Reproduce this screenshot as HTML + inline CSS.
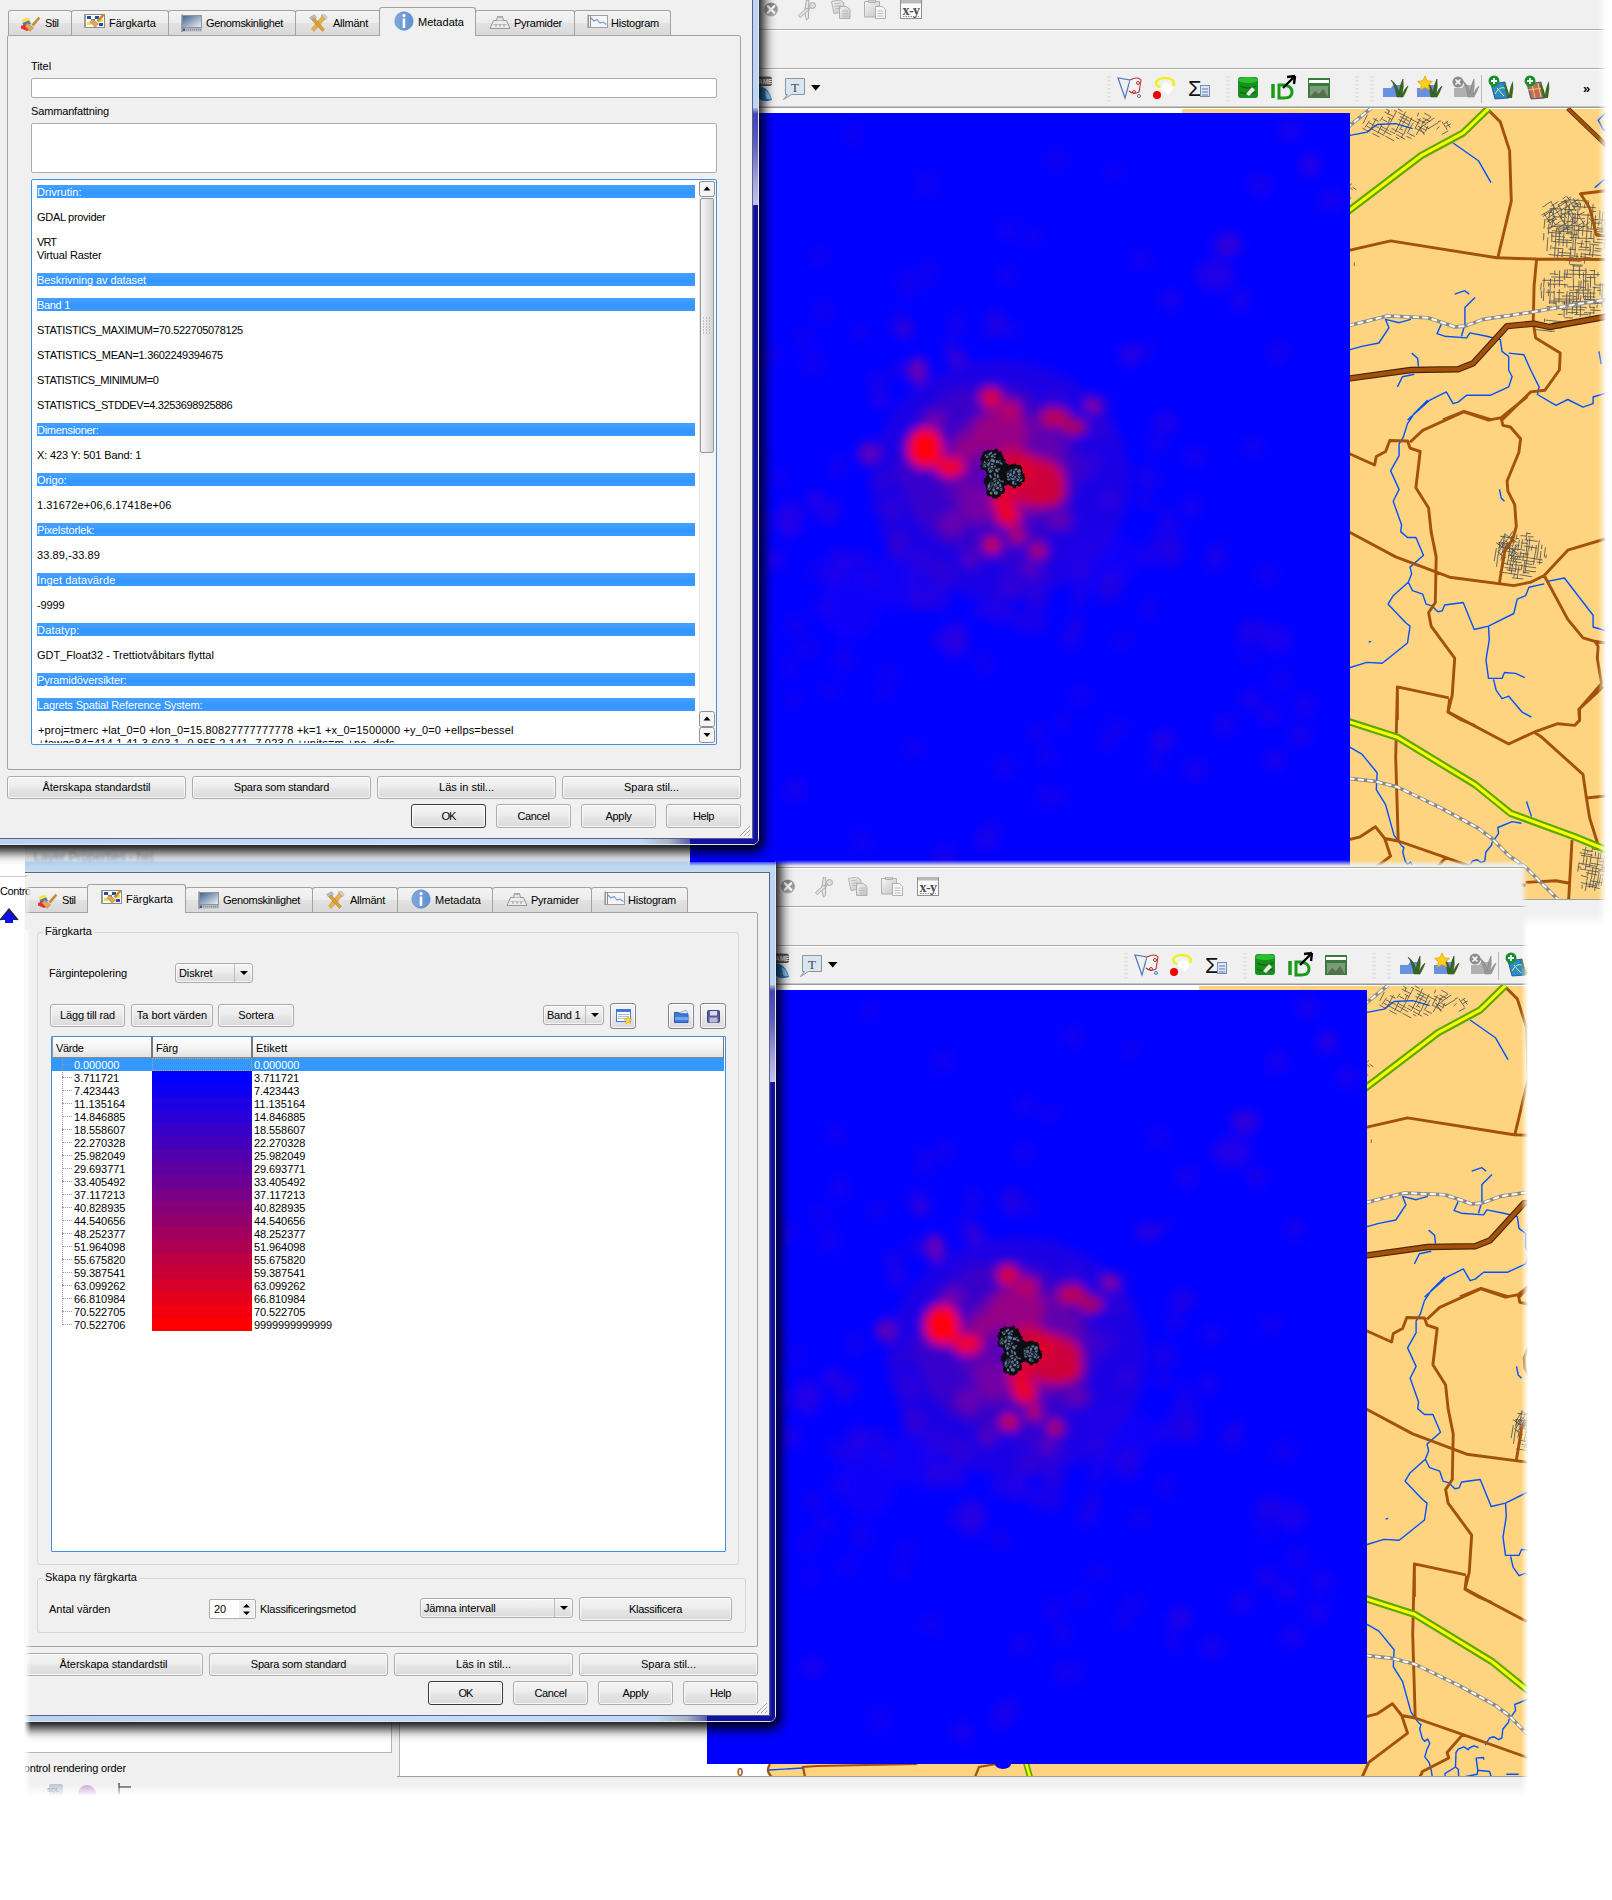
<!DOCTYPE html>
<html lang="sv"><head><meta charset="utf-8"><title>Layer Properties</title>
<style>
html,body{margin:0;padding:0;background:#fff;}
body{width:1612px;height:1900px;position:relative;overflow:hidden;font-family:"Liberation Sans", "DejaVu Sans", sans-serif;font-size:11px;color:#000;}
.a{position:absolute;}
.shot{position:absolute;overflow:hidden;}
.t{position:absolute;white-space:nowrap;line-height:13px;font-size:11px;}
.btn{position:absolute;box-sizing:border-box;border:1px solid #acacac;border-radius:3px;
 background:linear-gradient(#f4f4f4 0%,#ededed 45%,#e5e5e5 55%,#dbdbdb 100%);
 box-shadow:inset 0 0 0 1px rgba(255,255,255,.75);text-align:center;font-size:11px;white-space:nowrap;}
.btn.def{border-color:#3a3a3a;box-shadow:inset 0 0 0 1px #fff;}
.tab{position:absolute;box-sizing:border-box;border:1px solid #a2a2a2;border-bottom:none;border-radius:3px 3px 0 0;
 background:linear-gradient(#f4f4f4 0%,#ececec 48%,#e2e2e2 52%,#d9d9d9 100%);white-space:nowrap;font-size:11px;}
.tab.sel{background:#f0f0f0;z-index:3;}
.tab span{position:absolute;top:0;}
.pane{position:absolute;box-sizing:border-box;border:1px solid #a3a3a3;border-radius:2px;background:#f0f0f0;}
.dlg{position:absolute;background:#f0f0f0;box-sizing:border-box;}
.frame{position:absolute;box-sizing:border-box;}
.inp{position:absolute;box-sizing:border-box;border:1px solid #abadb3;border-radius:2px;background:#fff;}
.hl{position:absolute;left:37px;width:658px;height:13px;background:linear-gradient(#47a1ff,#3396ff 60%,#3a9aff);color:#fff;white-space:nowrap;line-height:15px;overflow:hidden;}
.ln{position:absolute;left:37px;height:14px;line-height:15px;white-space:nowrap;}
.grp{position:absolute;box-sizing:border-box;border:1px solid #d5d5d5;border-radius:3px;}
.grp b{position:absolute;font-weight:normal;background:#f0f0f0;padding:0 2px;line-height:13px;top:-8px;left:5px;white-space:nowrap;}
.combo{position:absolute;box-sizing:border-box;border:1px solid #acacac;border-radius:3px;background:linear-gradient(#f4f4f4 0%,#ededed 45%,#e5e5e5 55%,#dbdbdb 100%);box-shadow:inset 0 0 0 1px rgba(255,255,255,.7);white-space:nowrap;}
.combo i{position:absolute;right:0;top:0;bottom:0;width:17px;border-left:1px solid #bcbcbc;}
.combo i:after{content:"";position:absolute;left:5px;top:7px;border:4px solid transparent;border-top:4px solid #000;border-bottom:none;}
.row{position:absolute;left:0;height:13px;line-height:14px;white-space:nowrap;}
</style></head>
<body>
<div class="shot" style="left:0;top:0;width:1612px;height:930px">
<div class="a" style="left:-60px;top:-60px;width:1780px;height:1010px;background:#f0f0f0"></div>
<div class="a" style="left:-60px;top:-10px;width:1780px;height:1px;background:#a9a9a9"></div><div class="a" style="left:-60px;top:-9px;width:1780px;height:1px;background:#fff"></div>
<div class="a" style="left:-60px;top:29px;width:1780px;height:1px;background:#a9a9a9"></div><div class="a" style="left:-60px;top:30px;width:1780px;height:1px;background:#fff"></div>
<div class="a" style="left:-60px;top:68px;width:1780px;height:1px;background:#a9a9a9"></div><div class="a" style="left:-60px;top:69px;width:1780px;height:1px;background:#fff"></div>
<div class="a" style="left:-60px;top:106px;width:1780px;height:1px;background:#c4c4c4"></div><div class="a" style="left:-60px;top:107px;width:1780px;height:1px;background:#9a9a9a"></div>
<svg class="a" style="left:762px;top:0px" width="170" height="24" viewBox="762 0 170 24">
<defs><linearGradient id="xg" x1="0" y1="0" x2="0" y2="1"><stop offset="0" stop-color="#8a8a8a"/><stop offset="1" stop-color="#adadad"/></linearGradient>
<linearGradient id="pg" x1="0" y1="0" x2="1" y2="1"><stop offset="0" stop-color="#f4f4f4"/><stop offset="1" stop-color="#c4c4c4"/></linearGradient></defs>
<circle cx="771" cy="9.500" r="7.600" fill="#e2e2e2"/><circle cx="771" cy="9.500" r="6.800" fill="url(#xg)"/><path d="M767.800 6.300 L774.200 12.700 M774.200 6.300 L767.800 12.700" stroke="#fff" stroke-width="2.300" stroke-linecap="round"/>
<g fill="#e6e6e6" stroke="#a4a4a4" stroke-width=".9"><path d="M806.500 0 L804.500 12 L806.500 20 L808.500 18.500 L808.800 0Z"/><path d="M798.500 15.500 L807 8 L809.500 9.500 L800 17.500Z"/><circle cx="812.500" cy="5.500" r="3" fill="#ddd"/><path d="M807.500 9.500 L811 7.500"/></g>
<g fill="url(#pg)" stroke="#a9a9a9" stroke-width=".9"><path d="M831.500 1.500 l8 -1.500 l4 2.500 l1.500 9 l-11 2z"/><path d="M839.500 6.500 h7 l3.500 3 v9 h-10.500z"/></g>
<path d="M834 4l6 -1M834.500 6.500l6 -1M835 9l6 -1M842 11h6M842 13.500h6M842 16h6" stroke="#b0b0b0" stroke-width=".8"/>
<g stroke="#a9a9a9" stroke-width=".9"><path d="M864.500 1.500 h15 v15.500 h-15z" fill="url(#pg)"/><path d="M868.500 0 h7 v2.500 h-7z" fill="#d4d4d4"/><path d="M875.500 6.500 h7 l3 3 v9 h-10z" fill="#f6f6f6"/></g>
<path d="M877.500 11h6M877.500 13.500h6M877.500 16h6" stroke="#b0b0b0" stroke-width=".8"/>
<rect x="900.500" y="0.500" width="21" height="18" fill="#fbfbfb" stroke="#8f8f8f"/><rect x="901" y="0" width="20" height="3.500" fill="#b9b9b9"/>
<text x="911" y="14.500" text-anchor="middle" font-family="Liberation Serif,serif" font-weight="bold" font-size="14" fill="#4c4c4c" letter-spacing="-.5">x-y</text><path d="M903 16.500h16" stroke="#777" stroke-width=".8" stroke-dasharray="1.500 1"/></svg><svg class="a" style="left:756px;top:74px" width="70" height="30" viewBox="756 74 70 30">
<rect x="755" y="77" width="16.500" height="8.500" rx="1.500" fill="#6a6a6a" stroke="#444" stroke-width=".8"/><text x="758" y="84" font-family="Liberation Sans,sans-serif" font-weight="bold" font-size="6.500" fill="#eee">AME</text><path d="M758 86 q11 1 14 14 q-9 3 -14 -2z" fill="#2a78c0"/><path d="M765 90 q5 3 6 9 q-3 1 -5 -1z" fill="#8cc4ec"/>
<path d="M785.500 78.500 h19 v16 h-13 l-8 5 l4 -5 h-2z" fill="#d8e6f2" stroke="#8c959c"/>
<text x="795" y="92" text-anchor="middle" font-family="Liberation Serif,serif" font-size="13" fill="#444">T</text>
<path d="M811 85 h9.500 l-4.750 5.500z" fill="#000"/></svg><svg class="a" style="left:1100px;top:72px" width="500" height="32" viewBox="1100 72 500 32">
<g fill="#fff" stroke="#cfcfcf" stroke-width="1"><path d="M1108 76v26M1110 76v26" stroke-dasharray="1.500 2.500"/><path d="M1227 76v26M1229 76v26" stroke-dasharray="1.500 2.500"/>
<path d="M1356 76v26M1358 76v26M1371 76v26M1373 76v26" stroke-dasharray="1.500 2.500"/></g>
<path d="M1118 78 L1125 98 L1130 80 Z" fill="none" stroke="#4a78b8" stroke-width="1.2"/><path d="M1130 80 q8 -4 11 0 l-2 12 q-6 3 -10 -1" fill="#f4f4f4" stroke="#c03030" stroke-width="1.100"/>
<circle cx="1138" cy="83" r="1.500" fill="none" stroke="#c03030"/><circle cx="1134" cy="92" r="1.500" fill="none" stroke="#c03030"/><circle cx="1139" cy="96" r="1.500" fill="none" stroke="#4a78b8"/>
<ellipse cx="1165" cy="83" rx="9" ry="5" fill="none" stroke="#f0f020" stroke-width="2.400"/><path d="M1160 88 l6 -6 l8 5 l-6 8 z" fill="#fff"/><circle cx="1157" cy="95" r="4" fill="#f00000"/>
<text x="1188" y="96" font-family="Liberation Sans,sans-serif" font-size="22" fill="#111">Σ</text><rect x="1200.500" y="85.500" width="9" height="11" fill="#dde6f4" stroke="#7a8aa8"/><path d="M1202 89h6M1202 92h6M1202 95h6" stroke="#5a78c0"/>
<rect x="1238" y="77" width="20" height="21" rx="3" fill="#18901c"/><ellipse cx="1248" cy="80" rx="10" ry="3" fill="#2cc030"/><path d="M1240 86q8 4 16 0M1240 92q8 4 16 0" stroke="#0a5a0c" fill="none"/><path d="M1246 94 l6 -7 l3 3 l-6 6z" fill="#e8e8e8"/>
<path d="M1273 84v14" stroke="#1a9a1a" stroke-width="3.500"/><path d="M1279 98v-13h5q8 1 8 7q0 6 -8 6z" fill="none" stroke="#1a9a1a" stroke-width="3"/><path d="M1283 88 L1295 76 M1295 76 l-8 1 M1295 76 l-1 8" stroke="#000" stroke-width="2.400"/>
<rect x="1308" y="78" width="22" height="20" fill="#3c7a3c"/><rect x="1309" y="80" width="20" height="3" fill="#fff"/><rect x="1310" y="86" width="18" height="11" fill="#7a9a78"/><path d="M1310 97 l5 -6 l4 3 l4 -5 l5 8z" fill="#55704e"/>
<g id="grs"><path d="M1383 88 h8 l2 -3 h8 v12 h-18z" fill="#6a90e0"/><path d="M1397 97 q-2 -12 -6 -17 q7 5 8 14 q1 -10 4 -15 q1 8 -1 16 q3 -7 6 -9 q-2 6 -5 11z" fill="#3a6a20" stroke="#20400f" stroke-width=".5"/></g>
<path d="M1417 88 h8 l2 -3 h8 v12 h-18z" fill="#6a90e0"/><path d="M1431 97 q-2 -12 -6 -17 q7 5 8 14 q1 -10 4 -15 q1 8 -1 16 q3 -7 6 -9 q-2 6 -5 11z" fill="#3a6a20" stroke="#20400f" stroke-width=".5"/>
<path d="M1425 76 l2.200 4.800 l5.200 .6 l-3.900 3.500 l1.100 5.100 l-4.600 -2.600 l-4.600 2.600 l1.100 -5.100 l-3.900 -3.500 l5.200 -.6z" fill="#ffd020" stroke="#e8a000" stroke-width=".8"/>
<path d="M1454 88 h8 l2 -3 h8 v12 h-18z" fill="#b0b0b0"/><path d="M1468 97 q-2 -12 -6 -17 q7 5 8 14 q1 -10 4 -15 q1 8 -1 16 q3 -7 6 -9 q-2 6 -5 11z" fill="#9a9a9a" stroke="#7a7a7a" stroke-width=".5"/>
<circle cx="1458" cy="82" r="5.500" fill="#8c8c8c"/><path d="M1455.500 79.500l5 5M1460.500 79.500l-5 5" stroke="#fff" stroke-width="1.600"/>
<path d="M1481.500 75v28" stroke="#b8b8b8"/>
<path d="M1491 84 l14 -2 l4 16 l-14 1z" fill="#2a8ad0" stroke="#1a4a78" stroke-width=".8"/><path d="M1495 94 q4 -8 10 -6 M1497 88 q3 4 7 8" stroke="#d8f060" fill="none"/><path d="M1507 98 q-2 -12 -5 -16 q6 5 7 13 q1 -9 4 -14 q1 8 -1 17z" fill="#3a6a20"/>
<circle cx="1494" cy="81" r="5.500" fill="#18902a"/><path d="M1491 81h6M1494 78v6" stroke="#fff" stroke-width="1.800"/>
<path d="M1527 84 l14 -2 l4 16 l-14 1z" fill="#c06a58" stroke="#1a4a78" stroke-width=".8"/><path d="M1528 90 l16 -2 M1532 84 l3 14 M1538 83 l3 14" stroke="#e8d070" fill="none"/><path d="M1543 98 q-2 -12 -5 -16 q6 5 7 13 q1 -9 4 -14 q1 8 -1 17z" fill="#3a6a20"/>
<circle cx="1530" cy="81" r="5.500" fill="#18902a"/><path d="M1527 81h6M1530 78v6" stroke="#fff" stroke-width="1.800"/>
<text x="1583" y="93" font-family="Liberation Sans,sans-serif" font-size="13" font-weight="bold" fill="#000">»</text>
</svg>
<div class="a" style="left:-60px;top:108px;width:435px;height:768px;background:#fff;border:1px solid #b5b5b5;border-top:none;box-sizing:border-box"></div>
<div class="t" style="left:-1px;top:885px;"><span style="letter-spacing:-0.164px">Control rendering order</span></div>
<svg class="a" style="left:0px;top:904px" width="130" height="16" viewBox="0 896 130 16"><path d="M-2 898 l8 8 l-6 4z" fill="#2030c0"/><rect x="32" y="899" width="14" height="12" rx="2" fill="#b8c4d0"/><text x="30" y="907" font-size="6" font-family="Liberation Sans,sans-serif" fill="#556">SQL</text><circle cx="70" cy="909" r="9" fill="#c8a0d8"/><path d="M102 898v12M102 902h12" stroke="#333" stroke-width="1.300"/></svg>
<svg class="a" style="left:381px;top:108px" width="1330" height="792" viewBox="381 108 1330 792">
<defs><filter id="bla" x="-50%" y="-50%" width="200%" height="200%"><feGaussianBlur stdDeviation="5.500"/></filter></defs>
<rect x="381" y="108" width="1330" height="792" fill="#fff"/>
<path d="M1182 109 H1711 V900 H756 Q748 894 753 886 L753 113 L1182 113 Z" fill="#fed480"/><path d="M753 887 Q748 894 755 900 M788 900 L786 890 L800 889 L900 887 M958 900 L962 890 L985 886" fill="none" stroke="#a2520c" stroke-width="2.200"/><path d="M752 893 L786 891" stroke="#0050ff" stroke-width="1.300"/><path d="M1009 886 L1013 900" stroke="#5aa800" stroke-width="6"/><path d="M1009 886 L1013 900" stroke="#ffff00" stroke-width="2.600"/><text x="720" y="899" font-size="11" font-family="Liberation Sans,sans-serif" fill="#a2520c" font-weight="bold">0</text>
<path d="M1340.0 137.1 L1350.1 135.4 L1367.0 132.1 L1377.1 124.5 L1395.7 123.6 L1412.6 128.7 M1453.1 143.0 L1478.4 160.7 L1491.0 182.7 M1454.7 294.1 L1464.9 290.7 L1469.1 294.1 M1475.0 297.4 L1464.9 307.6 L1464.9 324.4 L1461.5 336.2 M1340.0 353.1 L1350.1 349.7 L1361.9 346.4 L1378.8 343.0 L1388.9 327.8 L1385.6 319.4 L1399.1 322.7 L1410.9 319.4 M1441.2 324.4 L1437.0 333.7 L1444.6 336.2 L1466.6 337.9 L1469.9 332.9 L1486.8 336.2 L1500.3 339.6 L1502.0 351.4 L1508.7 356.5 L1508.7 370.0 L1512.1 376.7 L1508.7 386.9 L1490.2 395.3 L1466.6 395.3 L1458.1 402.1 L1453.1 403.7 L1446.3 391.9 L1429.4 400.4 L1407.5 419.9 M1508.7 353.1 L1523.9 354.8 L1530.7 370.0 L1539.1 386.9 L1537.4 394.5 L1556.0 405.4 L1567.8 399.5 L1583.0 407.1 L1593.1 403.7 L1593.1 397.0 L1610.0 391.9 M1411.7 353.1 L1417.6 358.2 L1418.5 366.6 M1397.4 386.9 L1402.4 376.7 L1414.2 374.2 M1610.0 108.4 L1598.2 120.2 L1603.2 129.5 L1610.0 132.1 M1594.8 187.7 L1603.2 180.2 L1610.0 179.3 M1599.0 351.4 L1601.2 364.1 M1427.7 400.0 L1414.2 413.5 L1407.5 423.6 L1403.3 437.1 L1399.1 443.9 L1399.1 455.7 L1390.6 470.9 L1399.1 489.4 L1393.2 501.2 L1401.6 524.9 L1400.7 531.6 L1407.5 537.5 L1415.9 537.5 L1423.5 555.2 L1410.0 567.1 L1411.7 573.8 L1408.3 582.2 L1393.2 595.7 L1388.1 604.2 L1405.8 622.7 L1410.0 626.1 L1407.5 643.0 L1382.2 663.2 L1367.0 662.4 L1350.1 667.5 L1340.0 670.0 M1408.3 582.2 L1412.6 590.7 L1422.7 594.1 L1426.1 604.2 L1432.0 605.9 L1437.9 611.8 L1442.1 610.9 L1444.6 605.0 L1463.2 602.5 L1474.2 629.5 L1488.5 626.1 L1513.8 613.5 L1517.2 599.1 L1525.6 595.7 L1529.0 587.3 L1544.2 583.9 M1488.5 626.1 L1489.3 639.6 L1486.0 659.9 L1488.5 678.4 L1502.0 678.4 L1504.5 672.5 L1515.5 673.4 L1524.8 677.6 M1493.6 679.3 L1496.1 690.2 L1502.0 698.7 L1508.7 696.2 L1522.2 712.2 L1531.5 717.2 M1547.6 581.4 L1564.4 578.0 L1593.1 615.2 L1593.1 627.0 L1610.0 632.0 M1499.5 489.4 L1501.2 497.9 L1504.5 501.2 M1368.7 642.2 L1371.2 641.3 M1340.0 742.3 L1350.1 747.4 L1361.9 754.1 L1377.1 772.7 L1376.3 789.6 L1385.6 804.7 L1394.0 835.1 L1401.1 845.2 M1526.5 801.4 L1531.5 816.6 M1521.4 823.3 L1512.1 821.6 L1497.8 827.5 L1498.6 833.4 L1492.7 841.9 M1401.1 845.3 L1403.9 847.6 L1402.7 852.0 L1405.5 862.1 L1407.8 864.3 L1410.6 862.1 L1412.8 866.5 L1410.0 872.1 L1407.8 879.9 L1412.2 885.5 L1414.5 894.5 L1415.4 901.2 M1492.1 842.0 L1491.5 845.3 L1485.9 852.0 L1484.8 861.0 L1481.5 862.6 L1477.0 859.8 L1472.5 861.0 L1468.1 868.2 M1461.4 870.5 L1456.9 868.8 L1452.4 871.0 L1451.3 872.7 L1446.8 869.9 L1441.3 872.1 L1439.0 875.5 L1438.5 890.0 L1427.9 896.7 L1428.4 901.2 M1438.5 890.0 L1441.3 892.2 L1441.8 901.2 M1466.9 882.7 L1466.4 880.5 L1459.1 881.1 L1460.8 893.3 L1460.2 897.3 L1446.8 900.0 M1460.8 893.3 L1472.5 894.5 L1474.8 901.2 M1489.3 897.3 L1501.6 897.3" fill="none" stroke="#0050ff" stroke-width="1.4" stroke-linejoin="round"/>
<path d="M1424.2 113.1L1430.7 116.6 M1422.7 117.9L1430.2 121.7 M1397.8 108.7L1402.6 111.5 M1417.2 119.0L1425.8 123.3 M1394.2 110.3L1397.0 111.7 M1398.4 112.5L1409.5 118.2 M1409.8 118.6L1419.8 123.6 M1424.4 126.4L1428.9 128.8 M1386.2 109.1L1389.9 111.4 M1400.0 116.5L1409.6 121.4 M1417.7 125.9L1426.3 130.7 M1384.6 111.9L1393.7 116.7 M1398.4 119.3L1409.5 124.9 M1415.1 128.1L1425.0 133.2 M1387.7 117.1L1391.7 119.4 M1382.5 119.5L1387.1 121.8 M1400.8 129.2L1403.1 130.2 M1408.4 133.2L1412.0 135.4 M1411.4 134.8L1414.9 136.5 M1373.1 118.5L1378.6 121.3 M1391.3 128.1L1395.2 130.3 M1395.1 130.1L1403.2 134.5 M1406.3 136.1L1411.4 138.6 M1380.9 126.2L1388.9 130.6 M1389.8 131.0L1394.9 133.7 M1396.0 134.3L1405.2 139.3 M1368.7 122.7L1378.9 127.9 M1379.4 128.3L1391.4 135.0 M1395.8 137.1L1399.3 139.2 M1366.9 126.3L1377.4 131.9 M1377.4 131.9L1384.2 135.5 M1385.4 136.2L1394.4 141.0 M1362.4 128.1L1369.6 132.0 M1372.4 133.4L1379.6 137.2 M1367.4 114.9L1362.8 123.9 M1369.6 120.6L1365.1 127.4 M1376.4 118.2L1372.3 126.0 M1372.3 125.9L1370.3 130.5 M1383.0 116.6L1380.2 120.7 M1389.1 110.9L1387.9 114.5 M1381.8 124.6L1377.7 133.6 M1390.3 118.3L1387.4 124.2 M1396.2 111.8L1390.3 122.6 M1390.4 122.7L1383.7 134.5 M1405.6 111.6L1401.4 120.1 M1401.2 119.9L1395.1 132.5 M1407.0 117.2L1402.5 124.3 M1403.0 124.7L1399.4 130.0 M1412.0 117.2L1407.3 127.7 M1406.8 127.1L1403.8 134.3 M1403.3 133.7L1401.2 138.2 M1418.7 112.6L1417.3 116.4 M1413.2 122.8L1407.2 133.4 M1420.4 118.4L1415.0 128.5 M1424.0 120.8L1420.3 129.0 M1419.9 128.6L1416.2 135.0 M1428.0 125.9L1425.5 131.4 M1421.8 122.8L1431.1 117.3 M1419.3 128.2L1426.4 123.9 M1426.0 123.5L1434.4 117.9 M1427.8 129.0L1438.4 122.5 M1437.9 122.0L1440.8 120.7 M1436.5 129.3L1439.5 126.4 M1444.1 124.0L1448.1 121.1 M1446.0 126.5L1450.8 123.9 M1441.8 134.4L1448.2 130.9 M1419.5 127.6L1424.3 134.8 M1441.8 121.6L1447.4 129.8 M1446.2 121.8L1450.2 127.5 M1569.3 199.8L1579.7 200.7 M1579.6 200.6L1588.9 201.1 M1560.8 201.8L1569.2 202.1 M1572.1 202.6L1577.2 203.5 M1572.2 206.3L1585.1 207.3 M1585.0 207.2L1595.6 207.6 M1550.1 208.5L1560.0 209.0 M1563.8 209.4L1576.5 209.9 M1592.7 211.5L1596.1 211.4 M1548.9 212.6L1551.9 212.4 M1560.8 213.4L1564.4 214.0 M1566.0 213.8L1576.0 214.0 M1576.5 214.5L1581.0 214.7 M1581.2 214.8L1592.1 215.4 M1553.5 216.6L1559.9 217.0 M1560.0 217.1L1564.3 217.3 M1573.0 218.0L1580.6 218.6 M1581.8 218.6L1584.7 218.4 M1593.8 219.4L1607.6 220.3 M1546.6 219.9L1554.8 219.9 M1561.1 220.9L1565.7 220.9 M1566.1 221.2L1574.3 222.0 M1593.2 223.1L1601.3 223.2 M1556.1 224.8L1563.4 225.5 M1565.7 225.5L1577.3 225.8 M1577.9 226.3L1585.1 226.5 M1585.4 226.9L1589.1 227.0 M1596.9 227.7L1604.5 228.5 M1605.8 228.3L1610.5 229.0 M1550.6 226.3L1561.3 226.9 M1561.5 227.1L1573.3 227.9 M1586.7 228.8L1598.6 229.4 M1598.9 229.7L1605.0 230.3 M1547.1 228.1L1551.2 227.9 M1557.2 228.8L1570.6 229.4 M1573.2 230.0L1583.5 230.6 M1583.5 230.7L1588.3 231.5 M1587.8 231.0L1592.1 231.5 M1597.3 231.6L1605.2 232.1 M1551.9 230.7L1564.5 231.6 M1564.5 231.5L1572.5 232.6 M1595.1 233.7L1600.4 233.9 M1548.0 232.2L1561.1 233.5 M1566.4 233.5L1577.9 234.8 M1595.8 235.6L1603.7 236.2 M1551.0 236.0L1561.1 236.5 M1561.4 236.7L1565.0 237.3 M1569.4 237.3L1581.2 238.3 M1581.0 238.1L1593.1 238.6 M1596.8 239.2L1603.1 239.7 M1603.0 239.7L1609.9 240.0 M1556.4 239.5L1568.0 240.2 M1568.2 240.3L1572.0 240.5 M1584.5 241.5L1590.8 241.9 M1593.3 242.1L1607.1 243.4 M1552.6 241.5L1565.9 242.6 M1565.7 242.4L1572.0 242.6 M1576.7 243.2L1584.1 244.0 M1588.8 244.0L1599.1 245.1 M1579.1 247.0L1589.3 247.6 M1595.2 248.2L1602.5 249.1 M1551.9 247.9L1563.3 248.7 M1568.4 249.1L1575.9 249.7 M1578.3 249.7L1591.0 250.2 M1593.7 250.8L1601.1 251.2 M1558.8 252.3L1571.4 253.4 M1581.8 253.9L1592.0 255.0 M1591.6 254.6L1601.6 255.8 M1548.7 254.5L1563.1 256.0 M1562.6 255.4L1575.4 256.1 M1575.6 256.4L1578.5 256.4 M1580.4 256.7L1591.4 258.0 M1569.4 257.9L1573.3 257.7 M1575.1 258.3L1580.6 258.8 M1580.4 258.7L1593.4 259.6 M1565.1 260.2L1573.6 261.1 M1573.2 260.8L1579.0 261.4 M1578.7 261.2L1581.7 261.0 M1569.9 264.6L1582.5 265.2 M1544.9 219.0L1544.3 225.7 M1544.4 225.8L1543.8 228.5 M1543.9 233.0L1543.5 240.2 M1549.7 212.0L1548.6 222.3 M1548.9 224.0L1548.3 234.4 M1547.9 237.4L1546.9 251.1 M1553.8 205.4L1553.5 209.5 M1553.5 209.5L1553.1 219.1 M1552.8 220.0L1551.8 227.8 M1551.9 231.9L1551.8 242.2 M1551.0 245.4L1550.6 249.3 M1556.5 228.1L1555.4 241.5 M1555.5 241.7L1555.9 245.4 M1555.3 244.8L1554.5 257.3 M1561.3 208.5L1561.0 219.4 M1559.6 232.8L1558.8 245.9 M1558.5 247.9L1558.1 252.9 M1558.2 253.0L1557.2 258.5 M1566.2 199.6L1566.2 208.2 M1565.6 207.7L1564.9 216.3 M1565.0 216.3L1563.8 227.7 M1564.2 228.1L1563.3 231.9 M1563.9 232.5L1563.0 246.3 M1562.7 249.4L1561.9 257.2 M1569.4 204.0L1568.5 217.7 M1568.4 217.6L1567.8 223.2 M1568.0 223.3L1567.5 231.5 M1566.9 239.5L1566.8 247.5 M1573.1 213.5L1572.1 224.7 M1572.3 224.9L1572.0 231.9 M1571.8 231.7L1571.9 239.8 M1570.8 246.6L1570.6 254.4 M1570.3 254.1L1569.4 264.3 M1575.2 213.3L1574.9 224.7 M1574.4 225.7L1574.2 235.8 M1573.7 235.3L1572.8 238.8 M1573.4 239.3L1572.5 250.0 M1578.0 208.3L1577.4 220.7 M1577.1 220.4L1576.8 226.6 M1576.4 231.7L1575.1 245.2 M1575.4 245.5L1574.7 256.5 M1580.6 203.7L1579.7 210.3 M1579.1 223.8L1578.0 235.1 M1578.3 235.5L1578.5 238.8 M1577.1 253.1L1576.6 259.4 M1584.7 204.5L1584.4 208.2 M1583.4 223.1L1582.4 235.8 M1582.2 239.8L1581.1 247.4 M1581.3 252.8L1581.1 257.6 M1589.0 201.5L1588.3 204.4 M1588.2 213.4L1587.0 226.6 M1587.2 226.8L1586.5 237.9 M1586.4 238.9L1586.1 249.4 M1585.4 253.4L1584.4 263.6 M1593.1 204.0L1592.8 208.8 M1592.7 208.7L1592.6 218.1 M1592.1 217.6L1591.1 228.9 M1591.2 231.0L1590.8 239.0 M1590.2 245.5L1590.2 252.8 M1589.7 252.3L1589.3 255.6 M1595.5 215.4L1595.0 226.5 M1594.8 226.3L1593.8 236.9 M1594.0 237.1L1593.5 242.6 M1593.5 244.9L1593.1 251.7 M1593.0 251.6L1592.4 257.3 M1599.9 210.3L1599.9 213.6 M1599.7 213.4L1599.7 218.8 M1599.2 221.0L1598.6 225.5 M1603.1 211.6L1601.7 223.8 M1602.2 224.3L1601.8 233.0 M1604.5 222.0L1604.8 226.0 M1606.7 218.6L1605.6 228.3 M1605.8 231.5L1605.1 245.4 M1604.9 245.2L1604.5 248.6 M1608.7 222.1L1607.9 231.3 M1572.5 265.9L1582.4 266.1 M1568.7 270.0L1579.9 270.6 M1579.5 270.2L1586.1 270.7 M1589.6 270.4L1594.6 270.8 M1549.7 273.9L1553.0 273.8 M1553.1 274.0L1558.2 274.5 M1563.6 274.1L1576.4 274.3 M1576.4 274.4L1586.6 274.6 M1586.5 274.5L1599.8 274.7 M1551.4 276.9L1560.9 277.2 M1560.7 277.1L1564.4 277.1 M1564.4 277.1L1571.6 277.6 M1586.3 277.5L1595.7 277.5 M1542.5 280.4L1553.2 280.2 M1553.6 280.6L1559.1 280.6 M1559.2 280.7L1563.1 280.6 M1584.0 281.1L1589.5 281.2 M1548.4 284.2L1559.9 284.2 M1560.1 284.4L1568.2 285.0 M1595.4 285.0L1605.4 285.0 M1567.1 286.9L1579.5 286.6 M1580.0 287.2L1585.1 287.4 M1592.5 287.4L1599.7 287.9 M1569.1 290.0L1572.6 290.5 M1574.6 290.1L1580.4 290.1 M1580.5 290.2L1591.5 289.9 M1597.4 290.5L1601.1 290.3 M1545.7 292.2L1554.7 292.2 M1556.7 292.4L1564.2 292.8 M1568.8 292.6L1578.5 292.6 M1578.7 292.8L1589.6 293.2 M1589.4 292.9L1595.3 293.3 M1561.9 296.1L1572.5 295.9 M1573.0 296.3L1576.4 296.7 M1582.7 296.5L1595.4 297.1 M1554.5 299.0L1567.6 299.0 M1567.8 299.2L1579.5 299.0 M1584.0 299.5L1595.1 299.5 M1598.0 299.7L1605.6 299.9 M1549.4 301.0L1559.8 301.1 M1559.8 301.2L1572.2 300.9 M1572.7 301.4L1585.7 301.5 M1585.8 301.6L1590.5 301.3 M1590.8 301.7L1597.5 302.0 M1597.3 301.8L1603.5 301.8 M1548.9 302.7L1556.2 303.2 M1561.9 302.9L1570.1 303.0 M1570.1 303.1L1582.2 303.3 M1582.2 303.3L1594.9 303.8 M1594.6 303.5L1602.4 303.3 M1546.7 306.5L1552.2 307.0 M1560.7 306.7L1571.2 306.4 M1571.7 306.9L1578.0 307.1 M1577.9 307.0L1580.9 307.0 M1581.0 307.1L1586.8 307.7 M1590.0 307.3L1594.5 307.5 M1550.2 309.2L1556.6 309.5 M1562.4 309.4L1572.3 309.1 M1572.8 309.6L1579.9 309.9 M1579.6 309.7L1584.8 309.9 M1590.1 309.9L1600.8 310.6 M1567.4 312.6L1578.3 312.5 M1583.9 312.8L1587.1 312.6 M1587.4 312.9L1594.2 312.9 M1557.7 314.4L1562.6 314.3 M1574.7 314.6L1579.0 314.4 M1579.3 314.7L1588.3 314.6 M1564.4 317.6L1573.0 318.0 M1541.3 282.9L1540.7 289.8 M1541.2 290.4L1541.6 298.3 M1544.3 277.9L1543.6 287.3 M1544.1 287.8L1543.3 300.9 M1548.2 282.1L1548.5 286.5 M1548.1 289.0L1548.5 296.2 M1550.5 278.7L1550.2 288.3 M1550.3 288.4L1549.7 292.5 M1550.3 293.1L1549.6 303.9 M1554.6 270.6L1555.1 274.9 M1554.5 278.2L1554.6 282.6 M1554.4 283.7L1554.4 288.4 M1554.2 290.5L1554.1 304.2 M1556.2 300.9L1556.0 307.6 M1559.6 270.5L1559.5 278.9 M1559.4 278.8L1559.4 286.6 M1559.3 289.2L1558.9 303.1 M1562.0 305.3L1562.2 310.6 M1565.0 269.3L1564.3 280.0 M1564.8 283.6L1565.0 287.7 M1564.5 301.2L1564.1 308.0 M1564.3 308.3L1564.0 316.9 M1567.4 269.3L1566.8 277.7 M1567.1 291.2L1566.4 304.6 M1566.8 308.1L1566.7 314.9 M1569.8 292.9L1569.3 304.8 M1573.5 264.5L1573.6 269.6 M1573.4 269.4L1573.1 278.3 M1573.3 278.4L1573.6 290.8 M1573.0 292.8L1573.3 302.0 M1572.8 301.6L1572.1 314.3 M1577.0 289.2L1576.6 301.0 M1576.8 301.3L1576.5 314.5 M1579.3 265.9L1579.5 278.5 M1579.1 280.5L1578.6 293.8 M1578.8 294.1L1578.2 299.5 M1581.2 280.6L1580.6 289.0 M1580.9 295.5L1580.4 301.1 M1580.8 304.3L1580.2 317.0 M1583.6 272.4L1583.3 278.7 M1583.5 278.8L1583.3 290.4 M1583.3 290.4L1583.6 298.7 M1585.9 268.3L1586.3 273.0 M1585.8 272.5L1585.6 286.5 M1585.6 286.5L1585.4 290.4 M1585.4 294.5L1585.2 300.9 M1588.0 283.0L1588.3 291.7 M1587.9 291.2L1587.8 300.2 M1590.7 275.4L1590.4 287.7 M1590.5 291.4L1590.5 299.0 M1590.3 298.8L1589.8 307.9 M1590.1 312.3L1589.8 316.6 M1594.6 269.6L1594.0 277.0 M1594.5 277.4L1594.8 285.1 M1594.3 286.5L1593.6 298.1 M1594.0 306.8L1593.8 314.0 M1598.0 272.6L1597.9 276.3 M1597.4 304.6L1596.8 308.1 M1600.2 282.6L1600.0 295.5 M1602.4 283.2L1602.2 286.4 M1602.4 286.6L1602.0 298.6 M1602.1 300.6L1602.2 306.6 M1542.4 207.0L1545.8 205.5 M1545.4 205.1L1551.9 201.1 M1551.1 206.2L1558.4 201.5 M1562.6 199.0L1565.7 196.4 M1541.4 215.1L1553.5 208.5 M1557.7 205.0L1563.9 201.6 M1563.6 201.3L1566.6 200.0 M1568.1 198.5L1570.9 197.0 M1542.9 216.6L1552.9 209.8 M1553.2 210.2L1559.9 205.5 M1560.2 205.8L1570.8 198.7 M1545.9 219.4L1554.4 213.4 M1554.8 213.8L1561.2 209.7 M1561.3 209.8L1569.5 205.4 M1569.0 204.9L1578.8 199.0 M1546.9 222.2L1555.0 217.5 M1573.5 205.5L1579.9 202.4 M1549.7 223.1L1555.8 219.1 M1559.7 216.9L1563.3 214.2 M1563.5 214.5L1573.7 209.0 M1574.2 207.8L1580.9 203.0 M1549.3 228.9L1553.4 225.8 M1553.7 226.1L1560.5 221.2 M1558.3 227.7L1567.5 222.5 M1570.1 220.3L1575.6 216.2 M1579.2 214.7L1584.5 212.0 M1558.2 233.1L1568.9 227.0 M1568.6 226.6L1576.8 221.3 M1565.6 233.7L1571.4 230.8 M1577.6 226.2L1579.9 224.1 M1580.3 224.5L1585.2 220.8 M1575.8 231.4L1582.6 227.0 M1582.7 227.1L1589.8 222.2 M1543.9 213.3L1546.7 217.7 M1547.8 219.5L1551.2 225.2 M1551.5 218.6L1555.6 225.3 M1557.1 227.6L1561.4 234.1 M1549.7 208.6L1556.7 220.0 M1551.1 202.0L1554.8 208.0 M1555.0 208.2L1561.0 217.7 M1560.9 217.7L1565.6 225.1 M1565.5 224.9L1568.5 230.2 M1558.4 205.1L1561.9 211.0 M1563.7 213.7L1566.7 218.1 M1567.2 210.5L1573.4 220.4 M1573.4 220.4L1575.2 223.6 M1564.0 199.8L1569.0 207.6 M1568.6 207.2L1573.8 215.3 M1566.6 196.0L1573.2 206.2 M1572.7 205.8L1575.9 211.2 M1577.1 212.8L1584.5 224.5 M1573.3 198.4L1578.8 207.2 M1588.9 217.6L1591.4 221.2 M1526.7 533.4L1530.7 533.6 M1520.5 535.6L1526.3 536.1 M1528.0 536.7L1533.7 536.9 M1500.3 536.3L1512.8 538.3 M1516.3 538.5L1519.0 538.6 M1524.5 539.7L1537.6 541.3 M1511.0 541.5L1515.1 542.2 M1521.6 543.0L1527.6 543.5 M1498.2 542.4L1510.0 544.0 M1515.7 544.9L1519.4 545.7 M1523.6 546.0L1537.3 548.2 M1499.9 546.8L1510.6 548.1 M1510.9 548.4L1516.0 549.6 M1515.4 549.0L1525.0 550.2 M1507.3 551.3L1513.6 552.4 M1519.5 553.0L1528.8 554.3 M1508.2 555.0L1521.2 557.3 M1520.7 556.7L1528.9 557.5 M1529.3 557.9L1542.7 560.0 M1510.6 558.5L1521.0 559.6 M1521.4 560.0L1531.7 561.6 M1531.5 561.4L1534.6 561.6 M1536.6 562.1L1542.6 562.7 M1508.5 560.8L1514.0 561.2 M1514.5 561.7L1521.6 562.8 M1525.2 563.2L1532.4 564.7 M1503.2 563.2L1513.3 565.1 M1514.4 564.8L1523.1 565.7 M1523.5 566.1L1536.1 567.8 M1504.6 567.5L1512.7 568.4 M1513.0 568.6L1521.3 569.8 M1525.4 570.4L1533.5 571.8 M1533.2 571.5L1536.0 571.6 M1506.7 569.8L1515.0 571.1 M1522.8 572.1L1529.4 573.1 M1499.3 571.9L1510.0 573.4 M1510.0 573.4L1517.6 574.8 M1519.6 574.7L1532.1 576.8 M1512.0 577.7L1523.4 579.0 M1496.4 548.1L1494.2 561.1 M1499.8 542.4L1498.4 554.8 M1498.1 554.4L1496.5 566.8 M1505.0 533.1L1505.1 536.6 M1504.6 536.1L1503.1 543.3 M1503.3 545.5L1502.7 553.0 M1502.0 554.8L1500.9 560.6 M1506.6 542.9L1506.0 549.3 M1505.4 551.0L1504.4 553.8 M1505.0 554.3L1502.8 567.6 M1511.6 535.9L1509.2 549.0 M1509.7 549.5L1508.7 557.0 M1508.7 556.9L1507.0 565.1 M1514.8 532.9L1513.3 538.6 M1513.9 539.2L1513.1 544.0 M1513.2 544.1L1512.2 547.5 M1512.6 548.0L1511.2 561.4 M1510.6 562.1L1509.5 571.0 M1517.0 534.5L1516.0 539.6 M1515.6 544.7L1513.5 556.1 M1513.6 558.8L1513.1 562.8 M1512.9 564.0L1511.0 574.2 M1519.4 539.8L1517.7 550.9 M1516.4 561.1L1515.3 572.1 M1514.7 573.4L1513.9 576.8 M1522.6 539.2L1521.1 548.8 M1520.8 551.5L1520.8 555.0 M1520.4 554.6L1519.5 558.2 M1518.7 566.4L1518.6 571.2 M1518.1 570.7L1517.4 578.7 M1526.8 532.0L1526.3 540.1 M1523.8 553.7L1523.0 559.7 M1522.2 564.4L1521.2 569.7 M1527.7 540.2L1526.7 543.1 M1527.2 543.6L1525.8 556.7 M1524.8 560.7L1523.4 573.5 M1529.8 538.1L1528.8 549.4 M1528.3 548.8L1526.6 562.0 M1526.4 561.8L1524.9 573.6 M1532.4 545.3L1531.0 550.7 M1536.4 545.0L1535.6 552.4 M1535.4 552.2L1533.4 564.9 M1539.3 540.2L1537.7 553.1 M1537.5 552.9L1536.8 558.4 M1541.9 544.9L1541.4 549.2 M1541.0 551.0L1539.9 560.7 M1539.7 560.5L1539.6 564.5 M1545.4 547.3L1544.3 557.3 M1546.3 554.6L1545.8 558.5 M1498.2 545.1L1505.1 534.2 M1498.5 548.4L1502.2 542.5 M1499.1 551.2L1504.9 541.5 M1505.5 542.1L1513.1 531.1 M1499.8 555.4L1506.7 546.1 M1507.2 544.7L1509.2 542.4 M1504.2 554.1L1505.9 551.3 M1508.1 548.6L1511.3 545.4 M1509.9 555.8L1517.0 545.9 M1510.6 559.1L1515.5 552.7 M1514.4 559.4L1516.4 555.7 M1511.7 565.7L1519.0 555.4 M1497.3 551.6L1506.0 557.8 M1510.7 555.3L1515.0 558.3 M1495.9 542.6L1506.2 549.6 M1501.2 543.6L1510.5 550.0 M1515.0 553.3L1518.1 555.4 M1502.4 542.8L1512.3 549.7 M1512.0 549.5L1518.8 554.1 M1504.2 540.1L1511.4 545.3 M1506.3 535.0L1514.9 541.1 M1514.4 540.6L1517.4 542.6 M1593.4 845.8L1600.4 847.3 M1592.5 848.8L1602.8 850.9 M1582.1 849.5L1592.9 851.7 M1579.6 852.6L1592.6 855.3 M1580.9 855.3L1590.0 856.6 M1590.3 856.9L1603.2 859.1 M1599.2 861.0L1605.6 862.1 M1590.4 863.1L1603.5 865.3 M1579.1 863.2L1583.3 864.1 M1583.1 863.9L1596.1 866.4 M1600.9 867.0L1605.3 868.2 M1585.4 866.4L1590.8 866.9 M1591.4 867.4L1605.4 870.3 M1578.0 866.8L1581.1 867.3 M1598.4 870.4L1605.3 871.9 M1579.5 868.9L1586.3 869.8 M1586.7 870.2L1599.1 872.0 M1586.0 872.7L1597.1 875.0 M1581.0 875.5L1586.9 877.0 M1590.8 880.8L1602.4 883.0 M1580.8 882.6L1594.5 885.4 M1586.7 886.0L1594.4 887.0 M1594.8 887.5L1600.2 888.7 M1579.1 862.5L1577.7 871.6 M1586.0 846.9L1583.6 858.7 M1583.9 859.0L1582.7 865.0 M1588.3 850.3L1587.5 853.0 M1587.1 857.1L1585.2 869.6 M1582.2 884.6L1582.0 888.6 M1593.4 844.1L1592.5 848.4 M1592.6 848.5L1591.6 851.8 M1591.7 853.7L1590.9 856.7 M1591.1 856.9L1589.3 867.3 M1588.6 871.4L1587.2 875.9 M1587.7 876.4L1586.7 880.7 M1586.9 880.9L1585.2 890.9 M1595.6 851.7L1595.3 856.5 M1592.8 867.9L1591.4 879.0 M1590.9 878.6L1589.3 888.0 M1598.9 852.4L1597.0 866.6 M1596.5 866.2L1595.2 874.5 M1595.1 874.3L1592.5 887.7 M1601.7 848.2L1600.4 858.2 M1595.5 882.9L1594.6 890.8 M1599.3 871.7L1598.0 878.4 M1598.1 878.5L1596.0 888.0 M1604.4 855.7L1602.2 868.8 M1601.1 874.1L1598.5 885.8 M1604.5 865.9L1604.0 869.0 M1603.3 872.9L1602.7 876.2 M1602.4 878.2L1601.2 885.8 M1352.5 187.1L1356.4 189.9 M1346.3 185.2L1352.7 189.7 M1345.1 194.3L1351.3 198.5 M1344.0 198.4L1347.4 200.7 M1351.9 183.6L1349.7 185.5 M1354.3 262.3L1354.2 266.0 M1545.5 320.1L1553.0 320.8 M1553.1 320.8L1563.7 322.1 M1552.5 322.8L1559.7 323.2 M1560.0 323.5L1564.9 323.9 M1538.5 325.6L1544.7 325.6 M1545.3 326.2L1551.4 326.3 M1551.9 326.8L1561.7 328.1 M1535.3 329.6L1538.9 329.9 M1538.9 330.0L1546.6 330.7 M1546.5 330.6L1551.9 331.6 M1551.3 331.0L1554.8 331.4 M1544.5 318.5L1544.6 322.1 M1547.6 325.1L1547.3 330.1 M1557.2 323.4L1557.0 327.1" fill="none" stroke="#474b54" stroke-width=".8"/>
<path d="M1340.0 252.7 L1350.1 250.2 L1390.6 240.9 L1496.9 257.8 L1536.6 259.0 L1610.0 259.5 M1488.5 110.1 L1500.3 121.9 L1509.6 150.6 L1511.3 201.2 L1497.8 257.8 M1536.6 259.0 L1534.1 285.6 L1533.2 322.7 L1535.7 337.9 L1560.2 353.1 L1559.4 370.0 L1545.0 390.2 L1530.7 391.9 L1502.0 419.9 M1442.9 419.9 L1464.0 411.3 L1491.9 419.9 M1610.0 190.3 L1580.5 193.7 L1589.7 208.0 L1596.5 235.0 L1610.0 236.7 M1340.0 449.8 L1350.1 454.0 L1374.6 465.0 L1376.3 456.5 L1385.6 451.5 L1389.8 440.5 L1407.5 441.0 L1410.0 448.1 L1420.2 451.5 L1415.9 487.7 L1428.6 508.0 L1431.1 531.6 L1436.2 556.9 L1435.3 602.5 L1428.6 612.6 L1431.1 626.1 L1454.7 658.2 L1452.2 695.3 L1448.0 712.2 L1461.5 719.9 L1475.0 725.7 M1410.0 442.2 L1422.7 430.4 L1464.0 411.8 L1488.5 420.2 L1501.2 417.7 L1523.1 400.0 L1527.3 396.6 M1501.2 417.7 L1502.8 425.3 L1510.4 427.0 L1520.6 438.8 L1518.9 452.3 L1507.1 481.0 L1507.9 491.1 L1514.7 504.6 L1516.3 526.6 L1513.0 538.4 L1504.5 551.9 L1499.5 582.2 M1340.0 526.6 L1350.1 532.5 L1395.7 556.9 L1449.7 577.2 L1513.8 585.6 L1530.7 582.2 L1544.2 575.5 L1567.8 550.2 L1610.0 537.5 M1544.2 575.5 L1567.8 619.4 L1583.0 637.9 L1594.8 641.3 L1598.2 646.4 L1597.3 658.2 L1601.6 683.5 L1579.6 708.8 L1579.6 719.9 M1594.8 641.3 L1610.0 643.8 M1397.4 719.9 L1397.4 686.9 L1448.8 697.8 M1397.4 686.6 L1395.7 757.5 L1398.2 840.2 M1449.7 698.4 L1448.0 711.9 L1508.7 744.0 L1534.1 732.2 L1557.7 723.7 L1574.6 725.4 L1579.6 720.4 L1578.8 709.4 L1599.9 690.0 L1603.2 686.6 M1534.1 732.2 L1540.8 736.4 L1583.0 774.4 L1586.4 798.0 L1610.0 795.5 M1586.4 798.0 L1589.7 818.2 L1598.2 845.2 M1340.0 840.2 L1350.1 839.3 L1360.2 836.8 L1375.4 826.7 L1384.7 838.5 L1398.2 841.0 L1444.6 857.1 L1510.4 880.5 L1525.6 885.7 M1384.7 838.5 L1390.6 856.2 L1351.8 885.4 L1345.1 900.1 M1445.6 857.6 L1430.1 875.5 L1431.8 881.0 L1405.5 894.5 L1402.8 900.1 M1572.0 840.2 L1568.7 899.2 M1525.6 882.4 L1556.0 880.7 L1569.5 883.2" fill="none" stroke="#a2520c" stroke-width="2.9" stroke-linejoin="round"/>
<path d="M1567.8 108.4 L1610.0 148.9" fill="none" stroke="#5a2c05" stroke-width="4.6"/>
<path d="M1567.8 108.4 L1610.0 148.9" fill="none" stroke="#a2520c" stroke-width="3"/>
<path d="M1340.0 380.1 L1350.1 378.4 L1410.9 370.0 L1458.1 369.2 L1473.3 363.2 L1507.1 326.1 L1534.1 323.6 L1549.2 327.0 L1610.0 316.0" fill="none" stroke="#4a2404" stroke-width="6.4" stroke-linejoin="round"/>
<path d="M1340.0 380.1 L1350.1 378.4 L1410.9 370.0 L1458.1 369.2 L1473.3 363.2 L1507.1 326.1 L1534.1 323.6 L1549.2 327.0 L1610.0 316.0" fill="none" stroke="#a2520c" stroke-width="4.2" stroke-linejoin="round"/>
<path d="M1340.0 327.8 L1350.1 325.3 L1387.2 316.0 L1427.7 317.7 L1442.9 322.7 L1454.7 327.0 L1464.9 326.1 L1483.4 319.4 L1534.1 311.8 L1576.2 304.2 L1610.0 299.1 M1340.0 133.7 L1350.1 125.3 L1368.7 110.1 L1371.2 108.4 M1340.0 777.7 L1350.1 778.6 L1373.7 781.1 L1397.4 787.0 L1441.2 808.1 L1478.4 828.4 L1491.9 838.5 L1508.7 855.4 L1525.6 867.2 L1542.5 884.1 L1557.7 899.2" fill="none" stroke="#8a8a8a" stroke-width="3.6" stroke-linejoin="round"/>
<path d="M1340.0 327.8 L1350.1 325.3 L1387.2 316.0 L1427.7 317.7 L1442.9 322.7 L1454.7 327.0 L1464.9 326.1 L1483.4 319.4 L1534.1 311.8 L1576.2 304.2 L1610.0 299.1 M1340.0 133.7 L1350.1 125.3 L1368.7 110.1 L1371.2 108.4 M1340.0 777.7 L1350.1 778.6 L1373.7 781.1 L1397.4 787.0 L1441.2 808.1 L1478.4 828.4 L1491.9 838.5 L1508.7 855.4 L1525.6 867.2 L1542.5 884.1 L1557.7 899.2" fill="none" stroke="#fff" stroke-width="2" stroke-dasharray="4.300 5.100" stroke-linecap="round" stroke-linejoin="round"/>
<path d="M1340.0 217.3 L1350.1 209.7 L1421.0 155.7 L1463.2 132.9 L1488.5 108.4 M1340.0 718.7 L1350.1 722.1 L1397.4 737.2 L1475.0 784.5 L1510.4 813.2 L1574.6 836.8 L1610.0 851.2" fill="none" stroke="#5aa800" stroke-width="7.4" stroke-linejoin="round"/>
<path d="M1340.0 217.3 L1350.1 209.7 L1421.0 155.7 L1463.2 132.9 L1488.5 108.4 M1340.0 718.7 L1350.1 722.1 L1397.4 737.2 L1475.0 784.5 L1510.4 813.2 L1574.6 836.8 L1610.0 851.2" fill="none" stroke="#ffff00" stroke-width="3.1" stroke-linejoin="round"/>
<rect x="690" y="113" width="660" height="774" fill="#0000ff"/><ellipse cx="986" cy="887" rx="8" ry="5" fill="#0000ff"/>
<g clip-path="none"><g filter="url(#bla)"><ellipse cx="1000" cy="480" rx="130" ry="120" fill="#2c00d4" opacity="0.6"/><ellipse cx="990" cy="470" rx="90" ry="85" fill="#4800b8" opacity="0.6"/><ellipse cx="1005" cy="468" rx="64" ry="58" fill="#7800a0" opacity="0.65"/><ellipse cx="1117" cy="727" rx="11" ry="11" fill="#4000c8" opacity="0.22"/><ellipse cx="1056" cy="796" rx="12" ry="11" fill="#4000c8" opacity="0.22"/><ellipse cx="890" cy="506" rx="8" ry="10" fill="#4000c8" opacity="0.36"/><ellipse cx="951" cy="478" rx="12" ry="9" fill="#4000c8" opacity="0.44"/><ellipse cx="1005" cy="558" rx="13" ry="12" fill="#4000c8" opacity="0.4"/><ellipse cx="1147" cy="349" rx="8" ry="10" fill="#4000c8" opacity="0.25"/><ellipse cx="926" cy="511" rx="13" ry="10" fill="#4000c8" opacity="0.4"/><ellipse cx="1156" cy="762" rx="9" ry="14" fill="#4000c8" opacity="0.22"/><ellipse cx="818" cy="571" rx="10" ry="11" fill="#4000c8" opacity="0.25"/><ellipse cx="1016" cy="552" rx="12" ry="9" fill="#4000c8" opacity="0.41"/><ellipse cx="1019" cy="399" rx="13" ry="13" fill="#4000c8" opacity="0.4"/><ellipse cx="1008" cy="230" rx="11" ry="12" fill="#4000c8" opacity="0.22"/><ellipse cx="1123" cy="641" rx="12" ry="9" fill="#4000c8" opacity="0.25"/><ellipse cx="1278" cy="350" rx="10" ry="10" fill="#4000c8" opacity="0.22"/><ellipse cx="859" cy="559" rx="13" ry="10" fill="#4000c8" opacity="0.3"/><ellipse cx="1065" cy="522" rx="12" ry="14" fill="#4000c8" opacity="0.4"/><ellipse cx="826" cy="515" rx="11" ry="12" fill="#4000c8" opacity="0.28"/><ellipse cx="1036" cy="733" rx="11" ry="12" fill="#4000c8" opacity="0.22"/><ellipse cx="1039" cy="601" rx="10" ry="14" fill="#4000c8" opacity="0.34"/><ellipse cx="885" cy="693" rx="10" ry="9" fill="#4000c8" opacity="0.22"/><ellipse cx="1252" cy="631" rx="12" ry="10" fill="#4000c8" opacity="0.22"/><ellipse cx="908" cy="284" rx="12" ry="14" fill="#4000c8" opacity="0.23"/><ellipse cx="1195" cy="457" rx="12" ry="11" fill="#4000c8" opacity="0.26"/><ellipse cx="920" cy="598" rx="12" ry="9" fill="#4000c8" opacity="0.32"/><ellipse cx="1246" cy="636" rx="12" ry="11" fill="#4000c8" opacity="0.22"/><ellipse cx="1026" cy="464" rx="9" ry="10" fill="#4000c8" opacity="0.46"/><ellipse cx="920" cy="559" rx="8" ry="10" fill="#4000c8" opacity="0.36"/><ellipse cx="996" cy="322" rx="9" ry="14" fill="#4000c8" opacity="0.3"/><ellipse cx="761" cy="467" rx="8" ry="9" fill="#4000c8" opacity="0.22"/><ellipse cx="1141" cy="260" rx="12" ry="12" fill="#4000c8" opacity="0.22"/><ellipse cx="823" cy="608" rx="12" ry="10" fill="#4000c8" opacity="0.23"/><ellipse cx="882" cy="482" rx="12" ry="8" fill="#4000c8" opacity="0.35"/><ellipse cx="853" cy="134" rx="8" ry="12" fill="#4000c8" opacity="0.22"/><ellipse cx="819" cy="257" rx="11" ry="10" fill="#4000c8" opacity="0.22"/><ellipse cx="1067" cy="461" rx="8" ry="9" fill="#4000c8" opacity="0.41"/><ellipse cx="1161" cy="538" rx="9" ry="13" fill="#4000c8" opacity="0.29"/><ellipse cx="956" cy="439" rx="11" ry="10" fill="#4000c8" opacity="0.43"/><ellipse cx="894" cy="514" rx="9" ry="9" fill="#4000c8" opacity="0.36"/><ellipse cx="830" cy="690" rx="11" ry="8" fill="#4000c8" opacity="0.22"/><ellipse cx="926" cy="184" rx="12" ry="13" fill="#4000c8" opacity="0.22"/><ellipse cx="1167" cy="519" rx="8" ry="13" fill="#4000c8" opacity="0.29"/><ellipse cx="1107" cy="742" rx="9" ry="12" fill="#4000c8" opacity="0.22"/><ellipse cx="983" cy="554" rx="10" ry="10" fill="#4000c8" opacity="0.4"/><ellipse cx="1102" cy="429" rx="11" ry="11" fill="#4000c8" opacity="0.36"/><ellipse cx="1065" cy="486" rx="11" ry="11" fill="#4000c8" opacity="0.42"/><ellipse cx="914" cy="748" rx="11" ry="11" fill="#4000c8" opacity="0.22"/><ellipse cx="1254" cy="628" rx="13" ry="10" fill="#4000c8" opacity="0.22"/><ellipse cx="1047" cy="551" rx="8" ry="13" fill="#4000c8" opacity="0.39"/><ellipse cx="1010" cy="330" rx="11" ry="8" fill="#4000c8" opacity="0.31"/><ellipse cx="900" cy="369" rx="11" ry="10" fill="#4000c8" opacity="0.31"/><ellipse cx="913" cy="578" rx="8" ry="11" fill="#4000c8" opacity="0.34"/><ellipse cx="1004" cy="767" rx="12" ry="12" fill="#4000c8" opacity="0.22"/><ellipse cx="894" cy="543" rx="10" ry="11" fill="#4000c8" opacity="0.35"/><ellipse cx="739" cy="198" rx="8" ry="11" fill="#4000c8" opacity="0.22"/><ellipse cx="762" cy="523" rx="12" ry="13" fill="#4000c8" opacity="0.22"/><ellipse cx="823" cy="311" rx="11" ry="13" fill="#4000c8" opacity="0.22"/><ellipse cx="928" cy="273" rx="9" ry="14" fill="#4000c8" opacity="0.23"/><ellipse cx="844" cy="660" rx="12" ry="14" fill="#4000c8" opacity="0.22"/><ellipse cx="1017" cy="509" rx="10" ry="10" fill="#4000c8" opacity="0.46"/><ellipse cx="935" cy="568" rx="11" ry="8" fill="#4000c8" opacity="0.36"/><ellipse cx="992" cy="326" rx="9" ry="14" fill="#4000c8" opacity="0.31"/><ellipse cx="971" cy="403" rx="10" ry="12" fill="#4000c8" opacity="0.4"/><ellipse cx="951" cy="393" rx="13" ry="10" fill="#4000c8" opacity="0.38"/><ellipse cx="992" cy="829" rx="9" ry="12" fill="#4000c8" opacity="0.22"/><ellipse cx="1063" cy="722" rx="9" ry="10" fill="#4000c8" opacity="0.22"/><ellipse cx="1157" cy="443" rx="10" ry="12" fill="#4000c8" opacity="0.3"/><ellipse cx="982" cy="610" rx="10" ry="10" fill="#4000c8" opacity="0.34"/><ellipse cx="1267" cy="574" rx="13" ry="12" fill="#4000c8" opacity="0.22"/><ellipse cx="1176" cy="533" rx="8" ry="12" fill="#4000c8" opacity="0.27"/><ellipse cx="966" cy="394" rx="8" ry="11" fill="#4000c8" opacity="0.38"/><ellipse cx="1107" cy="589" rx="10" ry="13" fill="#4000c8" opacity="0.31"/><ellipse cx="945" cy="575" rx="12" ry="13" fill="#4000c8" opacity="0.36"/><ellipse cx="953" cy="500" rx="9" ry="10" fill="#4000c8" opacity="0.44"/><ellipse cx="899" cy="472" rx="12" ry="13" fill="#4000c8" opacity="0.37"/><ellipse cx="1277" cy="355" rx="8" ry="11" fill="#4000c8" opacity="0.22"/><ellipse cx="1281" cy="681" rx="12" ry="13" fill="#4000c8" opacity="0.22"/><ellipse cx="1020" cy="564" rx="12" ry="12" fill="#4000c8" opacity="0.39"/><ellipse cx="877" cy="382" rx="12" ry="10" fill="#4000c8" opacity="0.3"/><ellipse cx="983" cy="663" rx="9" ry="12" fill="#4000c8" opacity="0.27"/><ellipse cx="1044" cy="470" rx="8" ry="11" fill="#4000c8" opacity="0.44"/><ellipse cx="957" cy="414" rx="9" ry="8" fill="#4000c8" opacity="0.4"/><ellipse cx="1171" cy="555" rx="11" ry="12" fill="#4000c8" opacity="0.27"/><ellipse cx="1038" cy="575" rx="13" ry="11" fill="#4000c8" opacity="0.37"/><ellipse cx="807" cy="648" rx="12" ry="11" fill="#4000c8" opacity="0.22"/><ellipse cx="1248" cy="656" rx="9" ry="8" fill="#4000c8" opacity="0.22"/><ellipse cx="889" cy="673" rx="11" ry="9" fill="#4000c8" opacity="0.22"/><ellipse cx="956" cy="324" rx="9" ry="13" fill="#4000c8" opacity="0.3"/><ellipse cx="1114" cy="173" rx="11" ry="9" fill="#4000c8" opacity="0.22"/><ellipse cx="1056" cy="159" rx="11" ry="13" fill="#4000c8" opacity="0.22"/><ellipse cx="1147" cy="479" rx="13" ry="14" fill="#4000c8" opacity="0.32"/><ellipse cx="1006" cy="486" rx="10" ry="12" fill="#4000c8" opacity="0.49"/><ellipse cx="803" cy="337" rx="11" ry="9" fill="#4000c8" opacity="0.22"/><ellipse cx="1169" cy="424" rx="12" ry="9" fill="#4000c8" opacity="0.28"/><ellipse cx="1191" cy="507" rx="12" ry="12" fill="#4000c8" opacity="0.26"/><ellipse cx="1105" cy="405" rx="8" ry="10" fill="#4000c8" opacity="0.34"/><ellipse cx="1081" cy="695" rx="12" ry="10" fill="#4000c8" opacity="0.22"/><ellipse cx="1024" cy="538" rx="10" ry="11" fill="#4000c8" opacity="0.42"/><ellipse cx="1219" cy="550" rx="9" ry="9" fill="#4000c8" opacity="0.22"/><ellipse cx="1164" cy="422" rx="12" ry="11" fill="#4000c8" opacity="0.28"/><ellipse cx="1080" cy="595" rx="10" ry="12" fill="#4000c8" opacity="0.32"/><ellipse cx="1033" cy="237" rx="11" ry="10" fill="#4000c8" opacity="0.22"/><ellipse cx="868" cy="578" rx="10" ry="10" fill="#4000c8" opacity="0.29"/><ellipse cx="838" cy="467" rx="8" ry="13" fill="#4000c8" opacity="0.3"/><ellipse cx="769" cy="356" rx="12" ry="12" fill="#4000c8" opacity="0.22"/><ellipse cx="1146" cy="503" rx="10" ry="8" fill="#4000c8" opacity="0.32"/><ellipse cx="899" cy="323" rx="11" ry="14" fill="#4000c8" opacity="0.27"/><ellipse cx="1035" cy="622" rx="12" ry="13" fill="#4000c8" opacity="0.32"/><ellipse cx="950" cy="516" rx="10" ry="13" fill="#4000c8" opacity="0.42"/><ellipse cx="833" cy="510" rx="10" ry="12" fill="#4000c8" opacity="0.29"/><ellipse cx="812" cy="363" rx="12" ry="13" fill="#4000c8" opacity="0.22"/><ellipse cx="920" cy="599" rx="12" ry="13" fill="#4000c8" opacity="0.32"/><ellipse cx="1090" cy="462" rx="12" ry="13" fill="#4000c8" opacity="0.39"/><ellipse cx="1114" cy="576" rx="11" ry="9" fill="#4000c8" opacity="0.31"/><ellipse cx="1057" cy="397" rx="11" ry="10" fill="#4000c8" opacity="0.37"/><ellipse cx="1020" cy="620" rx="10" ry="12" fill="#4000c8" opacity="0.32"/><ellipse cx="1046" cy="756" rx="10" ry="12" fill="#4000c8" opacity="0.22"/><ellipse cx="934" cy="590" rx="9" ry="8" fill="#4000c8" opacity="0.34"/><ellipse cx="949" cy="349" rx="9" ry="13" fill="#4000c8" opacity="0.32"/><ellipse cx="983" cy="482" rx="12" ry="12" fill="#4000c8" opacity="0.48"/><ellipse cx="834" cy="577" rx="13" ry="10" fill="#4000c8" opacity="0.26"/><ellipse cx="860" cy="333" rx="10" ry="10" fill="#4000c8" opacity="0.25"/><ellipse cx="1007" cy="276" rx="10" ry="11" fill="#4000c8" opacity="0.24"/><ellipse cx="1044" cy="797" rx="8" ry="12" fill="#4000c8" opacity="0.22"/><ellipse cx="898" cy="543" rx="11" ry="11" fill="#4000c8" opacity="0.35"/><ellipse cx="1149" cy="609" rx="9" ry="13" fill="#4000c8" opacity="0.25"/><ellipse cx="938" cy="640" rx="9" ry="8" fill="#4000c8" opacity="0.29"/><ellipse cx="1033" cy="597" rx="11" ry="13" fill="#4000c8" opacity="0.35"/><ellipse cx="1013" cy="589" rx="11" ry="9" fill="#4000c8" opacity="0.36"/><ellipse cx="790" cy="667" rx="9" ry="12" fill="#4000c8" opacity="0.22"/><ellipse cx="939" cy="493" rx="9" ry="12" fill="#4000c8" opacity="0.42"/><ellipse cx="1083" cy="573" rx="11" ry="13" fill="#4000c8" opacity="0.34"/><ellipse cx="780" cy="479" rx="8" ry="10" fill="#4000c8" opacity="0.23"/><ellipse cx="862" cy="842" rx="10" ry="13" fill="#4000c8" opacity="0.22"/><ellipse cx="1172" cy="551" rx="12" ry="13" fill="#4000c8" opacity="0.27"/><ellipse cx="917" cy="460" rx="13" ry="8" fill="#4000c8" opacity="0.39"/><ellipse cx="1253" cy="447" rx="12" ry="11" fill="#4000c8" opacity="0.22"/><ellipse cx="1070" cy="639" rx="11" ry="12" fill="#4000c8" opacity="0.28"/><ellipse cx="793" cy="700" rx="8" ry="10" fill="#4000c8" opacity="0.22"/><ellipse cx="1112" cy="589" rx="12" ry="13" fill="#4000c8" opacity="0.3"/><ellipse cx="1076" cy="624" rx="9" ry="12" fill="#4000c8" opacity="0.3"/><ellipse cx="898" cy="552" rx="10" ry="13" fill="#4000c8" opacity="0.34"/><ellipse cx="795" cy="625" rx="11" ry="11" fill="#4000c8" opacity="0.22"/><ellipse cx="866" cy="456" rx="9" ry="11" fill="#4000c8" opacity="0.33"/><ellipse cx="1250" cy="700" rx="12" ry="12" fill="#3800d0" opacity="0.35"/><ellipse cx="1275" cy="760" rx="12" ry="12" fill="#3800d0" opacity="0.35"/><ellipse cx="1300" cy="735" rx="12" ry="12" fill="#3800d0" opacity="0.35"/><ellipse cx="1195" cy="770" rx="12" ry="12" fill="#3800d0" opacity="0.35"/><ellipse cx="1165" cy="740" rx="12" ry="12" fill="#3800d0" opacity="0.35"/><ellipse cx="1270" cy="715" rx="12" ry="12" fill="#3800d0" opacity="0.35"/><ellipse cx="1305" cy="705" rx="12" ry="12" fill="#3800d0" opacity="0.35"/><ellipse cx="1225" cy="725" rx="12" ry="12" fill="#3800d0" opacity="0.35"/><ellipse cx="795" cy="790" rx="12" ry="12" fill="#3800d0" opacity="0.35"/><ellipse cx="775" cy="560" rx="12" ry="12" fill="#3800d0" opacity="0.35"/><ellipse cx="985" cy="840" rx="12" ry="12" fill="#3800d0" opacity="0.35"/><ellipse cx="945" cy="855" rx="12" ry="12" fill="#3800d0" opacity="0.35"/><ellipse cx="1150" cy="555" rx="12" ry="12" fill="#3800d0" opacity="0.35"/><ellipse cx="1215" cy="560" rx="12" ry="12" fill="#3800d0" opacity="0.35"/><ellipse cx="1260" cy="185" rx="12" ry="12" fill="#3800d0" opacity="0.35"/><ellipse cx="1330" cy="200" rx="12" ry="12" fill="#3800d0" opacity="0.35"/><ellipse cx="1170" cy="300" rx="12" ry="12" fill="#3800d0" opacity="0.35"/><ellipse cx="1240" cy="300" rx="12" ry="12" fill="#3800d0" opacity="0.35"/><ellipse cx="1290" cy="130" rx="12" ry="12" fill="#3800d0" opacity="0.35"/><ellipse cx="900" cy="580" rx="30" ry="30" fill="#2800e8" opacity="0.4"/><ellipse cx="1100" cy="560" rx="40" ry="30" fill="#2400ea" opacity="0.35"/><ellipse cx="850" cy="600" rx="30" ry="40" fill="#2400ea" opacity="0.35"/><ellipse cx="790" cy="520" rx="14" ry="18" fill="#3800d8" opacity="0.6"/><ellipse cx="815" cy="500" rx="10" ry="10" fill="#3800d8" opacity="0.6"/><ellipse cx="955" cy="640" rx="14" ry="18" fill="#3c00d4" opacity="0.6"/><ellipse cx="1000" cy="610" rx="12" ry="14" fill="#3400da" opacity="0.6"/><ellipse cx="1130" cy="355" rx="12" ry="10" fill="#4000d0" opacity="0.6"/><ellipse cx="1228" cy="245" rx="14" ry="12" fill="#4400cc" opacity="0.7"/><ellipse cx="1215" cy="275" rx="20" ry="16" fill="#3400dc" opacity="0.6"/><ellipse cx="1310" cy="165" rx="10" ry="12" fill="#3c00d4" opacity="0.6"/><ellipse cx="1275" cy="640" rx="16" ry="14" fill="#3000e0" opacity="0.5"/><ellipse cx="1160" cy="740" rx="10" ry="8" fill="#3000e0" opacity="0.5"/><ellipse cx="905" cy="330" rx="9" ry="9" fill="#4800c8" opacity="0.6"/><ellipse cx="958" cy="359" rx="10" ry="10" fill="#5000c8" opacity="0.6"/><ellipse cx="1010" cy="585" rx="10" ry="10" fill="#4000d0" opacity="0.5"/><ellipse cx="940" cy="600" rx="10" ry="12" fill="#3800d8" opacity="0.5"/><ellipse cx="1080" cy="470" rx="12" ry="12" fill="#4400cc" opacity="0.5"/><ellipse cx="1110" cy="500" rx="12" ry="10" fill="#3800d8" opacity="0.5"/><ellipse cx="880" cy="400" rx="10" ry="10" fill="#3c00d4" opacity="0.5"/><ellipse cx="840" cy="560" rx="12" ry="12" fill="#3400dc" opacity="0.5"/><ellipse cx="918" cy="371" rx="10" ry="14" fill="#8000a8" opacity="0.8"/><ellipse cx="869" cy="453" rx="11" ry="11" fill="#7000b0" opacity="0.8"/><ellipse cx="951" cy="524" rx="13" ry="13" fill="#7800a8" opacity="0.7"/><ellipse cx="967" cy="447" rx="14" ry="12" fill="#a00080" opacity="0.8"/><ellipse cx="1000" cy="432" rx="28" ry="22" fill="#a80078" opacity="0.75"/><ellipse cx="975" cy="505" rx="16" ry="22" fill="#8000a0" opacity="0.6"/><ellipse cx="1093" cy="405" rx="9" ry="9" fill="#a00090" opacity="0.8"/><ellipse cx="1011" cy="409" rx="11" ry="10" fill="#c80058" opacity="0.85"/><ellipse cx="935" cy="420" rx="12" ry="10" fill="#9000a0" opacity="0.6"/><ellipse cx="1060" cy="520" rx="12" ry="10" fill="#8000a0" opacity="0.6"/><ellipse cx="1030" cy="570" rx="10" ry="9" fill="#7000b0" opacity="0.6"/><ellipse cx="970" cy="560" rx="9" ry="9" fill="#7800a8" opacity="0.6"/><ellipse cx="1034" cy="482" rx="31" ry="25" fill="#d80032" opacity="0.9"/><ellipse cx="1014" cy="468" rx="22" ry="20" fill="#e00028" opacity="0.8"/><ellipse cx="1048" cy="494" rx="18" ry="13" fill="#d00038" opacity="0.85"/><ellipse cx="1055" cy="417" rx="15" ry="10" fill="#c40050" opacity="0.95"/><ellipse cx="1074" cy="427" rx="13" ry="9" fill="#b80058" opacity="0.9"/><ellipse cx="991" cy="398" rx="11" ry="11" fill="#d8003c" opacity="1"/><ellipse cx="950" cy="467" rx="15" ry="10" fill="#f40020" opacity="1"/><ellipse cx="925" cy="448" rx="18" ry="20" fill="#ff0010" opacity="1"/><ellipse cx="928" cy="440" rx="12" ry="12" fill="#ff0010" opacity="1"/><ellipse cx="1008" cy="515" rx="12" ry="12" fill="#ec0024" opacity="1"/><ellipse cx="1002" cy="500" rx="11" ry="13" fill="#f00020" opacity="0.9"/><ellipse cx="992" cy="545" rx="9" ry="9" fill="#cc0048" opacity="1"/><ellipse cx="1017" cy="535" rx="8" ry="8" fill="#c40050" opacity="0.95"/><ellipse cx="1038" cy="551" rx="9" ry="9" fill="#b40060" opacity="0.95"/></g><g fill="#0c0e12"><ellipse cx="993" cy="462" rx="11.5" ry="12"/><circle cx="987.9" cy="472.7" r="1.4"/><circle cx="986.3" cy="452.3" r="1.3"/><circle cx="981.8" cy="459.3" r="1.6"/><circle cx="1003.7" cy="466.3" r="1.8"/><circle cx="1004.2" cy="464.8" r="1.7"/><circle cx="1003.4" cy="467.1" r="1.3"/><circle cx="982.8" cy="467.5" r="2.2"/><circle cx="1001.2" cy="470.4" r="1.5"/><circle cx="985.0" cy="453.4" r="2.3"/><circle cx="982.8" cy="456.4" r="1.7"/><circle cx="1004.4" cy="460.2" r="1.3"/><circle cx="1000.2" cy="452.7" r="1.5"/><circle cx="1000.1" cy="471.4" r="1.3"/><circle cx="988.9" cy="473.2" r="2.2"/><circle cx="997.8" cy="472.9" r="1.9"/><circle cx="985.6" cy="452.8" r="1.6"/><circle cx="982.0" cy="458.5" r="1.3"/><circle cx="1003.7" cy="466.4" r="1.4"/><circle cx="988.1" cy="451.1" r="1.7"/><circle cx="988.5" cy="473.0" r="1.9"/><circle cx="982.0" cy="465.5" r="1.6"/><circle cx="996.2" cy="450.5" r="2.0"/><ellipse cx="1014" cy="476" rx="9.5" ry="10.5"/><circle cx="1014.4" cy="486.5" r="1.9"/><circle cx="1004.6" cy="474.3" r="2.3"/><circle cx="1012.8" cy="465.6" r="1.5"/><circle cx="1023.4" cy="474.7" r="1.3"/><circle cx="1005.7" cy="481.2" r="2.1"/><circle cx="1019.5" cy="484.6" r="1.8"/><circle cx="1023.2" cy="478.6" r="2.0"/><circle cx="1014.9" cy="465.5" r="1.9"/><circle cx="1020.7" cy="468.6" r="1.6"/><circle cx="1010.8" cy="466.1" r="1.9"/><circle cx="1005.7" cy="470.9" r="1.7"/><circle cx="1019.1" cy="467.1" r="2.3"/><circle cx="1004.6" cy="477.7" r="2.0"/><circle cx="1022.8" cy="479.9" r="2.0"/><circle cx="1008.3" cy="467.6" r="2.4"/><circle cx="1018.1" cy="466.6" r="1.5"/><circle cx="1006.8" cy="482.9" r="2.0"/><circle cx="1023.4" cy="477.5" r="1.8"/><circle cx="1018.7" cy="485.1" r="1.3"/><circle cx="1022.9" cy="479.8" r="2.1"/><circle cx="1020.5" cy="483.6" r="1.5"/><circle cx="1006.6" cy="482.6" r="2.2"/><ellipse cx="995" cy="484" rx="9.5" ry="13"/><circle cx="1003.3" cy="490.3" r="1.7"/><circle cx="986.0" cy="480.0" r="2.3"/><circle cx="999.0" cy="472.2" r="2.2"/><circle cx="993.3" cy="496.8" r="1.7"/><circle cx="989.0" cy="494.1" r="2.3"/><circle cx="1004.2" cy="480.6" r="1.4"/><circle cx="999.2" cy="495.6" r="1.5"/><circle cx="996.0" cy="496.9" r="1.8"/><circle cx="987.0" cy="477.1" r="1.5"/><circle cx="1004.5" cy="484.3" r="1.7"/><circle cx="988.5" cy="493.5" r="1.9"/><circle cx="1004.1" cy="480.2" r="2.0"/><circle cx="985.5" cy="482.7" r="1.9"/><circle cx="990.8" cy="472.4" r="1.3"/><circle cx="1002.7" cy="476.3" r="2.1"/><circle cx="1001.7" cy="474.8" r="2.2"/><circle cx="987.6" cy="492.1" r="1.7"/><circle cx="1002.6" cy="491.9" r="2.0"/><circle cx="1003.8" cy="489.0" r="1.3"/><circle cx="997.4" cy="496.6" r="1.4"/><circle cx="989.9" cy="495.0" r="1.3"/><circle cx="1004.5" cy="484.0" r="1.4"/><ellipse cx="1001" cy="474" rx="9" ry="10"/><circle cx="1008.2" cy="480.0" r="1.6"/><circle cx="1009.9" cy="475.6" r="2.2"/><circle cx="994.2" cy="467.4" r="1.4"/><circle cx="1000.9" cy="484.0" r="1.6"/><circle cx="995.1" cy="481.5" r="1.3"/><circle cx="1006.2" cy="465.9" r="2.4"/><circle cx="992.2" cy="476.1" r="1.8"/><circle cx="1008.7" cy="479.1" r="1.3"/><circle cx="996.1" cy="482.4" r="1.5"/><circle cx="1005.3" cy="465.2" r="1.4"/><circle cx="1009.9" cy="475.4" r="2.3"/><circle cx="992.1" cy="472.2" r="1.4"/><circle cx="992.3" cy="471.3" r="1.2"/><circle cx="992.1" cy="472.2" r="2.4"/><circle cx="1006.9" cy="466.4" r="2.0"/><circle cx="1000.4" cy="484.0" r="1.6"/><circle cx="1005.5" cy="482.7" r="2.1"/><circle cx="992.2" cy="472.0" r="2.1"/><circle cx="996.7" cy="482.8" r="1.5"/><circle cx="1004.4" cy="464.7" r="2.4"/><circle cx="1006.4" cy="466.0" r="2.2"/><circle cx="1004.7" cy="464.9" r="2.1"/></g><g fill="#5f7a98" stroke="#080a0d" stroke-width=".7"><ellipse cx="993.7" cy="467.2" rx="2.1" ry="1.2" transform="rotate(7 993.7 467.2)"/><ellipse cx="994.2" cy="457.3" rx="1.9" ry="1.7" transform="rotate(88 994.2 457.3)"/><ellipse cx="984.3" cy="465.1" rx="2.9" ry="2.1" transform="rotate(93 984.3 465.1)"/><ellipse cx="993.9" cy="462.5" rx="2.3" ry="1.5" transform="rotate(123 993.9 462.5)"/><ellipse cx="986.7" cy="455.5" rx="2.7" ry="1.6" transform="rotate(167 986.7 455.5)"/><ellipse cx="989.5" cy="467.4" rx="2.7" ry="1.3" transform="rotate(99 989.5 467.4)"/><ellipse cx="994.5" cy="454.5" rx="2.3" ry="1.4" transform="rotate(162 994.5 454.5)"/><ellipse cx="989.1" cy="469.1" rx="2.9" ry="1.6" transform="rotate(102 989.1 469.1)"/><ellipse cx="993.0" cy="461.1" rx="1.9" ry="2.1" transform="rotate(7 993.0 461.1)"/><ellipse cx="998.1" cy="469.5" rx="2.7" ry="1.3" transform="rotate(152 998.1 469.5)"/><ellipse cx="999.4" cy="461.2" rx="2.1" ry="1.7" transform="rotate(33 999.4 461.2)"/><ellipse cx="1000.7" cy="463.1" rx="2.6" ry="1.3" transform="rotate(35 1000.7 463.1)"/><ellipse cx="985.2" cy="465.6" rx="2.7" ry="1.4" transform="rotate(64 985.2 465.6)"/><ellipse cx="994.1" cy="467.0" rx="2.6" ry="1.5" transform="rotate(139 994.1 467.0)"/><ellipse cx="991.9" cy="462.7" rx="2.8" ry="1.5" transform="rotate(117 991.9 462.7)"/><ellipse cx="988.8" cy="454.9" rx="2.3" ry="1.9" transform="rotate(128 988.8 454.9)"/><ellipse cx="994.0" cy="463.1" rx="2.3" ry="2.0" transform="rotate(46 994.0 463.1)"/><ellipse cx="987.1" cy="457.0" rx="1.9" ry="1.3" transform="rotate(158 987.1 457.0)"/><ellipse cx="992.2" cy="456.4" rx="2.1" ry="1.7" transform="rotate(142 992.2 456.4)"/><ellipse cx="985.5" cy="462.9" rx="2.8" ry="1.3" transform="rotate(48 985.5 462.9)"/><ellipse cx="991.7" cy="469.8" rx="2.3" ry="1.7" transform="rotate(16 991.7 469.8)"/><ellipse cx="987.4" cy="464.2" rx="2.3" ry="1.7" transform="rotate(177 987.4 464.2)"/><ellipse cx="992.2" cy="467.1" rx="2.7" ry="1.7" transform="rotate(63 992.2 467.1)"/><ellipse cx="990.3" cy="453.5" rx="2.8" ry="1.4" transform="rotate(143 990.3 453.5)"/><ellipse cx="994.5" cy="460.7" rx="2.2" ry="1.6" transform="rotate(100 994.5 460.7)"/><ellipse cx="992.3" cy="462.3" rx="2.0" ry="1.3" transform="rotate(171 992.3 462.3)"/><ellipse cx="992.6" cy="463.2" rx="2.6" ry="2.0" transform="rotate(164 992.6 463.2)"/><ellipse cx="992.3" cy="460.8" rx="2.8" ry="2.1" transform="rotate(56 992.3 460.8)"/><ellipse cx="993.0" cy="461.0" rx="2.8" ry="1.3" transform="rotate(170 993.0 461.0)"/><ellipse cx="993.8" cy="460.6" rx="2.2" ry="1.7" transform="rotate(86 993.8 460.6)"/><ellipse cx="989.9" cy="463.7" rx="1.8" ry="1.5" transform="rotate(86 989.9 463.7)"/><ellipse cx="988.9" cy="460.5" rx="1.7" ry="1.5" transform="rotate(159 988.9 460.5)"/><ellipse cx="990.4" cy="471.4" rx="1.8" ry="2.0" transform="rotate(58 990.4 471.4)"/><ellipse cx="994.0" cy="461.8" rx="2.0" ry="1.2" transform="rotate(46 994.0 461.8)"/><ellipse cx="992.8" cy="463.3" rx="2.2" ry="2.0" transform="rotate(66 992.8 463.3)"/><ellipse cx="988.6" cy="465.0" rx="2.3" ry="1.6" transform="rotate(83 988.6 465.0)"/><ellipse cx="993.5" cy="462.3" rx="2.5" ry="1.6" transform="rotate(18 993.5 462.3)"/><ellipse cx="993.0" cy="462.2" rx="1.8" ry="1.4" transform="rotate(155 993.0 462.2)"/><ellipse cx="993.4" cy="461.5" rx="2.7" ry="1.6" transform="rotate(86 993.4 461.5)"/><ellipse cx="997.1" cy="461.8" rx="2.8" ry="1.8" transform="rotate(11 997.1 461.8)"/><ellipse cx="990.7" cy="461.6" rx="1.8" ry="1.3" transform="rotate(12 990.7 461.6)"/><ellipse cx="996.8" cy="470.6" rx="2.5" ry="1.7" transform="rotate(52 996.8 470.6)"/><ellipse cx="991.8" cy="466.9" rx="1.9" ry="1.5" transform="rotate(4 991.8 466.9)"/><ellipse cx="993.4" cy="462.0" rx="1.7" ry="1.7" transform="rotate(48 993.4 462.0)"/><ellipse cx="990.6" cy="461.8" rx="2.2" ry="1.8" transform="rotate(166 990.6 461.8)"/><ellipse cx="988.6" cy="464.1" rx="2.7" ry="1.6" transform="rotate(129 988.6 464.1)"/><ellipse cx="992.3" cy="464.1" rx="2.0" ry="1.4" transform="rotate(180 992.3 464.1)"/><ellipse cx="992.8" cy="460.6" rx="2.9" ry="2.1" transform="rotate(33 992.8 460.6)"/><ellipse cx="1019.0" cy="476.5" rx="2.8" ry="1.6" transform="rotate(14 1019.0 476.5)"/><ellipse cx="1019.9" cy="479.8" rx="2.7" ry="1.8" transform="rotate(72 1019.9 479.8)"/><ellipse cx="1009.4" cy="472.4" rx="1.8" ry="1.4" transform="rotate(68 1009.4 472.4)"/><ellipse cx="1012.0" cy="476.8" rx="2.9" ry="2.1" transform="rotate(140 1012.0 476.8)"/><ellipse cx="1013.9" cy="476.3" rx="2.8" ry="1.4" transform="rotate(46 1013.9 476.3)"/><ellipse cx="1017.1" cy="476.0" rx="2.3" ry="1.7" transform="rotate(51 1017.1 476.0)"/><ellipse cx="1014.1" cy="482.9" rx="1.8" ry="1.9" transform="rotate(36 1014.1 482.9)"/><ellipse cx="1013.7" cy="476.2" rx="1.7" ry="1.5" transform="rotate(59 1013.7 476.2)"/><ellipse cx="1020.7" cy="480.3" rx="2.7" ry="1.3" transform="rotate(152 1020.7 480.3)"/><ellipse cx="1012.0" cy="477.9" rx="2.9" ry="1.3" transform="rotate(158 1012.0 477.9)"/><ellipse cx="1013.8" cy="475.7" rx="2.7" ry="2.0" transform="rotate(160 1013.8 475.7)"/><ellipse cx="1008.9" cy="478.7" rx="2.3" ry="2.0" transform="rotate(129 1008.9 478.7)"/><ellipse cx="1008.0" cy="473.0" rx="1.7" ry="1.8" transform="rotate(174 1008.0 473.0)"/><ellipse cx="1019.0" cy="474.4" rx="1.8" ry="1.2" transform="rotate(163 1019.0 474.4)"/><ellipse cx="1013.5" cy="476.7" rx="2.7" ry="1.7" transform="rotate(160 1013.5 476.7)"/><ellipse cx="1018.3" cy="476.6" rx="2.0" ry="1.4" transform="rotate(116 1018.3 476.6)"/><ellipse cx="1015.8" cy="469.6" rx="2.3" ry="1.7" transform="rotate(168 1015.8 469.6)"/><ellipse cx="1008.1" cy="474.9" rx="2.3" ry="1.9" transform="rotate(67 1008.1 474.9)"/><ellipse cx="1014.6" cy="482.7" rx="2.0" ry="1.8" transform="rotate(117 1014.6 482.7)"/><ellipse cx="1010.9" cy="476.1" rx="2.3" ry="1.8" transform="rotate(11 1010.9 476.1)"/><ellipse cx="1010.1" cy="472.2" rx="1.8" ry="1.3" transform="rotate(65 1010.1 472.2)"/><ellipse cx="1010.8" cy="471.0" rx="2.4" ry="1.3" transform="rotate(123 1010.8 471.0)"/><ellipse cx="1016.0" cy="476.9" rx="2.5" ry="1.8" transform="rotate(172 1016.0 476.9)"/><ellipse cx="1008.3" cy="476.4" rx="2.0" ry="1.6" transform="rotate(30 1008.3 476.4)"/><ellipse cx="1018.4" cy="475.8" rx="2.1" ry="1.3" transform="rotate(121 1018.4 475.8)"/><ellipse cx="1017.7" cy="476.4" rx="2.7" ry="2.1" transform="rotate(115 1017.7 476.4)"/><ellipse cx="1017.1" cy="475.9" rx="2.8" ry="2.0" transform="rotate(19 1017.1 475.9)"/><ellipse cx="1013.0" cy="475.4" rx="2.3" ry="2.1" transform="rotate(33 1013.0 475.4)"/><ellipse cx="1009.9" cy="472.6" rx="2.0" ry="1.3" transform="rotate(93 1009.9 472.6)"/><ellipse cx="1014.8" cy="484.0" rx="2.3" ry="1.2" transform="rotate(0 1014.8 484.0)"/><ellipse cx="1019.2" cy="474.1" rx="2.2" ry="1.9" transform="rotate(106 1019.2 474.1)"/><ellipse cx="1012.6" cy="478.3" rx="2.7" ry="1.2" transform="rotate(86 1012.6 478.3)"/><ellipse cx="1014.5" cy="475.1" rx="2.8" ry="1.8" transform="rotate(74 1014.5 475.1)"/><ellipse cx="1014.0" cy="476.6" rx="2.2" ry="2.0" transform="rotate(19 1014.0 476.6)"/><ellipse cx="1011.8" cy="478.9" rx="2.0" ry="1.2" transform="rotate(26 1011.8 478.9)"/><ellipse cx="1019.1" cy="477.9" rx="2.5" ry="1.3" transform="rotate(68 1019.1 477.9)"/><ellipse cx="1011.7" cy="477.1" rx="2.6" ry="1.9" transform="rotate(109 1011.7 477.1)"/><ellipse cx="1018.9" cy="471.2" rx="2.5" ry="2.0" transform="rotate(141 1018.9 471.2)"/><ellipse cx="1008.5" cy="474.0" rx="1.8" ry="1.9" transform="rotate(115 1008.5 474.0)"/><ellipse cx="1013.2" cy="475.2" rx="2.7" ry="1.6" transform="rotate(140 1013.2 475.2)"/><ellipse cx="1016.7" cy="479.0" rx="2.1" ry="1.5" transform="rotate(167 1016.7 479.0)"/><ellipse cx="1013.7" cy="481.8" rx="2.1" ry="1.7" transform="rotate(100 1013.7 481.8)"/><ellipse cx="1017.8" cy="479.9" rx="1.8" ry="1.7" transform="rotate(127 1017.8 479.9)"/><ellipse cx="1010.5" cy="474.7" rx="2.1" ry="1.9" transform="rotate(109 1010.5 474.7)"/><ellipse cx="1015.0" cy="477.3" rx="1.8" ry="1.5" transform="rotate(23 1015.0 477.3)"/><ellipse cx="1012.7" cy="479.0" rx="2.7" ry="1.4" transform="rotate(5 1012.7 479.0)"/><ellipse cx="1014.0" cy="472.3" rx="2.2" ry="1.7" transform="rotate(96 1014.0 472.3)"/><ellipse cx="1013.2" cy="482.7" rx="2.3" ry="1.7" transform="rotate(92 1013.2 482.7)"/><ellipse cx="997.9" cy="488.0" rx="2.5" ry="2.0" transform="rotate(55 997.9 488.0)"/><ellipse cx="1001.1" cy="489.4" rx="2.2" ry="1.8" transform="rotate(110 1001.1 489.4)"/><ellipse cx="1001.6" cy="481.3" rx="2.7" ry="1.2" transform="rotate(8 1001.6 481.3)"/><ellipse cx="989.5" cy="487.8" rx="2.7" ry="2.1" transform="rotate(125 989.5 487.8)"/><ellipse cx="998.2" cy="484.0" rx="2.8" ry="1.9" transform="rotate(119 998.2 484.0)"/><ellipse cx="997.0" cy="483.5" rx="1.8" ry="1.3" transform="rotate(133 997.0 483.5)"/><ellipse cx="995.9" cy="483.8" rx="2.7" ry="1.8" transform="rotate(117 995.9 483.8)"/><ellipse cx="1000.4" cy="488.4" rx="1.7" ry="1.3" transform="rotate(145 1000.4 488.4)"/><ellipse cx="999.6" cy="480.6" rx="2.1" ry="1.3" transform="rotate(64 999.6 480.6)"/><ellipse cx="991.5" cy="483.1" rx="2.6" ry="1.3" transform="rotate(76 991.5 483.1)"/><ellipse cx="990.3" cy="483.0" rx="2.2" ry="1.4" transform="rotate(153 990.3 483.0)"/><ellipse cx="999.3" cy="484.0" rx="2.9" ry="1.5" transform="rotate(80 999.3 484.0)"/><ellipse cx="990.6" cy="476.3" rx="2.3" ry="1.4" transform="rotate(63 990.6 476.3)"/><ellipse cx="998.3" cy="484.8" rx="2.5" ry="1.2" transform="rotate(49 998.3 484.8)"/><ellipse cx="989.6" cy="484.1" rx="2.2" ry="1.4" transform="rotate(170 989.6 484.1)"/><ellipse cx="992.3" cy="485.9" rx="2.3" ry="1.8" transform="rotate(107 992.3 485.9)"/><ellipse cx="992.9" cy="487.3" rx="1.7" ry="1.5" transform="rotate(129 992.9 487.3)"/><ellipse cx="998.6" cy="486.3" rx="1.9" ry="1.9" transform="rotate(49 998.6 486.3)"/><ellipse cx="995.2" cy="486.4" rx="2.6" ry="1.5" transform="rotate(159 995.2 486.4)"/><ellipse cx="993.5" cy="484.1" rx="2.0" ry="1.6" transform="rotate(170 993.5 484.1)"/><ellipse cx="999.5" cy="486.3" rx="2.8" ry="1.2" transform="rotate(6 999.5 486.3)"/><ellipse cx="996.1" cy="483.7" rx="1.8" ry="1.3" transform="rotate(100 996.1 483.7)"/><ellipse cx="989.5" cy="486.4" rx="2.1" ry="1.3" transform="rotate(20 989.5 486.4)"/><ellipse cx="997.4" cy="482.5" rx="1.9" ry="2.0" transform="rotate(119 997.4 482.5)"/><ellipse cx="1000.3" cy="485.5" rx="2.2" ry="1.5" transform="rotate(84 1000.3 485.5)"/><ellipse cx="994.2" cy="484.4" rx="1.8" ry="1.3" transform="rotate(107 994.2 484.4)"/><ellipse cx="996.0" cy="483.6" rx="2.9" ry="1.4" transform="rotate(91 996.0 483.6)"/><ellipse cx="995.3" cy="480.6" rx="2.7" ry="1.3" transform="rotate(180 995.3 480.6)"/><ellipse cx="992.0" cy="484.7" rx="2.8" ry="1.4" transform="rotate(93 992.0 484.7)"/><ellipse cx="994.7" cy="478.8" rx="2.5" ry="1.4" transform="rotate(160 994.7 478.8)"/><ellipse cx="995.0" cy="483.6" rx="1.7" ry="1.3" transform="rotate(15 995.0 483.6)"/><ellipse cx="994.7" cy="492.2" rx="2.8" ry="1.5" transform="rotate(69 994.7 492.2)"/><ellipse cx="991.1" cy="493.1" rx="1.8" ry="1.9" transform="rotate(176 991.1 493.1)"/><ellipse cx="994.1" cy="486.8" rx="1.7" ry="1.9" transform="rotate(162 994.1 486.8)"/><ellipse cx="995.5" cy="483.8" rx="2.7" ry="1.3" transform="rotate(119 995.5 483.8)"/><ellipse cx="998.0" cy="482.8" rx="2.0" ry="1.6" transform="rotate(126 998.0 482.8)"/><ellipse cx="997.7" cy="488.1" rx="1.7" ry="2.0" transform="rotate(77 997.7 488.1)"/><ellipse cx="997.8" cy="476.3" rx="2.4" ry="1.5" transform="rotate(81 997.8 476.3)"/><ellipse cx="988.9" cy="486.1" rx="2.4" ry="1.7" transform="rotate(100 988.9 486.1)"/><ellipse cx="995.0" cy="481.3" rx="1.8" ry="1.2" transform="rotate(141 995.0 481.3)"/><ellipse cx="993.8" cy="483.5" rx="2.2" ry="1.3" transform="rotate(18 993.8 483.5)"/><ellipse cx="994.9" cy="484.9" rx="1.8" ry="1.6" transform="rotate(114 994.9 484.9)"/><ellipse cx="995.5" cy="485.3" rx="2.3" ry="2.0" transform="rotate(60 995.5 485.3)"/><ellipse cx="994.9" cy="474.6" rx="2.5" ry="1.3" transform="rotate(75 994.9 474.6)"/><ellipse cx="993.8" cy="490.0" rx="2.1" ry="1.9" transform="rotate(50 993.8 490.0)"/><ellipse cx="993.6" cy="484.8" rx="2.0" ry="1.5" transform="rotate(148 993.6 484.8)"/><ellipse cx="995.2" cy="484.7" rx="2.0" ry="1.4" transform="rotate(134 995.2 484.7)"/><ellipse cx="995.8" cy="492.9" rx="2.5" ry="2.1" transform="rotate(26 995.8 492.9)"/></g></g>
</svg>
<div class="a" style="left:382px;top:108px;width:1px;height:792px;background:#b4b4b4"></div><div class="a" style="left:375px;top:108px;width:7px;height:800px;background:#f0f0f0"></div>
<div class="a" style="left:380px;top:899px;width:1340px;height:1px;background:#a0a0a0"></div><div class="a" style="left:380px;top:900px;width:1340px;height:1px;background:#f0f0f0"></div>

<!-- glass title bar of second dialog seen below the first one -->
<div class="a" style="left:0;top:838px;width:690px;height:35px;background:linear-gradient(#f4f4f4 0,#f1f1f1 55%,#e2ebf6 64%,#b2cfee 72%,#c4daf2 97%,#5a6a80 98%)"></div>
<div class="a" style="left:34px;top:850px;font-size:12.500px;line-height:15px;color:#a3b4cb;white-space:nowrap;filter:blur(.8px)">Layer Properties - hej</div>
<div class="a" style="left:0px;top:838px;width:25px;height:92px;background:#fff"></div>
<div class="a" style="left:0px;top:876px;width:26px;height:1px;background:#c8c8c8"></div>
<div class="frame" style="left:-60px;top:-60px;width:819px;height:905px;border-radius:7px;background:#dfe6f6;box-shadow:3px 5px 12px 2px rgba(0,0,0,.95);"></div>
<div class="frame" style="left:-60px;top:-60px;width:818px;height:904px;border-radius:6px;background:linear-gradient(90deg,#b9d1ea,#c4dcf6 60%,#bcd6f2);"></div>
<div class="frame" style="left:753px;top:108px;width:5px;height:98px;background:linear-gradient(#a8c0e0 0,#4444b4 6%,#5c5cbc 35%,#a4a4dc 75%,#c4c4ec 100%)"></div>
<div class="frame" style="left:753px;top:205px;width:5px;height:639px;background:linear-gradient(90deg,#2a2aa8,#0e0e9a 40%,#1414a0);border-radius:0 0 5px 0"></div>
<div class="frame" style="left:690px;top:839px;width:68px;height:5px;background:#1212a0;border-radius:0 0 5px 0"></div>
<div class="frame" style="left:640px;top:839px;width:50px;height:5px;background:linear-gradient(90deg,rgba(160,170,185,0),#a8b0c0 60%,#5a5ab0)"></div>
<div class="dlg" style="left:-60px;top:-5px;width:813px;height:844px;border-right:1px solid #59608e;border-bottom:1px solid #59608e;"></div>
<div class="pane" style="left:7px;top:35px;width:734px;height:735px;"></div>
<div class="tab" style="left:8px;top:10px;width:64px;height:25px"><svg class="a" style="left:11px;top:5px" width="21" height="16" viewBox="0 0 21 16">
<path d="M1.500 4 L8 1.500 L11 6 L4 9 Z" fill="#f4e040"/><path d="M2.500 7 L9 4.500 L11 8 L4 11 Z" fill="#4a78d0"/>
<path d="M1 10 L8 7 L11 13 L7 15 L1 12.500 Z" fill="#e83030"/>
<path d="M11.500 8.500 L18.500 0.800 L20.300 2.500 L13.500 10.500 Z" fill="#c98a3a"/>
<path d="M7.500 7 L13.500 12 L10 15.300 L5 10 Z" fill="#dba95c" stroke="#b98238" stroke-width=".6"/></svg><span style="left:36px;line-height:24px"><span style="letter-spacing:-0.445px">Stil</span></span></div>
<div class="tab" style="left:71px;top:10px;width:98px;height:25px"><svg class="a" style="left:12px;top:2px" width="22" height="16" viewBox="0 0 22 16">
<rect x="0.500" y="1.500" width="20" height="13" fill="#fdfdfd" stroke="#8a8a8a"/><rect x="0" y="1" width="2" height="14" fill="#9a9a9a"/>
<rect x="3" y="3" width="4" height="3" fill="#2a4f9a"/><rect x="11" y="3" width="4" height="3" fill="#2a4f9a"/>
<rect x="7" y="6" width="4" height="3" fill="#3a6fc0"/><rect x="15" y="6" width="4" height="3" fill="#f4e040"/>
<rect x="3" y="9" width="4" height="3" fill="#f4e040"/><rect x="15" y="10" width="4" height="3" fill="#2a4f9a"/>
<path d="M12.500 7.500 L19 0.500 L20.800 2.200 L14.500 9.500 Z" fill="#c98a3a"/>
<path d="M8.500 6 L14.500 11 L11 14.300 L6 9 Z" fill="#dba95c" stroke="#b98238" stroke-width=".6"/></svg><span style="left:37px;line-height:24px"><span style="letter-spacing:-0.010px">Färgkarta</span></span></div>
<div class="tab" style="left:168px;top:10px;width:128px;height:25px"><svg class="a" style="left:12px;top:3px" width="22" height="19" viewBox="0 0 22 19">
<defs><linearGradient id="gg123" x1="0" y1="0" x2="1" y2="1"><stop offset="0" stop-color="#3f5f8c"/><stop offset=".55" stop-color="#9fb2c8"/><stop offset="1" stop-color="#eef2f6"/></linearGradient></defs>
<rect x="1.500" y="1.500" width="19" height="12" fill="url(#gg123)" stroke="#8d949c"/>
<rect x="1" y="14" width="20" height="3.500" fill="#b4b8be"/><path d="M3 15.700h17" stroke="#7d838c" stroke-dasharray="1 1"/><rect x="0.300" y="0.500" width="1.600" height="17.500" fill="#8a8f96"/>
<rect x="2" y="14.500" width="2" height="2.500" fill="#3a5fa8"/></svg><span style="left:37px;line-height:24px"><span style="letter-spacing:-0.331px">Genomskinlighet</span></span></div>
<div class="tab" style="left:295px;top:10px;width:86px;height:25px"><svg class="a" style="left:13px;top:3px" width="19" height="19" viewBox="0 0 19 19">
<path d="M13.500 1.500 L16.500 4.500 L5 17.500 L2.500 15 Z" fill="#e6b24a" stroke="#b98a30" stroke-width=".5"/>
<path d="M4.500 3 L15.500 15.500 L13.500 17.500 L2.500 5.500 Z" fill="#d9a03a" stroke="#b07a20" stroke-width=".5"/>
<path d="M12 1 L16 0.500 L18 3.500 L16.500 6 L15 3.500Z" fill="#d4d4d4" stroke="#999" stroke-width=".5"/>
<path d="M0.800 3.500 L5.500 0.800 L7.500 3.500 L6 5 L4.500 4 L2.500 6Z" fill="#c0c0c0" stroke="#888" stroke-width=".5"/></svg><span style="left:37px;line-height:24px"><span style="letter-spacing:-0.241px">Allmänt</span></span></div>
<div class="tab sel" style="left:379px;top:7px;width:97px;height:29px"><svg class="a" style="left:14px;top:3px" width="20" height="20" viewBox="0 0 20 20">
<defs><linearGradient id="mg143" x1="0" y1="0" x2="1" y2="0"><stop offset="0" stop-color="#7fa9de"/><stop offset="1" stop-color="#5f8fd0"/></linearGradient></defs>
<circle cx="10" cy="10" r="9.200" fill="url(#mg143)" stroke="#5584c6" stroke-width=".6"/><rect x="8.700" y="7.500" width="2.500" height="9.500" fill="#fff"/>
<circle cx="10" cy="4.700" r="1.600" fill="#fff"/></svg><span style="left:38px;line-height:28px"><span style="letter-spacing:0.012px">Metadata</span></span></div>
<div class="tab" style="left:475px;top:10px;width:100px;height:25px"><svg class="a" style="left:13px;top:4px" width="22" height="15" viewBox="0 0 22 15">
<path d="M1 13.500 L4.500 5.500 L17.500 5.500 L21 13.500 Z" fill="#ececec" stroke="#8c8c8c" stroke-width=".9"/><path d="M7.500 5.500 L8.500 1.500 L13.500 1.500 L14.500 5.500" fill="#e4e4e4" stroke="#8c8c8c" stroke-width=".9"/>
<path d="M9.500 1 h3 v2 h-3z" fill="#aaa"/><path d="M4 9.500 h14" stroke="#c8c8c8"/><path d="M7 9v3M11 9v3M15 9v3" stroke="#9a9a9a"/></svg><span style="left:38px;line-height:24px"><span style="letter-spacing:-0.236px">Pyramider</span></span></div>
<div class="tab" style="left:574px;top:10px;width:97px;height:25px"><svg class="a" style="left:12px;top:3px" width="22" height="15" viewBox="0 0 22 15">
<rect x="1.500" y="1.500" width="19" height="12" fill="#f6f6f6" stroke="#a0a0a0"/><path d="M1 0.500 L1 14 M3.500 1 L3.500 13" stroke="#8a8a8a"/>
<path d="M4 4 L7 7 L10 5.500 L13 9 L16 8 L19.500 10.500" fill="none" stroke="#6a98d0" stroke-width="1.100"/></svg><span style="left:36px;line-height:24px"><span style="letter-spacing:-0.236px">Histogram</span></span></div>
<div class="t" style="left:31px;top:60px;"><span style="letter-spacing:-0.075px">Titel</span></div>
<div class="inp" style="left:31px;top:78px;width:686px;height:20px"></div>
<div class="t" style="left:31px;top:105px;"><span style="letter-spacing:-0.154px">Sammanfattning</span></div>
<div class="inp" style="left:31px;top:123px;width:686px;height:50px"></div>
<div class="inp" style="left:31px;top:179px;width:686px;height:566px;border-color:#3d8fe8;"></div>
<div class="hl" style="top:185px"><span style="letter-spacing:0.050px">Drivrutin:</span></div><div class="ln" style="top:210px"><span style="letter-spacing:-0.298px">GDAL provider</span></div><div class="ln" style="top:235px"><span style="letter-spacing:-0.932px">VRT</span></div><div class="ln" style="top:248px"><span style="letter-spacing:-0.140px">Virtual Raster</span></div><div class="hl" style="top:273px"><span style="letter-spacing:-0.080px">Beskrivning av dataset</span></div><div class="hl" style="top:298px"><span style="letter-spacing:-0.318px">Band 1</span></div><div class="ln" style="top:323px"><span style="letter-spacing:-0.308px">STATISTICS_MAXIMUM=70.522705078125</span></div><div class="ln" style="top:348px"><span style="letter-spacing:-0.294px">STATISTICS_MEAN=1.3602249394675</span></div><div class="ln" style="top:373px"><span style="letter-spacing:-0.430px">STATISTICS_MINIMUM=0</span></div><div class="ln" style="top:398px"><span style="letter-spacing:-0.377px">STATISTICS_STDDEV=4.3253698925886</span></div><div class="hl" style="top:423px"><span style="letter-spacing:-0.276px">Dimensioner:</span></div><div class="ln" style="top:448px"><span style="letter-spacing:-0.118px">X: 423 Y: 501 Band: 1</span></div><div class="hl" style="top:473px"><span style="letter-spacing:-0.078px">Origo:</span></div><div class="ln" style="top:498px"><span style="letter-spacing:0.096px">1.31672e+06,6.17418e+06</span></div><div class="hl" style="top:523px"><span style="letter-spacing:-0.139px">Pixelstorlek:</span></div><div class="ln" style="top:548px"><span style="letter-spacing:0.096px">33.89,-33.89</span></div><div class="hl" style="top:573px"><span style="letter-spacing:0.131px">Inget datavärde</span></div><div class="ln" style="top:598px"><span style="letter-spacing:-0.131px">-9999</span></div><div class="hl" style="top:623px"><span style="letter-spacing:0.188px">Datatyp:</span></div><div class="ln" style="top:648px"><span style="letter-spacing:0.006px">GDT_Float32 - Trettiotvåbitars flyttal</span></div><div class="hl" style="top:673px"><span style="letter-spacing:-0.089px">Pyramidöversikter:</span></div><div class="hl" style="top:698px"><span style="letter-spacing:-0.139px">Lagrets Spatial Reference System:</span></div><div class="ln" style="top:723px;left:38px"><span style="letter-spacing:0.158px">+proj=tmerc +lat_0=0 +lon_0=15.80827777777778 +k=1 +x_0=1500000 +y_0=0 +ellps=bessel</span></div><div class="ln" style="top:736px;left:38px;height:7px;overflow:hidden"><span style="letter-spacing:0.232px">+towgs84=414.1,41.3,603.1,-0.855,2.141,-7.023,0 +units=m +no_defs</span></div>
<div class="a" style="left:699px;top:180px;width:17px;height:564px;background:#f6f6f6;border-left:1px solid #e8e8e8;box-sizing:border-box"></div>
<svg class="a" style="left:699px;top:181px" width="17" height="16"><rect x="0.5" y="0.5" width="15" height="15" rx="2" fill="#f4f4f4" stroke="#8e8f8f"/><path d="M4.5 9.5 L8 5.5 L11.5 9.5Z" fill="#000"/></svg>
<div class="a" style="left:700px;top:198px;width:14px;height:255px;box-sizing:border-box;border:1px solid #979797;border-radius:2px;background:linear-gradient(90deg,#f4f4f4,#e4e4e6 50%,#d4d4d8)"></div>
<svg class="a" style="left:702px;top:317px" width="10" height="18"><path d="M1 1h1M4 1h1M7 1h1M1 4h1M4 4h1M7 4h1M1 7h1M4 7h1M7 7h1M1 10h1M4 10h1M7 10h1M1 13h1M4 13h1M7 13h1M1 16h1M4 16h1M7 16h1" stroke="#9a9a9a"/></svg>
<svg class="a" style="left:699px;top:711px" width="17" height="16"><rect x="0.5" y="0.5" width="15" height="15" rx="2" fill="#f4f4f4" stroke="#8e8f8f"/><path d="M4.5 9.5 L8 5.5 L11.5 9.5Z" fill="#000"/></svg>
<svg class="a" style="left:699px;top:727px" width="17" height="16"><rect x="0.5" y="0.5" width="15" height="15" rx="2" fill="#f4f4f4" stroke="#8e8f8f"/><path d="M4.5 6 L8 10 L11.5 6Z" fill="#000"/></svg>
<div class="btn " style="left:7px;top:776px;width:179px;height:23px;line-height:21px;"><span style="letter-spacing:-0.041px">Återskapa standardstil</span></div>
<div class="btn " style="left:192px;top:776px;width:179px;height:23px;line-height:21px;"><span style="letter-spacing:-0.201px">Spara som standard</span></div>
<div class="btn " style="left:377px;top:776px;width:179px;height:23px;line-height:21px;"><span style="letter-spacing:-0.004px">Läs in stil...</span></div>
<div class="btn " style="left:562px;top:776px;width:179px;height:23px;line-height:21px;"><span style="letter-spacing:-0.005px">Spara stil...</span></div>
<div class="btn def" style="left:411px;top:804px;width:75px;height:24px;line-height:22px;"><span style="letter-spacing:-0.953px">OK</span></div>
<div class="btn " style="left:496px;top:804px;width:75px;height:24px;line-height:22px;"><span style="letter-spacing:-0.375px">Cancel</span></div>
<div class="btn " style="left:581px;top:804px;width:75px;height:24px;line-height:22px;"><span style="letter-spacing:-0.306px">Apply</span></div>
<div class="btn " style="left:666px;top:804px;width:75px;height:24px;line-height:22px;"><span style="letter-spacing:-0.406px">Help</span></div>
<svg class="a" style="left:738px;top:824px" width="13" height="13"><path d="M12 2 L2 12 M12 6 L6 12 M12 10 L10 12" stroke="#a0a0a0" stroke-width="1"/><path d="M12 3 L3 12 M12 7 L7 12 M12 11 L11 12" stroke="#fff" stroke-width="1"/></svg>

<!-- feathered edges -->
<div class="a" style="left:1598px;top:0;width:14px;height:930px;background:linear-gradient(90deg,rgba(255,255,255,0),#fff 60%)"></div>
<div class="a" style="left:1500px;top:913px;width:112px;height:17px;background:linear-gradient(rgba(255,255,255,0),#fff 75%)"></div>
</div>
<div class="a" style="left:0;top:884px;width:27px;height:16px;overflow:hidden"><div class="t" style="left:0px;top:1px;"><span style="letter-spacing:-0.353px">Control</span></div></div>
<svg class="a" style="left:0;top:908px" width="20" height="16"><path d="M0 12 L9 1 L18 12 L13 12 L13 15 L5 15 L5 12Z" fill="#1010e0"/><path d="M0 12 L9 1 L18 12" fill="none" stroke="#223" stroke-width="1.200"/></svg>
<div class="shot" style="left:24px;top:860px;width:1504px;height:936px;-webkit-mask-image:linear-gradient(to bottom,transparent 0,#000 6px,#000 calc(100% - 12px),transparent 100%);mask-image:linear-gradient(to bottom,transparent 0,#000 6px,#000 calc(100% - 12px),transparent 100%);">
<div class="a" style="left:0;top:0;width:1504px;height:936px;-webkit-mask-image:linear-gradient(to right,transparent 0,#000 7px,#000 calc(100% - 7px),transparent 100%);mask-image:linear-gradient(to right,transparent 0,#000 7px,#000 calc(100% - 7px),transparent 100%);">
<div class="a" style="left:-7px;top:17px;width:0;height:0">
<div class="a" style="left:-60px;top:-60px;width:1780px;height:1010px;background:#f0f0f0"></div>
<div class="a" style="left:-60px;top:-10px;width:1780px;height:1px;background:#a9a9a9"></div><div class="a" style="left:-60px;top:-9px;width:1780px;height:1px;background:#fff"></div>
<div class="a" style="left:-60px;top:29px;width:1780px;height:1px;background:#a9a9a9"></div><div class="a" style="left:-60px;top:30px;width:1780px;height:1px;background:#fff"></div>
<div class="a" style="left:-60px;top:68px;width:1780px;height:1px;background:#a9a9a9"></div><div class="a" style="left:-60px;top:69px;width:1780px;height:1px;background:#fff"></div>
<div class="a" style="left:-60px;top:106px;width:1780px;height:1px;background:#c4c4c4"></div><div class="a" style="left:-60px;top:107px;width:1780px;height:1px;background:#9a9a9a"></div>
<svg class="a" style="left:762px;top:0px" width="170" height="24" viewBox="762 0 170 24">
<defs><linearGradient id="xg" x1="0" y1="0" x2="0" y2="1"><stop offset="0" stop-color="#8a8a8a"/><stop offset="1" stop-color="#adadad"/></linearGradient>
<linearGradient id="pg" x1="0" y1="0" x2="1" y2="1"><stop offset="0" stop-color="#f4f4f4"/><stop offset="1" stop-color="#c4c4c4"/></linearGradient></defs>
<circle cx="771" cy="9.500" r="7.600" fill="#e2e2e2"/><circle cx="771" cy="9.500" r="6.800" fill="url(#xg)"/><path d="M767.800 6.300 L774.200 12.700 M774.200 6.300 L767.800 12.700" stroke="#fff" stroke-width="2.300" stroke-linecap="round"/>
<g fill="#e6e6e6" stroke="#a4a4a4" stroke-width=".9"><path d="M806.500 0 L804.500 12 L806.500 20 L808.500 18.500 L808.800 0Z"/><path d="M798.500 15.500 L807 8 L809.500 9.500 L800 17.500Z"/><circle cx="812.500" cy="5.500" r="3" fill="#ddd"/><path d="M807.500 9.500 L811 7.500"/></g>
<g fill="url(#pg)" stroke="#a9a9a9" stroke-width=".9"><path d="M831.500 1.500 l8 -1.500 l4 2.500 l1.500 9 l-11 2z"/><path d="M839.500 6.500 h7 l3.500 3 v9 h-10.500z"/></g>
<path d="M834 4l6 -1M834.500 6.500l6 -1M835 9l6 -1M842 11h6M842 13.500h6M842 16h6" stroke="#b0b0b0" stroke-width=".8"/>
<g stroke="#a9a9a9" stroke-width=".9"><path d="M864.500 1.500 h15 v15.500 h-15z" fill="url(#pg)"/><path d="M868.500 0 h7 v2.500 h-7z" fill="#d4d4d4"/><path d="M875.500 6.500 h7 l3 3 v9 h-10z" fill="#f6f6f6"/></g>
<path d="M877.500 11h6M877.500 13.500h6M877.500 16h6" stroke="#b0b0b0" stroke-width=".8"/>
<rect x="900.500" y="0.500" width="21" height="18" fill="#fbfbfb" stroke="#8f8f8f"/><rect x="901" y="0" width="20" height="3.500" fill="#b9b9b9"/>
<text x="911" y="14.500" text-anchor="middle" font-family="Liberation Serif,serif" font-weight="bold" font-size="14" fill="#4c4c4c" letter-spacing="-.5">x-y</text><path d="M903 16.500h16" stroke="#777" stroke-width=".8" stroke-dasharray="1.500 1"/></svg><svg class="a" style="left:756px;top:74px" width="70" height="30" viewBox="756 74 70 30">
<rect x="755" y="77" width="16.500" height="8.500" rx="1.500" fill="#6a6a6a" stroke="#444" stroke-width=".8"/><text x="758" y="84" font-family="Liberation Sans,sans-serif" font-weight="bold" font-size="6.500" fill="#eee">AME</text><path d="M758 86 q11 1 14 14 q-9 3 -14 -2z" fill="#2a78c0"/><path d="M765 90 q5 3 6 9 q-3 1 -5 -1z" fill="#8cc4ec"/>
<path d="M785.500 78.500 h19 v16 h-13 l-8 5 l4 -5 h-2z" fill="#d8e6f2" stroke="#8c959c"/>
<text x="795" y="92" text-anchor="middle" font-family="Liberation Serif,serif" font-size="13" fill="#444">T</text>
<path d="M811 85 h9.500 l-4.750 5.500z" fill="#000"/></svg><svg class="a" style="left:1100px;top:72px" width="500" height="32" viewBox="1100 72 500 32">
<g fill="#fff" stroke="#cfcfcf" stroke-width="1"><path d="M1108 76v26M1110 76v26" stroke-dasharray="1.500 2.500"/><path d="M1227 76v26M1229 76v26" stroke-dasharray="1.500 2.500"/>
<path d="M1356 76v26M1358 76v26M1371 76v26M1373 76v26" stroke-dasharray="1.500 2.500"/></g>
<path d="M1118 78 L1125 98 L1130 80 Z" fill="none" stroke="#4a78b8" stroke-width="1.2"/><path d="M1130 80 q8 -4 11 0 l-2 12 q-6 3 -10 -1" fill="#f4f4f4" stroke="#c03030" stroke-width="1.100"/>
<circle cx="1138" cy="83" r="1.500" fill="none" stroke="#c03030"/><circle cx="1134" cy="92" r="1.500" fill="none" stroke="#c03030"/><circle cx="1139" cy="96" r="1.500" fill="none" stroke="#4a78b8"/>
<ellipse cx="1165" cy="83" rx="9" ry="5" fill="none" stroke="#f0f020" stroke-width="2.400"/><path d="M1160 88 l6 -6 l8 5 l-6 8 z" fill="#fff"/><circle cx="1157" cy="95" r="4" fill="#f00000"/>
<text x="1188" y="96" font-family="Liberation Sans,sans-serif" font-size="22" fill="#111">Σ</text><rect x="1200.500" y="85.500" width="9" height="11" fill="#dde6f4" stroke="#7a8aa8"/><path d="M1202 89h6M1202 92h6M1202 95h6" stroke="#5a78c0"/>
<rect x="1238" y="77" width="20" height="21" rx="3" fill="#18901c"/><ellipse cx="1248" cy="80" rx="10" ry="3" fill="#2cc030"/><path d="M1240 86q8 4 16 0M1240 92q8 4 16 0" stroke="#0a5a0c" fill="none"/><path d="M1246 94 l6 -7 l3 3 l-6 6z" fill="#e8e8e8"/>
<path d="M1273 84v14" stroke="#1a9a1a" stroke-width="3.500"/><path d="M1279 98v-13h5q8 1 8 7q0 6 -8 6z" fill="none" stroke="#1a9a1a" stroke-width="3"/><path d="M1283 88 L1295 76 M1295 76 l-8 1 M1295 76 l-1 8" stroke="#000" stroke-width="2.400"/>
<rect x="1308" y="78" width="22" height="20" fill="#3c7a3c"/><rect x="1309" y="80" width="20" height="3" fill="#fff"/><rect x="1310" y="86" width="18" height="11" fill="#7a9a78"/><path d="M1310 97 l5 -6 l4 3 l4 -5 l5 8z" fill="#55704e"/>
<g id="grs"><path d="M1383 88 h8 l2 -3 h8 v12 h-18z" fill="#6a90e0"/><path d="M1397 97 q-2 -12 -6 -17 q7 5 8 14 q1 -10 4 -15 q1 8 -1 16 q3 -7 6 -9 q-2 6 -5 11z" fill="#3a6a20" stroke="#20400f" stroke-width=".5"/></g>
<path d="M1417 88 h8 l2 -3 h8 v12 h-18z" fill="#6a90e0"/><path d="M1431 97 q-2 -12 -6 -17 q7 5 8 14 q1 -10 4 -15 q1 8 -1 16 q3 -7 6 -9 q-2 6 -5 11z" fill="#3a6a20" stroke="#20400f" stroke-width=".5"/>
<path d="M1425 76 l2.200 4.800 l5.200 .6 l-3.900 3.500 l1.100 5.100 l-4.600 -2.600 l-4.600 2.600 l1.100 -5.100 l-3.900 -3.500 l5.200 -.6z" fill="#ffd020" stroke="#e8a000" stroke-width=".8"/>
<path d="M1454 88 h8 l2 -3 h8 v12 h-18z" fill="#b0b0b0"/><path d="M1468 97 q-2 -12 -6 -17 q7 5 8 14 q1 -10 4 -15 q1 8 -1 16 q3 -7 6 -9 q-2 6 -5 11z" fill="#9a9a9a" stroke="#7a7a7a" stroke-width=".5"/>
<circle cx="1458" cy="82" r="5.500" fill="#8c8c8c"/><path d="M1455.500 79.500l5 5M1460.500 79.500l-5 5" stroke="#fff" stroke-width="1.600"/>
<path d="M1481.500 75v28" stroke="#b8b8b8"/>
<path d="M1491 84 l14 -2 l4 16 l-14 1z" fill="#2a8ad0" stroke="#1a4a78" stroke-width=".8"/><path d="M1495 94 q4 -8 10 -6 M1497 88 q3 4 7 8" stroke="#d8f060" fill="none"/><path d="M1507 98 q-2 -12 -5 -16 q6 5 7 13 q1 -9 4 -14 q1 8 -1 17z" fill="#3a6a20"/>
<circle cx="1494" cy="81" r="5.500" fill="#18902a"/><path d="M1491 81h6M1494 78v6" stroke="#fff" stroke-width="1.800"/>
<path d="M1527 84 l14 -2 l4 16 l-14 1z" fill="#c06a58" stroke="#1a4a78" stroke-width=".8"/><path d="M1528 90 l16 -2 M1532 84 l3 14 M1538 83 l3 14" stroke="#e8d070" fill="none"/><path d="M1543 98 q-2 -12 -5 -16 q6 5 7 13 q1 -9 4 -14 q1 8 -1 17z" fill="#3a6a20"/>
<circle cx="1530" cy="81" r="5.500" fill="#18902a"/><path d="M1527 81h6M1530 78v6" stroke="#fff" stroke-width="1.800"/>
<text x="1583" y="93" font-family="Liberation Sans,sans-serif" font-size="13" font-weight="bold" fill="#000">»</text>
</svg>
<div class="a" style="left:-60px;top:108px;width:435px;height:768px;background:#fff;border:1px solid #b5b5b5;border-top:none;box-sizing:border-box"></div>
<div class="t" style="left:-1px;top:885px;"><span style="letter-spacing:-0.164px">Control rendering order</span></div>
<svg class="a" style="left:0px;top:904px" width="130" height="16" viewBox="0 896 130 16"><path d="M-2 898 l8 8 l-6 4z" fill="#2030c0"/><rect x="32" y="899" width="14" height="12" rx="2" fill="#b8c4d0"/><text x="30" y="907" font-size="6" font-family="Liberation Sans,sans-serif" fill="#556">SQL</text><circle cx="70" cy="909" r="9" fill="#c8a0d8"/><path d="M102 898v12M102 902h12" stroke="#333" stroke-width="1.300"/></svg>
<svg class="a" style="left:381px;top:108px" width="1330" height="792" viewBox="381 108 1330 792">
<defs><filter id="blb" x="-50%" y="-50%" width="200%" height="200%"><feGaussianBlur stdDeviation="5.500"/></filter></defs>
<rect x="381" y="108" width="1330" height="792" fill="#fff"/>
<path d="M1182 109 H1711 V900 H756 Q748 894 753 886 L753 113 L1182 113 Z" fill="#fed480"/><path d="M753 887 Q748 894 755 900 M788 900 L786 890 L800 889 L900 887 M958 900 L962 890 L985 886" fill="none" stroke="#a2520c" stroke-width="2.200"/><path d="M752 893 L786 891" stroke="#0050ff" stroke-width="1.300"/><path d="M1009 886 L1013 900" stroke="#5aa800" stroke-width="6"/><path d="M1009 886 L1013 900" stroke="#ffff00" stroke-width="2.600"/><text x="720" y="899" font-size="11" font-family="Liberation Sans,sans-serif" fill="#a2520c" font-weight="bold">0</text>
<path d="M1340.0 137.1 L1350.1 135.4 L1367.0 132.1 L1377.1 124.5 L1395.7 123.6 L1412.6 128.7 M1453.1 143.0 L1478.4 160.7 L1491.0 182.7 M1454.7 294.1 L1464.9 290.7 L1469.1 294.1 M1475.0 297.4 L1464.9 307.6 L1464.9 324.4 L1461.5 336.2 M1340.0 353.1 L1350.1 349.7 L1361.9 346.4 L1378.8 343.0 L1388.9 327.8 L1385.6 319.4 L1399.1 322.7 L1410.9 319.4 M1441.2 324.4 L1437.0 333.7 L1444.6 336.2 L1466.6 337.9 L1469.9 332.9 L1486.8 336.2 L1500.3 339.6 L1502.0 351.4 L1508.7 356.5 L1508.7 370.0 L1512.1 376.7 L1508.7 386.9 L1490.2 395.3 L1466.6 395.3 L1458.1 402.1 L1453.1 403.7 L1446.3 391.9 L1429.4 400.4 L1407.5 419.9 M1508.7 353.1 L1523.9 354.8 L1530.7 370.0 L1539.1 386.9 L1537.4 394.5 L1556.0 405.4 L1567.8 399.5 L1583.0 407.1 L1593.1 403.7 L1593.1 397.0 L1610.0 391.9 M1411.7 353.1 L1417.6 358.2 L1418.5 366.6 M1397.4 386.9 L1402.4 376.7 L1414.2 374.2 M1610.0 108.4 L1598.2 120.2 L1603.2 129.5 L1610.0 132.1 M1594.8 187.7 L1603.2 180.2 L1610.0 179.3 M1599.0 351.4 L1601.2 364.1 M1427.7 400.0 L1414.2 413.5 L1407.5 423.6 L1403.3 437.1 L1399.1 443.9 L1399.1 455.7 L1390.6 470.9 L1399.1 489.4 L1393.2 501.2 L1401.6 524.9 L1400.7 531.6 L1407.5 537.5 L1415.9 537.5 L1423.5 555.2 L1410.0 567.1 L1411.7 573.8 L1408.3 582.2 L1393.2 595.7 L1388.1 604.2 L1405.8 622.7 L1410.0 626.1 L1407.5 643.0 L1382.2 663.2 L1367.0 662.4 L1350.1 667.5 L1340.0 670.0 M1408.3 582.2 L1412.6 590.7 L1422.7 594.1 L1426.1 604.2 L1432.0 605.9 L1437.9 611.8 L1442.1 610.9 L1444.6 605.0 L1463.2 602.5 L1474.2 629.5 L1488.5 626.1 L1513.8 613.5 L1517.2 599.1 L1525.6 595.7 L1529.0 587.3 L1544.2 583.9 M1488.5 626.1 L1489.3 639.6 L1486.0 659.9 L1488.5 678.4 L1502.0 678.4 L1504.5 672.5 L1515.5 673.4 L1524.8 677.6 M1493.6 679.3 L1496.1 690.2 L1502.0 698.7 L1508.7 696.2 L1522.2 712.2 L1531.5 717.2 M1547.6 581.4 L1564.4 578.0 L1593.1 615.2 L1593.1 627.0 L1610.0 632.0 M1499.5 489.4 L1501.2 497.9 L1504.5 501.2 M1368.7 642.2 L1371.2 641.3 M1340.0 742.3 L1350.1 747.4 L1361.9 754.1 L1377.1 772.7 L1376.3 789.6 L1385.6 804.7 L1394.0 835.1 L1401.1 845.2 M1526.5 801.4 L1531.5 816.6 M1521.4 823.3 L1512.1 821.6 L1497.8 827.5 L1498.6 833.4 L1492.7 841.9 M1401.1 845.3 L1403.9 847.6 L1402.7 852.0 L1405.5 862.1 L1407.8 864.3 L1410.6 862.1 L1412.8 866.5 L1410.0 872.1 L1407.8 879.9 L1412.2 885.5 L1414.5 894.5 L1415.4 901.2 M1492.1 842.0 L1491.5 845.3 L1485.9 852.0 L1484.8 861.0 L1481.5 862.6 L1477.0 859.8 L1472.5 861.0 L1468.1 868.2 M1461.4 870.5 L1456.9 868.8 L1452.4 871.0 L1451.3 872.7 L1446.8 869.9 L1441.3 872.1 L1439.0 875.5 L1438.5 890.0 L1427.9 896.7 L1428.4 901.2 M1438.5 890.0 L1441.3 892.2 L1441.8 901.2 M1466.9 882.7 L1466.4 880.5 L1459.1 881.1 L1460.8 893.3 L1460.2 897.3 L1446.8 900.0 M1460.8 893.3 L1472.5 894.5 L1474.8 901.2 M1489.3 897.3 L1501.6 897.3" fill="none" stroke="#0050ff" stroke-width="1.4" stroke-linejoin="round"/>
<path d="M1424.2 113.1L1430.7 116.6 M1422.7 117.9L1430.2 121.7 M1397.8 108.7L1402.6 111.5 M1417.2 119.0L1425.8 123.3 M1394.2 110.3L1397.0 111.7 M1398.4 112.5L1409.5 118.2 M1409.8 118.6L1419.8 123.6 M1424.4 126.4L1428.9 128.8 M1386.2 109.1L1389.9 111.4 M1400.0 116.5L1409.6 121.4 M1417.7 125.9L1426.3 130.7 M1384.6 111.9L1393.7 116.7 M1398.4 119.3L1409.5 124.9 M1415.1 128.1L1425.0 133.2 M1387.7 117.1L1391.7 119.4 M1382.5 119.5L1387.1 121.8 M1400.8 129.2L1403.1 130.2 M1408.4 133.2L1412.0 135.4 M1411.4 134.8L1414.9 136.5 M1373.1 118.5L1378.6 121.3 M1391.3 128.1L1395.2 130.3 M1395.1 130.1L1403.2 134.5 M1406.3 136.1L1411.4 138.6 M1380.9 126.2L1388.9 130.6 M1389.8 131.0L1394.9 133.7 M1396.0 134.3L1405.2 139.3 M1368.7 122.7L1378.9 127.9 M1379.4 128.3L1391.4 135.0 M1395.8 137.1L1399.3 139.2 M1366.9 126.3L1377.4 131.9 M1377.4 131.9L1384.2 135.5 M1385.4 136.2L1394.4 141.0 M1362.4 128.1L1369.6 132.0 M1372.4 133.4L1379.6 137.2 M1367.4 114.9L1362.8 123.9 M1369.6 120.6L1365.1 127.4 M1376.4 118.2L1372.3 126.0 M1372.3 125.9L1370.3 130.5 M1383.0 116.6L1380.2 120.7 M1389.1 110.9L1387.9 114.5 M1381.8 124.6L1377.7 133.6 M1390.3 118.3L1387.4 124.2 M1396.2 111.8L1390.3 122.6 M1390.4 122.7L1383.7 134.5 M1405.6 111.6L1401.4 120.1 M1401.2 119.9L1395.1 132.5 M1407.0 117.2L1402.5 124.3 M1403.0 124.7L1399.4 130.0 M1412.0 117.2L1407.3 127.7 M1406.8 127.1L1403.8 134.3 M1403.3 133.7L1401.2 138.2 M1418.7 112.6L1417.3 116.4 M1413.2 122.8L1407.2 133.4 M1420.4 118.4L1415.0 128.5 M1424.0 120.8L1420.3 129.0 M1419.9 128.6L1416.2 135.0 M1428.0 125.9L1425.5 131.4 M1421.8 122.8L1431.1 117.3 M1419.3 128.2L1426.4 123.9 M1426.0 123.5L1434.4 117.9 M1427.8 129.0L1438.4 122.5 M1437.9 122.0L1440.8 120.7 M1436.5 129.3L1439.5 126.4 M1444.1 124.0L1448.1 121.1 M1446.0 126.5L1450.8 123.9 M1441.8 134.4L1448.2 130.9 M1419.5 127.6L1424.3 134.8 M1441.8 121.6L1447.4 129.8 M1446.2 121.8L1450.2 127.5 M1569.3 199.8L1579.7 200.7 M1579.6 200.6L1588.9 201.1 M1560.8 201.8L1569.2 202.1 M1572.1 202.6L1577.2 203.5 M1572.2 206.3L1585.1 207.3 M1585.0 207.2L1595.6 207.6 M1550.1 208.5L1560.0 209.0 M1563.8 209.4L1576.5 209.9 M1592.7 211.5L1596.1 211.4 M1548.9 212.6L1551.9 212.4 M1560.8 213.4L1564.4 214.0 M1566.0 213.8L1576.0 214.0 M1576.5 214.5L1581.0 214.7 M1581.2 214.8L1592.1 215.4 M1553.5 216.6L1559.9 217.0 M1560.0 217.1L1564.3 217.3 M1573.0 218.0L1580.6 218.6 M1581.8 218.6L1584.7 218.4 M1593.8 219.4L1607.6 220.3 M1546.6 219.9L1554.8 219.9 M1561.1 220.9L1565.7 220.9 M1566.1 221.2L1574.3 222.0 M1593.2 223.1L1601.3 223.2 M1556.1 224.8L1563.4 225.5 M1565.7 225.5L1577.3 225.8 M1577.9 226.3L1585.1 226.5 M1585.4 226.9L1589.1 227.0 M1596.9 227.7L1604.5 228.5 M1605.8 228.3L1610.5 229.0 M1550.6 226.3L1561.3 226.9 M1561.5 227.1L1573.3 227.9 M1586.7 228.8L1598.6 229.4 M1598.9 229.7L1605.0 230.3 M1547.1 228.1L1551.2 227.9 M1557.2 228.8L1570.6 229.4 M1573.2 230.0L1583.5 230.6 M1583.5 230.7L1588.3 231.5 M1587.8 231.0L1592.1 231.5 M1597.3 231.6L1605.2 232.1 M1551.9 230.7L1564.5 231.6 M1564.5 231.5L1572.5 232.6 M1595.1 233.7L1600.4 233.9 M1548.0 232.2L1561.1 233.5 M1566.4 233.5L1577.9 234.8 M1595.8 235.6L1603.7 236.2 M1551.0 236.0L1561.1 236.5 M1561.4 236.7L1565.0 237.3 M1569.4 237.3L1581.2 238.3 M1581.0 238.1L1593.1 238.6 M1596.8 239.2L1603.1 239.7 M1603.0 239.7L1609.9 240.0 M1556.4 239.5L1568.0 240.2 M1568.2 240.3L1572.0 240.5 M1584.5 241.5L1590.8 241.9 M1593.3 242.1L1607.1 243.4 M1552.6 241.5L1565.9 242.6 M1565.7 242.4L1572.0 242.6 M1576.7 243.2L1584.1 244.0 M1588.8 244.0L1599.1 245.1 M1579.1 247.0L1589.3 247.6 M1595.2 248.2L1602.5 249.1 M1551.9 247.9L1563.3 248.7 M1568.4 249.1L1575.9 249.7 M1578.3 249.7L1591.0 250.2 M1593.7 250.8L1601.1 251.2 M1558.8 252.3L1571.4 253.4 M1581.8 253.9L1592.0 255.0 M1591.6 254.6L1601.6 255.8 M1548.7 254.5L1563.1 256.0 M1562.6 255.4L1575.4 256.1 M1575.6 256.4L1578.5 256.4 M1580.4 256.7L1591.4 258.0 M1569.4 257.9L1573.3 257.7 M1575.1 258.3L1580.6 258.8 M1580.4 258.7L1593.4 259.6 M1565.1 260.2L1573.6 261.1 M1573.2 260.8L1579.0 261.4 M1578.7 261.2L1581.7 261.0 M1569.9 264.6L1582.5 265.2 M1544.9 219.0L1544.3 225.7 M1544.4 225.8L1543.8 228.5 M1543.9 233.0L1543.5 240.2 M1549.7 212.0L1548.6 222.3 M1548.9 224.0L1548.3 234.4 M1547.9 237.4L1546.9 251.1 M1553.8 205.4L1553.5 209.5 M1553.5 209.5L1553.1 219.1 M1552.8 220.0L1551.8 227.8 M1551.9 231.9L1551.8 242.2 M1551.0 245.4L1550.6 249.3 M1556.5 228.1L1555.4 241.5 M1555.5 241.7L1555.9 245.4 M1555.3 244.8L1554.5 257.3 M1561.3 208.5L1561.0 219.4 M1559.6 232.8L1558.8 245.9 M1558.5 247.9L1558.1 252.9 M1558.2 253.0L1557.2 258.5 M1566.2 199.6L1566.2 208.2 M1565.6 207.7L1564.9 216.3 M1565.0 216.3L1563.8 227.7 M1564.2 228.1L1563.3 231.9 M1563.9 232.5L1563.0 246.3 M1562.7 249.4L1561.9 257.2 M1569.4 204.0L1568.5 217.7 M1568.4 217.6L1567.8 223.2 M1568.0 223.3L1567.5 231.5 M1566.9 239.5L1566.8 247.5 M1573.1 213.5L1572.1 224.7 M1572.3 224.9L1572.0 231.9 M1571.8 231.7L1571.9 239.8 M1570.8 246.6L1570.6 254.4 M1570.3 254.1L1569.4 264.3 M1575.2 213.3L1574.9 224.7 M1574.4 225.7L1574.2 235.8 M1573.7 235.3L1572.8 238.8 M1573.4 239.3L1572.5 250.0 M1578.0 208.3L1577.4 220.7 M1577.1 220.4L1576.8 226.6 M1576.4 231.7L1575.1 245.2 M1575.4 245.5L1574.7 256.5 M1580.6 203.7L1579.7 210.3 M1579.1 223.8L1578.0 235.1 M1578.3 235.5L1578.5 238.8 M1577.1 253.1L1576.6 259.4 M1584.7 204.5L1584.4 208.2 M1583.4 223.1L1582.4 235.8 M1582.2 239.8L1581.1 247.4 M1581.3 252.8L1581.1 257.6 M1589.0 201.5L1588.3 204.4 M1588.2 213.4L1587.0 226.6 M1587.2 226.8L1586.5 237.9 M1586.4 238.9L1586.1 249.4 M1585.4 253.4L1584.4 263.6 M1593.1 204.0L1592.8 208.8 M1592.7 208.7L1592.6 218.1 M1592.1 217.6L1591.1 228.9 M1591.2 231.0L1590.8 239.0 M1590.2 245.5L1590.2 252.8 M1589.7 252.3L1589.3 255.6 M1595.5 215.4L1595.0 226.5 M1594.8 226.3L1593.8 236.9 M1594.0 237.1L1593.5 242.6 M1593.5 244.9L1593.1 251.7 M1593.0 251.6L1592.4 257.3 M1599.9 210.3L1599.9 213.6 M1599.7 213.4L1599.7 218.8 M1599.2 221.0L1598.6 225.5 M1603.1 211.6L1601.7 223.8 M1602.2 224.3L1601.8 233.0 M1604.5 222.0L1604.8 226.0 M1606.7 218.6L1605.6 228.3 M1605.8 231.5L1605.1 245.4 M1604.9 245.2L1604.5 248.6 M1608.7 222.1L1607.9 231.3 M1572.5 265.9L1582.4 266.1 M1568.7 270.0L1579.9 270.6 M1579.5 270.2L1586.1 270.7 M1589.6 270.4L1594.6 270.8 M1549.7 273.9L1553.0 273.8 M1553.1 274.0L1558.2 274.5 M1563.6 274.1L1576.4 274.3 M1576.4 274.4L1586.6 274.6 M1586.5 274.5L1599.8 274.7 M1551.4 276.9L1560.9 277.2 M1560.7 277.1L1564.4 277.1 M1564.4 277.1L1571.6 277.6 M1586.3 277.5L1595.7 277.5 M1542.5 280.4L1553.2 280.2 M1553.6 280.6L1559.1 280.6 M1559.2 280.7L1563.1 280.6 M1584.0 281.1L1589.5 281.2 M1548.4 284.2L1559.9 284.2 M1560.1 284.4L1568.2 285.0 M1595.4 285.0L1605.4 285.0 M1567.1 286.9L1579.5 286.6 M1580.0 287.2L1585.1 287.4 M1592.5 287.4L1599.7 287.9 M1569.1 290.0L1572.6 290.5 M1574.6 290.1L1580.4 290.1 M1580.5 290.2L1591.5 289.9 M1597.4 290.5L1601.1 290.3 M1545.7 292.2L1554.7 292.2 M1556.7 292.4L1564.2 292.8 M1568.8 292.6L1578.5 292.6 M1578.7 292.8L1589.6 293.2 M1589.4 292.9L1595.3 293.3 M1561.9 296.1L1572.5 295.9 M1573.0 296.3L1576.4 296.7 M1582.7 296.5L1595.4 297.1 M1554.5 299.0L1567.6 299.0 M1567.8 299.2L1579.5 299.0 M1584.0 299.5L1595.1 299.5 M1598.0 299.7L1605.6 299.9 M1549.4 301.0L1559.8 301.1 M1559.8 301.2L1572.2 300.9 M1572.7 301.4L1585.7 301.5 M1585.8 301.6L1590.5 301.3 M1590.8 301.7L1597.5 302.0 M1597.3 301.8L1603.5 301.8 M1548.9 302.7L1556.2 303.2 M1561.9 302.9L1570.1 303.0 M1570.1 303.1L1582.2 303.3 M1582.2 303.3L1594.9 303.8 M1594.6 303.5L1602.4 303.3 M1546.7 306.5L1552.2 307.0 M1560.7 306.7L1571.2 306.4 M1571.7 306.9L1578.0 307.1 M1577.9 307.0L1580.9 307.0 M1581.0 307.1L1586.8 307.7 M1590.0 307.3L1594.5 307.5 M1550.2 309.2L1556.6 309.5 M1562.4 309.4L1572.3 309.1 M1572.8 309.6L1579.9 309.9 M1579.6 309.7L1584.8 309.9 M1590.1 309.9L1600.8 310.6 M1567.4 312.6L1578.3 312.5 M1583.9 312.8L1587.1 312.6 M1587.4 312.9L1594.2 312.9 M1557.7 314.4L1562.6 314.3 M1574.7 314.6L1579.0 314.4 M1579.3 314.7L1588.3 314.6 M1564.4 317.6L1573.0 318.0 M1541.3 282.9L1540.7 289.8 M1541.2 290.4L1541.6 298.3 M1544.3 277.9L1543.6 287.3 M1544.1 287.8L1543.3 300.9 M1548.2 282.1L1548.5 286.5 M1548.1 289.0L1548.5 296.2 M1550.5 278.7L1550.2 288.3 M1550.3 288.4L1549.7 292.5 M1550.3 293.1L1549.6 303.9 M1554.6 270.6L1555.1 274.9 M1554.5 278.2L1554.6 282.6 M1554.4 283.7L1554.4 288.4 M1554.2 290.5L1554.1 304.2 M1556.2 300.9L1556.0 307.6 M1559.6 270.5L1559.5 278.9 M1559.4 278.8L1559.4 286.6 M1559.3 289.2L1558.9 303.1 M1562.0 305.3L1562.2 310.6 M1565.0 269.3L1564.3 280.0 M1564.8 283.6L1565.0 287.7 M1564.5 301.2L1564.1 308.0 M1564.3 308.3L1564.0 316.9 M1567.4 269.3L1566.8 277.7 M1567.1 291.2L1566.4 304.6 M1566.8 308.1L1566.7 314.9 M1569.8 292.9L1569.3 304.8 M1573.5 264.5L1573.6 269.6 M1573.4 269.4L1573.1 278.3 M1573.3 278.4L1573.6 290.8 M1573.0 292.8L1573.3 302.0 M1572.8 301.6L1572.1 314.3 M1577.0 289.2L1576.6 301.0 M1576.8 301.3L1576.5 314.5 M1579.3 265.9L1579.5 278.5 M1579.1 280.5L1578.6 293.8 M1578.8 294.1L1578.2 299.5 M1581.2 280.6L1580.6 289.0 M1580.9 295.5L1580.4 301.1 M1580.8 304.3L1580.2 317.0 M1583.6 272.4L1583.3 278.7 M1583.5 278.8L1583.3 290.4 M1583.3 290.4L1583.6 298.7 M1585.9 268.3L1586.3 273.0 M1585.8 272.5L1585.6 286.5 M1585.6 286.5L1585.4 290.4 M1585.4 294.5L1585.2 300.9 M1588.0 283.0L1588.3 291.7 M1587.9 291.2L1587.8 300.2 M1590.7 275.4L1590.4 287.7 M1590.5 291.4L1590.5 299.0 M1590.3 298.8L1589.8 307.9 M1590.1 312.3L1589.8 316.6 M1594.6 269.6L1594.0 277.0 M1594.5 277.4L1594.8 285.1 M1594.3 286.5L1593.6 298.1 M1594.0 306.8L1593.8 314.0 M1598.0 272.6L1597.9 276.3 M1597.4 304.6L1596.8 308.1 M1600.2 282.6L1600.0 295.5 M1602.4 283.2L1602.2 286.4 M1602.4 286.6L1602.0 298.6 M1602.1 300.6L1602.2 306.6 M1542.4 207.0L1545.8 205.5 M1545.4 205.1L1551.9 201.1 M1551.1 206.2L1558.4 201.5 M1562.6 199.0L1565.7 196.4 M1541.4 215.1L1553.5 208.5 M1557.7 205.0L1563.9 201.6 M1563.6 201.3L1566.6 200.0 M1568.1 198.5L1570.9 197.0 M1542.9 216.6L1552.9 209.8 M1553.2 210.2L1559.9 205.5 M1560.2 205.8L1570.8 198.7 M1545.9 219.4L1554.4 213.4 M1554.8 213.8L1561.2 209.7 M1561.3 209.8L1569.5 205.4 M1569.0 204.9L1578.8 199.0 M1546.9 222.2L1555.0 217.5 M1573.5 205.5L1579.9 202.4 M1549.7 223.1L1555.8 219.1 M1559.7 216.9L1563.3 214.2 M1563.5 214.5L1573.7 209.0 M1574.2 207.8L1580.9 203.0 M1549.3 228.9L1553.4 225.8 M1553.7 226.1L1560.5 221.2 M1558.3 227.7L1567.5 222.5 M1570.1 220.3L1575.6 216.2 M1579.2 214.7L1584.5 212.0 M1558.2 233.1L1568.9 227.0 M1568.6 226.6L1576.8 221.3 M1565.6 233.7L1571.4 230.8 M1577.6 226.2L1579.9 224.1 M1580.3 224.5L1585.2 220.8 M1575.8 231.4L1582.6 227.0 M1582.7 227.1L1589.8 222.2 M1543.9 213.3L1546.7 217.7 M1547.8 219.5L1551.2 225.2 M1551.5 218.6L1555.6 225.3 M1557.1 227.6L1561.4 234.1 M1549.7 208.6L1556.7 220.0 M1551.1 202.0L1554.8 208.0 M1555.0 208.2L1561.0 217.7 M1560.9 217.7L1565.6 225.1 M1565.5 224.9L1568.5 230.2 M1558.4 205.1L1561.9 211.0 M1563.7 213.7L1566.7 218.1 M1567.2 210.5L1573.4 220.4 M1573.4 220.4L1575.2 223.6 M1564.0 199.8L1569.0 207.6 M1568.6 207.2L1573.8 215.3 M1566.6 196.0L1573.2 206.2 M1572.7 205.8L1575.9 211.2 M1577.1 212.8L1584.5 224.5 M1573.3 198.4L1578.8 207.2 M1588.9 217.6L1591.4 221.2 M1526.7 533.4L1530.7 533.6 M1520.5 535.6L1526.3 536.1 M1528.0 536.7L1533.7 536.9 M1500.3 536.3L1512.8 538.3 M1516.3 538.5L1519.0 538.6 M1524.5 539.7L1537.6 541.3 M1511.0 541.5L1515.1 542.2 M1521.6 543.0L1527.6 543.5 M1498.2 542.4L1510.0 544.0 M1515.7 544.9L1519.4 545.7 M1523.6 546.0L1537.3 548.2 M1499.9 546.8L1510.6 548.1 M1510.9 548.4L1516.0 549.6 M1515.4 549.0L1525.0 550.2 M1507.3 551.3L1513.6 552.4 M1519.5 553.0L1528.8 554.3 M1508.2 555.0L1521.2 557.3 M1520.7 556.7L1528.9 557.5 M1529.3 557.9L1542.7 560.0 M1510.6 558.5L1521.0 559.6 M1521.4 560.0L1531.7 561.6 M1531.5 561.4L1534.6 561.6 M1536.6 562.1L1542.6 562.7 M1508.5 560.8L1514.0 561.2 M1514.5 561.7L1521.6 562.8 M1525.2 563.2L1532.4 564.7 M1503.2 563.2L1513.3 565.1 M1514.4 564.8L1523.1 565.7 M1523.5 566.1L1536.1 567.8 M1504.6 567.5L1512.7 568.4 M1513.0 568.6L1521.3 569.8 M1525.4 570.4L1533.5 571.8 M1533.2 571.5L1536.0 571.6 M1506.7 569.8L1515.0 571.1 M1522.8 572.1L1529.4 573.1 M1499.3 571.9L1510.0 573.4 M1510.0 573.4L1517.6 574.8 M1519.6 574.7L1532.1 576.8 M1512.0 577.7L1523.4 579.0 M1496.4 548.1L1494.2 561.1 M1499.8 542.4L1498.4 554.8 M1498.1 554.4L1496.5 566.8 M1505.0 533.1L1505.1 536.6 M1504.6 536.1L1503.1 543.3 M1503.3 545.5L1502.7 553.0 M1502.0 554.8L1500.9 560.6 M1506.6 542.9L1506.0 549.3 M1505.4 551.0L1504.4 553.8 M1505.0 554.3L1502.8 567.6 M1511.6 535.9L1509.2 549.0 M1509.7 549.5L1508.7 557.0 M1508.7 556.9L1507.0 565.1 M1514.8 532.9L1513.3 538.6 M1513.9 539.2L1513.1 544.0 M1513.2 544.1L1512.2 547.5 M1512.6 548.0L1511.2 561.4 M1510.6 562.1L1509.5 571.0 M1517.0 534.5L1516.0 539.6 M1515.6 544.7L1513.5 556.1 M1513.6 558.8L1513.1 562.8 M1512.9 564.0L1511.0 574.2 M1519.4 539.8L1517.7 550.9 M1516.4 561.1L1515.3 572.1 M1514.7 573.4L1513.9 576.8 M1522.6 539.2L1521.1 548.8 M1520.8 551.5L1520.8 555.0 M1520.4 554.6L1519.5 558.2 M1518.7 566.4L1518.6 571.2 M1518.1 570.7L1517.4 578.7 M1526.8 532.0L1526.3 540.1 M1523.8 553.7L1523.0 559.7 M1522.2 564.4L1521.2 569.7 M1527.7 540.2L1526.7 543.1 M1527.2 543.6L1525.8 556.7 M1524.8 560.7L1523.4 573.5 M1529.8 538.1L1528.8 549.4 M1528.3 548.8L1526.6 562.0 M1526.4 561.8L1524.9 573.6 M1532.4 545.3L1531.0 550.7 M1536.4 545.0L1535.6 552.4 M1535.4 552.2L1533.4 564.9 M1539.3 540.2L1537.7 553.1 M1537.5 552.9L1536.8 558.4 M1541.9 544.9L1541.4 549.2 M1541.0 551.0L1539.9 560.7 M1539.7 560.5L1539.6 564.5 M1545.4 547.3L1544.3 557.3 M1546.3 554.6L1545.8 558.5 M1498.2 545.1L1505.1 534.2 M1498.5 548.4L1502.2 542.5 M1499.1 551.2L1504.9 541.5 M1505.5 542.1L1513.1 531.1 M1499.8 555.4L1506.7 546.1 M1507.2 544.7L1509.2 542.4 M1504.2 554.1L1505.9 551.3 M1508.1 548.6L1511.3 545.4 M1509.9 555.8L1517.0 545.9 M1510.6 559.1L1515.5 552.7 M1514.4 559.4L1516.4 555.7 M1511.7 565.7L1519.0 555.4 M1497.3 551.6L1506.0 557.8 M1510.7 555.3L1515.0 558.3 M1495.9 542.6L1506.2 549.6 M1501.2 543.6L1510.5 550.0 M1515.0 553.3L1518.1 555.4 M1502.4 542.8L1512.3 549.7 M1512.0 549.5L1518.8 554.1 M1504.2 540.1L1511.4 545.3 M1506.3 535.0L1514.9 541.1 M1514.4 540.6L1517.4 542.6 M1593.4 845.8L1600.4 847.3 M1592.5 848.8L1602.8 850.9 M1582.1 849.5L1592.9 851.7 M1579.6 852.6L1592.6 855.3 M1580.9 855.3L1590.0 856.6 M1590.3 856.9L1603.2 859.1 M1599.2 861.0L1605.6 862.1 M1590.4 863.1L1603.5 865.3 M1579.1 863.2L1583.3 864.1 M1583.1 863.9L1596.1 866.4 M1600.9 867.0L1605.3 868.2 M1585.4 866.4L1590.8 866.9 M1591.4 867.4L1605.4 870.3 M1578.0 866.8L1581.1 867.3 M1598.4 870.4L1605.3 871.9 M1579.5 868.9L1586.3 869.8 M1586.7 870.2L1599.1 872.0 M1586.0 872.7L1597.1 875.0 M1581.0 875.5L1586.9 877.0 M1590.8 880.8L1602.4 883.0 M1580.8 882.6L1594.5 885.4 M1586.7 886.0L1594.4 887.0 M1594.8 887.5L1600.2 888.7 M1579.1 862.5L1577.7 871.6 M1586.0 846.9L1583.6 858.7 M1583.9 859.0L1582.7 865.0 M1588.3 850.3L1587.5 853.0 M1587.1 857.1L1585.2 869.6 M1582.2 884.6L1582.0 888.6 M1593.4 844.1L1592.5 848.4 M1592.6 848.5L1591.6 851.8 M1591.7 853.7L1590.9 856.7 M1591.1 856.9L1589.3 867.3 M1588.6 871.4L1587.2 875.9 M1587.7 876.4L1586.7 880.7 M1586.9 880.9L1585.2 890.9 M1595.6 851.7L1595.3 856.5 M1592.8 867.9L1591.4 879.0 M1590.9 878.6L1589.3 888.0 M1598.9 852.4L1597.0 866.6 M1596.5 866.2L1595.2 874.5 M1595.1 874.3L1592.5 887.7 M1601.7 848.2L1600.4 858.2 M1595.5 882.9L1594.6 890.8 M1599.3 871.7L1598.0 878.4 M1598.1 878.5L1596.0 888.0 M1604.4 855.7L1602.2 868.8 M1601.1 874.1L1598.5 885.8 M1604.5 865.9L1604.0 869.0 M1603.3 872.9L1602.7 876.2 M1602.4 878.2L1601.2 885.8 M1352.5 187.1L1356.4 189.9 M1346.3 185.2L1352.7 189.7 M1345.1 194.3L1351.3 198.5 M1344.0 198.4L1347.4 200.7 M1351.9 183.6L1349.7 185.5 M1354.3 262.3L1354.2 266.0 M1545.5 320.1L1553.0 320.8 M1553.1 320.8L1563.7 322.1 M1552.5 322.8L1559.7 323.2 M1560.0 323.5L1564.9 323.9 M1538.5 325.6L1544.7 325.6 M1545.3 326.2L1551.4 326.3 M1551.9 326.8L1561.7 328.1 M1535.3 329.6L1538.9 329.9 M1538.9 330.0L1546.6 330.7 M1546.5 330.6L1551.9 331.6 M1551.3 331.0L1554.8 331.4 M1544.5 318.5L1544.6 322.1 M1547.6 325.1L1547.3 330.1 M1557.2 323.4L1557.0 327.1" fill="none" stroke="#474b54" stroke-width=".8"/>
<path d="M1340.0 252.7 L1350.1 250.2 L1390.6 240.9 L1496.9 257.8 L1536.6 259.0 L1610.0 259.5 M1488.5 110.1 L1500.3 121.9 L1509.6 150.6 L1511.3 201.2 L1497.8 257.8 M1536.6 259.0 L1534.1 285.6 L1533.2 322.7 L1535.7 337.9 L1560.2 353.1 L1559.4 370.0 L1545.0 390.2 L1530.7 391.9 L1502.0 419.9 M1442.9 419.9 L1464.0 411.3 L1491.9 419.9 M1610.0 190.3 L1580.5 193.7 L1589.7 208.0 L1596.5 235.0 L1610.0 236.7 M1340.0 449.8 L1350.1 454.0 L1374.6 465.0 L1376.3 456.5 L1385.6 451.5 L1389.8 440.5 L1407.5 441.0 L1410.0 448.1 L1420.2 451.5 L1415.9 487.7 L1428.6 508.0 L1431.1 531.6 L1436.2 556.9 L1435.3 602.5 L1428.6 612.6 L1431.1 626.1 L1454.7 658.2 L1452.2 695.3 L1448.0 712.2 L1461.5 719.9 L1475.0 725.7 M1410.0 442.2 L1422.7 430.4 L1464.0 411.8 L1488.5 420.2 L1501.2 417.7 L1523.1 400.0 L1527.3 396.6 M1501.2 417.7 L1502.8 425.3 L1510.4 427.0 L1520.6 438.8 L1518.9 452.3 L1507.1 481.0 L1507.9 491.1 L1514.7 504.6 L1516.3 526.6 L1513.0 538.4 L1504.5 551.9 L1499.5 582.2 M1340.0 526.6 L1350.1 532.5 L1395.7 556.9 L1449.7 577.2 L1513.8 585.6 L1530.7 582.2 L1544.2 575.5 L1567.8 550.2 L1610.0 537.5 M1544.2 575.5 L1567.8 619.4 L1583.0 637.9 L1594.8 641.3 L1598.2 646.4 L1597.3 658.2 L1601.6 683.5 L1579.6 708.8 L1579.6 719.9 M1594.8 641.3 L1610.0 643.8 M1397.4 719.9 L1397.4 686.9 L1448.8 697.8 M1397.4 686.6 L1395.7 757.5 L1398.2 840.2 M1449.7 698.4 L1448.0 711.9 L1508.7 744.0 L1534.1 732.2 L1557.7 723.7 L1574.6 725.4 L1579.6 720.4 L1578.8 709.4 L1599.9 690.0 L1603.2 686.6 M1534.1 732.2 L1540.8 736.4 L1583.0 774.4 L1586.4 798.0 L1610.0 795.5 M1586.4 798.0 L1589.7 818.2 L1598.2 845.2 M1340.0 840.2 L1350.1 839.3 L1360.2 836.8 L1375.4 826.7 L1384.7 838.5 L1398.2 841.0 L1444.6 857.1 L1510.4 880.5 L1525.6 885.7 M1384.7 838.5 L1390.6 856.2 L1351.8 885.4 L1345.1 900.1 M1445.6 857.6 L1430.1 875.5 L1431.8 881.0 L1405.5 894.5 L1402.8 900.1 M1572.0 840.2 L1568.7 899.2 M1525.6 882.4 L1556.0 880.7 L1569.5 883.2" fill="none" stroke="#a2520c" stroke-width="2.9" stroke-linejoin="round"/>
<path d="M1567.8 108.4 L1610.0 148.9" fill="none" stroke="#5a2c05" stroke-width="4.6"/>
<path d="M1567.8 108.4 L1610.0 148.9" fill="none" stroke="#a2520c" stroke-width="3"/>
<path d="M1340.0 380.1 L1350.1 378.4 L1410.9 370.0 L1458.1 369.2 L1473.3 363.2 L1507.1 326.1 L1534.1 323.6 L1549.2 327.0 L1610.0 316.0" fill="none" stroke="#4a2404" stroke-width="6.4" stroke-linejoin="round"/>
<path d="M1340.0 380.1 L1350.1 378.4 L1410.9 370.0 L1458.1 369.2 L1473.3 363.2 L1507.1 326.1 L1534.1 323.6 L1549.2 327.0 L1610.0 316.0" fill="none" stroke="#a2520c" stroke-width="4.2" stroke-linejoin="round"/>
<path d="M1340.0 327.8 L1350.1 325.3 L1387.2 316.0 L1427.7 317.7 L1442.9 322.7 L1454.7 327.0 L1464.9 326.1 L1483.4 319.4 L1534.1 311.8 L1576.2 304.2 L1610.0 299.1 M1340.0 133.7 L1350.1 125.3 L1368.7 110.1 L1371.2 108.4 M1340.0 777.7 L1350.1 778.6 L1373.7 781.1 L1397.4 787.0 L1441.2 808.1 L1478.4 828.4 L1491.9 838.5 L1508.7 855.4 L1525.6 867.2 L1542.5 884.1 L1557.7 899.2" fill="none" stroke="#8a8a8a" stroke-width="3.6" stroke-linejoin="round"/>
<path d="M1340.0 327.8 L1350.1 325.3 L1387.2 316.0 L1427.7 317.7 L1442.9 322.7 L1454.7 327.0 L1464.9 326.1 L1483.4 319.4 L1534.1 311.8 L1576.2 304.2 L1610.0 299.1 M1340.0 133.7 L1350.1 125.3 L1368.7 110.1 L1371.2 108.4 M1340.0 777.7 L1350.1 778.6 L1373.7 781.1 L1397.4 787.0 L1441.2 808.1 L1478.4 828.4 L1491.9 838.5 L1508.7 855.4 L1525.6 867.2 L1542.5 884.1 L1557.7 899.2" fill="none" stroke="#fff" stroke-width="2" stroke-dasharray="4.300 5.100" stroke-linecap="round" stroke-linejoin="round"/>
<path d="M1340.0 217.3 L1350.1 209.7 L1421.0 155.7 L1463.2 132.9 L1488.5 108.4 M1340.0 718.7 L1350.1 722.1 L1397.4 737.2 L1475.0 784.5 L1510.4 813.2 L1574.6 836.8 L1610.0 851.2" fill="none" stroke="#5aa800" stroke-width="7.4" stroke-linejoin="round"/>
<path d="M1340.0 217.3 L1350.1 209.7 L1421.0 155.7 L1463.2 132.9 L1488.5 108.4 M1340.0 718.7 L1350.1 722.1 L1397.4 737.2 L1475.0 784.5 L1510.4 813.2 L1574.6 836.8 L1610.0 851.2" fill="none" stroke="#ffff00" stroke-width="3.1" stroke-linejoin="round"/>
<rect x="690" y="113" width="660" height="774" fill="#0000ff"/><ellipse cx="986" cy="887" rx="8" ry="5" fill="#0000ff"/>
<g clip-path="none"><g filter="url(#blb)"><ellipse cx="1000" cy="480" rx="130" ry="120" fill="#2c00d4" opacity="0.6"/><ellipse cx="990" cy="470" rx="90" ry="85" fill="#4800b8" opacity="0.6"/><ellipse cx="1005" cy="468" rx="64" ry="58" fill="#7800a0" opacity="0.65"/><ellipse cx="1117" cy="727" rx="11" ry="11" fill="#4000c8" opacity="0.22"/><ellipse cx="1056" cy="796" rx="12" ry="11" fill="#4000c8" opacity="0.22"/><ellipse cx="890" cy="506" rx="8" ry="10" fill="#4000c8" opacity="0.36"/><ellipse cx="951" cy="478" rx="12" ry="9" fill="#4000c8" opacity="0.44"/><ellipse cx="1005" cy="558" rx="13" ry="12" fill="#4000c8" opacity="0.4"/><ellipse cx="1147" cy="349" rx="8" ry="10" fill="#4000c8" opacity="0.25"/><ellipse cx="926" cy="511" rx="13" ry="10" fill="#4000c8" opacity="0.4"/><ellipse cx="1156" cy="762" rx="9" ry="14" fill="#4000c8" opacity="0.22"/><ellipse cx="818" cy="571" rx="10" ry="11" fill="#4000c8" opacity="0.25"/><ellipse cx="1016" cy="552" rx="12" ry="9" fill="#4000c8" opacity="0.41"/><ellipse cx="1019" cy="399" rx="13" ry="13" fill="#4000c8" opacity="0.4"/><ellipse cx="1008" cy="230" rx="11" ry="12" fill="#4000c8" opacity="0.22"/><ellipse cx="1123" cy="641" rx="12" ry="9" fill="#4000c8" opacity="0.25"/><ellipse cx="1278" cy="350" rx="10" ry="10" fill="#4000c8" opacity="0.22"/><ellipse cx="859" cy="559" rx="13" ry="10" fill="#4000c8" opacity="0.3"/><ellipse cx="1065" cy="522" rx="12" ry="14" fill="#4000c8" opacity="0.4"/><ellipse cx="826" cy="515" rx="11" ry="12" fill="#4000c8" opacity="0.28"/><ellipse cx="1036" cy="733" rx="11" ry="12" fill="#4000c8" opacity="0.22"/><ellipse cx="1039" cy="601" rx="10" ry="14" fill="#4000c8" opacity="0.34"/><ellipse cx="885" cy="693" rx="10" ry="9" fill="#4000c8" opacity="0.22"/><ellipse cx="1252" cy="631" rx="12" ry="10" fill="#4000c8" opacity="0.22"/><ellipse cx="908" cy="284" rx="12" ry="14" fill="#4000c8" opacity="0.23"/><ellipse cx="1195" cy="457" rx="12" ry="11" fill="#4000c8" opacity="0.26"/><ellipse cx="920" cy="598" rx="12" ry="9" fill="#4000c8" opacity="0.32"/><ellipse cx="1246" cy="636" rx="12" ry="11" fill="#4000c8" opacity="0.22"/><ellipse cx="1026" cy="464" rx="9" ry="10" fill="#4000c8" opacity="0.46"/><ellipse cx="920" cy="559" rx="8" ry="10" fill="#4000c8" opacity="0.36"/><ellipse cx="996" cy="322" rx="9" ry="14" fill="#4000c8" opacity="0.3"/><ellipse cx="761" cy="467" rx="8" ry="9" fill="#4000c8" opacity="0.22"/><ellipse cx="1141" cy="260" rx="12" ry="12" fill="#4000c8" opacity="0.22"/><ellipse cx="823" cy="608" rx="12" ry="10" fill="#4000c8" opacity="0.23"/><ellipse cx="882" cy="482" rx="12" ry="8" fill="#4000c8" opacity="0.35"/><ellipse cx="853" cy="134" rx="8" ry="12" fill="#4000c8" opacity="0.22"/><ellipse cx="819" cy="257" rx="11" ry="10" fill="#4000c8" opacity="0.22"/><ellipse cx="1067" cy="461" rx="8" ry="9" fill="#4000c8" opacity="0.41"/><ellipse cx="1161" cy="538" rx="9" ry="13" fill="#4000c8" opacity="0.29"/><ellipse cx="956" cy="439" rx="11" ry="10" fill="#4000c8" opacity="0.43"/><ellipse cx="894" cy="514" rx="9" ry="9" fill="#4000c8" opacity="0.36"/><ellipse cx="830" cy="690" rx="11" ry="8" fill="#4000c8" opacity="0.22"/><ellipse cx="926" cy="184" rx="12" ry="13" fill="#4000c8" opacity="0.22"/><ellipse cx="1167" cy="519" rx="8" ry="13" fill="#4000c8" opacity="0.29"/><ellipse cx="1107" cy="742" rx="9" ry="12" fill="#4000c8" opacity="0.22"/><ellipse cx="983" cy="554" rx="10" ry="10" fill="#4000c8" opacity="0.4"/><ellipse cx="1102" cy="429" rx="11" ry="11" fill="#4000c8" opacity="0.36"/><ellipse cx="1065" cy="486" rx="11" ry="11" fill="#4000c8" opacity="0.42"/><ellipse cx="914" cy="748" rx="11" ry="11" fill="#4000c8" opacity="0.22"/><ellipse cx="1254" cy="628" rx="13" ry="10" fill="#4000c8" opacity="0.22"/><ellipse cx="1047" cy="551" rx="8" ry="13" fill="#4000c8" opacity="0.39"/><ellipse cx="1010" cy="330" rx="11" ry="8" fill="#4000c8" opacity="0.31"/><ellipse cx="900" cy="369" rx="11" ry="10" fill="#4000c8" opacity="0.31"/><ellipse cx="913" cy="578" rx="8" ry="11" fill="#4000c8" opacity="0.34"/><ellipse cx="1004" cy="767" rx="12" ry="12" fill="#4000c8" opacity="0.22"/><ellipse cx="894" cy="543" rx="10" ry="11" fill="#4000c8" opacity="0.35"/><ellipse cx="739" cy="198" rx="8" ry="11" fill="#4000c8" opacity="0.22"/><ellipse cx="762" cy="523" rx="12" ry="13" fill="#4000c8" opacity="0.22"/><ellipse cx="823" cy="311" rx="11" ry="13" fill="#4000c8" opacity="0.22"/><ellipse cx="928" cy="273" rx="9" ry="14" fill="#4000c8" opacity="0.23"/><ellipse cx="844" cy="660" rx="12" ry="14" fill="#4000c8" opacity="0.22"/><ellipse cx="1017" cy="509" rx="10" ry="10" fill="#4000c8" opacity="0.46"/><ellipse cx="935" cy="568" rx="11" ry="8" fill="#4000c8" opacity="0.36"/><ellipse cx="992" cy="326" rx="9" ry="14" fill="#4000c8" opacity="0.31"/><ellipse cx="971" cy="403" rx="10" ry="12" fill="#4000c8" opacity="0.4"/><ellipse cx="951" cy="393" rx="13" ry="10" fill="#4000c8" opacity="0.38"/><ellipse cx="992" cy="829" rx="9" ry="12" fill="#4000c8" opacity="0.22"/><ellipse cx="1063" cy="722" rx="9" ry="10" fill="#4000c8" opacity="0.22"/><ellipse cx="1157" cy="443" rx="10" ry="12" fill="#4000c8" opacity="0.3"/><ellipse cx="982" cy="610" rx="10" ry="10" fill="#4000c8" opacity="0.34"/><ellipse cx="1267" cy="574" rx="13" ry="12" fill="#4000c8" opacity="0.22"/><ellipse cx="1176" cy="533" rx="8" ry="12" fill="#4000c8" opacity="0.27"/><ellipse cx="966" cy="394" rx="8" ry="11" fill="#4000c8" opacity="0.38"/><ellipse cx="1107" cy="589" rx="10" ry="13" fill="#4000c8" opacity="0.31"/><ellipse cx="945" cy="575" rx="12" ry="13" fill="#4000c8" opacity="0.36"/><ellipse cx="953" cy="500" rx="9" ry="10" fill="#4000c8" opacity="0.44"/><ellipse cx="899" cy="472" rx="12" ry="13" fill="#4000c8" opacity="0.37"/><ellipse cx="1277" cy="355" rx="8" ry="11" fill="#4000c8" opacity="0.22"/><ellipse cx="1281" cy="681" rx="12" ry="13" fill="#4000c8" opacity="0.22"/><ellipse cx="1020" cy="564" rx="12" ry="12" fill="#4000c8" opacity="0.39"/><ellipse cx="877" cy="382" rx="12" ry="10" fill="#4000c8" opacity="0.3"/><ellipse cx="983" cy="663" rx="9" ry="12" fill="#4000c8" opacity="0.27"/><ellipse cx="1044" cy="470" rx="8" ry="11" fill="#4000c8" opacity="0.44"/><ellipse cx="957" cy="414" rx="9" ry="8" fill="#4000c8" opacity="0.4"/><ellipse cx="1171" cy="555" rx="11" ry="12" fill="#4000c8" opacity="0.27"/><ellipse cx="1038" cy="575" rx="13" ry="11" fill="#4000c8" opacity="0.37"/><ellipse cx="807" cy="648" rx="12" ry="11" fill="#4000c8" opacity="0.22"/><ellipse cx="1248" cy="656" rx="9" ry="8" fill="#4000c8" opacity="0.22"/><ellipse cx="889" cy="673" rx="11" ry="9" fill="#4000c8" opacity="0.22"/><ellipse cx="956" cy="324" rx="9" ry="13" fill="#4000c8" opacity="0.3"/><ellipse cx="1114" cy="173" rx="11" ry="9" fill="#4000c8" opacity="0.22"/><ellipse cx="1056" cy="159" rx="11" ry="13" fill="#4000c8" opacity="0.22"/><ellipse cx="1147" cy="479" rx="13" ry="14" fill="#4000c8" opacity="0.32"/><ellipse cx="1006" cy="486" rx="10" ry="12" fill="#4000c8" opacity="0.49"/><ellipse cx="803" cy="337" rx="11" ry="9" fill="#4000c8" opacity="0.22"/><ellipse cx="1169" cy="424" rx="12" ry="9" fill="#4000c8" opacity="0.28"/><ellipse cx="1191" cy="507" rx="12" ry="12" fill="#4000c8" opacity="0.26"/><ellipse cx="1105" cy="405" rx="8" ry="10" fill="#4000c8" opacity="0.34"/><ellipse cx="1081" cy="695" rx="12" ry="10" fill="#4000c8" opacity="0.22"/><ellipse cx="1024" cy="538" rx="10" ry="11" fill="#4000c8" opacity="0.42"/><ellipse cx="1219" cy="550" rx="9" ry="9" fill="#4000c8" opacity="0.22"/><ellipse cx="1164" cy="422" rx="12" ry="11" fill="#4000c8" opacity="0.28"/><ellipse cx="1080" cy="595" rx="10" ry="12" fill="#4000c8" opacity="0.32"/><ellipse cx="1033" cy="237" rx="11" ry="10" fill="#4000c8" opacity="0.22"/><ellipse cx="868" cy="578" rx="10" ry="10" fill="#4000c8" opacity="0.29"/><ellipse cx="838" cy="467" rx="8" ry="13" fill="#4000c8" opacity="0.3"/><ellipse cx="769" cy="356" rx="12" ry="12" fill="#4000c8" opacity="0.22"/><ellipse cx="1146" cy="503" rx="10" ry="8" fill="#4000c8" opacity="0.32"/><ellipse cx="899" cy="323" rx="11" ry="14" fill="#4000c8" opacity="0.27"/><ellipse cx="1035" cy="622" rx="12" ry="13" fill="#4000c8" opacity="0.32"/><ellipse cx="950" cy="516" rx="10" ry="13" fill="#4000c8" opacity="0.42"/><ellipse cx="833" cy="510" rx="10" ry="12" fill="#4000c8" opacity="0.29"/><ellipse cx="812" cy="363" rx="12" ry="13" fill="#4000c8" opacity="0.22"/><ellipse cx="920" cy="599" rx="12" ry="13" fill="#4000c8" opacity="0.32"/><ellipse cx="1090" cy="462" rx="12" ry="13" fill="#4000c8" opacity="0.39"/><ellipse cx="1114" cy="576" rx="11" ry="9" fill="#4000c8" opacity="0.31"/><ellipse cx="1057" cy="397" rx="11" ry="10" fill="#4000c8" opacity="0.37"/><ellipse cx="1020" cy="620" rx="10" ry="12" fill="#4000c8" opacity="0.32"/><ellipse cx="1046" cy="756" rx="10" ry="12" fill="#4000c8" opacity="0.22"/><ellipse cx="934" cy="590" rx="9" ry="8" fill="#4000c8" opacity="0.34"/><ellipse cx="949" cy="349" rx="9" ry="13" fill="#4000c8" opacity="0.32"/><ellipse cx="983" cy="482" rx="12" ry="12" fill="#4000c8" opacity="0.48"/><ellipse cx="834" cy="577" rx="13" ry="10" fill="#4000c8" opacity="0.26"/><ellipse cx="860" cy="333" rx="10" ry="10" fill="#4000c8" opacity="0.25"/><ellipse cx="1007" cy="276" rx="10" ry="11" fill="#4000c8" opacity="0.24"/><ellipse cx="1044" cy="797" rx="8" ry="12" fill="#4000c8" opacity="0.22"/><ellipse cx="898" cy="543" rx="11" ry="11" fill="#4000c8" opacity="0.35"/><ellipse cx="1149" cy="609" rx="9" ry="13" fill="#4000c8" opacity="0.25"/><ellipse cx="938" cy="640" rx="9" ry="8" fill="#4000c8" opacity="0.29"/><ellipse cx="1033" cy="597" rx="11" ry="13" fill="#4000c8" opacity="0.35"/><ellipse cx="1013" cy="589" rx="11" ry="9" fill="#4000c8" opacity="0.36"/><ellipse cx="790" cy="667" rx="9" ry="12" fill="#4000c8" opacity="0.22"/><ellipse cx="939" cy="493" rx="9" ry="12" fill="#4000c8" opacity="0.42"/><ellipse cx="1083" cy="573" rx="11" ry="13" fill="#4000c8" opacity="0.34"/><ellipse cx="780" cy="479" rx="8" ry="10" fill="#4000c8" opacity="0.23"/><ellipse cx="862" cy="842" rx="10" ry="13" fill="#4000c8" opacity="0.22"/><ellipse cx="1172" cy="551" rx="12" ry="13" fill="#4000c8" opacity="0.27"/><ellipse cx="917" cy="460" rx="13" ry="8" fill="#4000c8" opacity="0.39"/><ellipse cx="1253" cy="447" rx="12" ry="11" fill="#4000c8" opacity="0.22"/><ellipse cx="1070" cy="639" rx="11" ry="12" fill="#4000c8" opacity="0.28"/><ellipse cx="793" cy="700" rx="8" ry="10" fill="#4000c8" opacity="0.22"/><ellipse cx="1112" cy="589" rx="12" ry="13" fill="#4000c8" opacity="0.3"/><ellipse cx="1076" cy="624" rx="9" ry="12" fill="#4000c8" opacity="0.3"/><ellipse cx="898" cy="552" rx="10" ry="13" fill="#4000c8" opacity="0.34"/><ellipse cx="795" cy="625" rx="11" ry="11" fill="#4000c8" opacity="0.22"/><ellipse cx="866" cy="456" rx="9" ry="11" fill="#4000c8" opacity="0.33"/><ellipse cx="1250" cy="700" rx="12" ry="12" fill="#3800d0" opacity="0.35"/><ellipse cx="1275" cy="760" rx="12" ry="12" fill="#3800d0" opacity="0.35"/><ellipse cx="1300" cy="735" rx="12" ry="12" fill="#3800d0" opacity="0.35"/><ellipse cx="1195" cy="770" rx="12" ry="12" fill="#3800d0" opacity="0.35"/><ellipse cx="1165" cy="740" rx="12" ry="12" fill="#3800d0" opacity="0.35"/><ellipse cx="1270" cy="715" rx="12" ry="12" fill="#3800d0" opacity="0.35"/><ellipse cx="1305" cy="705" rx="12" ry="12" fill="#3800d0" opacity="0.35"/><ellipse cx="1225" cy="725" rx="12" ry="12" fill="#3800d0" opacity="0.35"/><ellipse cx="795" cy="790" rx="12" ry="12" fill="#3800d0" opacity="0.35"/><ellipse cx="775" cy="560" rx="12" ry="12" fill="#3800d0" opacity="0.35"/><ellipse cx="985" cy="840" rx="12" ry="12" fill="#3800d0" opacity="0.35"/><ellipse cx="945" cy="855" rx="12" ry="12" fill="#3800d0" opacity="0.35"/><ellipse cx="1150" cy="555" rx="12" ry="12" fill="#3800d0" opacity="0.35"/><ellipse cx="1215" cy="560" rx="12" ry="12" fill="#3800d0" opacity="0.35"/><ellipse cx="1260" cy="185" rx="12" ry="12" fill="#3800d0" opacity="0.35"/><ellipse cx="1330" cy="200" rx="12" ry="12" fill="#3800d0" opacity="0.35"/><ellipse cx="1170" cy="300" rx="12" ry="12" fill="#3800d0" opacity="0.35"/><ellipse cx="1240" cy="300" rx="12" ry="12" fill="#3800d0" opacity="0.35"/><ellipse cx="1290" cy="130" rx="12" ry="12" fill="#3800d0" opacity="0.35"/><ellipse cx="900" cy="580" rx="30" ry="30" fill="#2800e8" opacity="0.4"/><ellipse cx="1100" cy="560" rx="40" ry="30" fill="#2400ea" opacity="0.35"/><ellipse cx="850" cy="600" rx="30" ry="40" fill="#2400ea" opacity="0.35"/><ellipse cx="790" cy="520" rx="14" ry="18" fill="#3800d8" opacity="0.6"/><ellipse cx="815" cy="500" rx="10" ry="10" fill="#3800d8" opacity="0.6"/><ellipse cx="955" cy="640" rx="14" ry="18" fill="#3c00d4" opacity="0.6"/><ellipse cx="1000" cy="610" rx="12" ry="14" fill="#3400da" opacity="0.6"/><ellipse cx="1130" cy="355" rx="12" ry="10" fill="#4000d0" opacity="0.6"/><ellipse cx="1228" cy="245" rx="14" ry="12" fill="#4400cc" opacity="0.7"/><ellipse cx="1215" cy="275" rx="20" ry="16" fill="#3400dc" opacity="0.6"/><ellipse cx="1310" cy="165" rx="10" ry="12" fill="#3c00d4" opacity="0.6"/><ellipse cx="1275" cy="640" rx="16" ry="14" fill="#3000e0" opacity="0.5"/><ellipse cx="1160" cy="740" rx="10" ry="8" fill="#3000e0" opacity="0.5"/><ellipse cx="905" cy="330" rx="9" ry="9" fill="#4800c8" opacity="0.6"/><ellipse cx="958" cy="359" rx="10" ry="10" fill="#5000c8" opacity="0.6"/><ellipse cx="1010" cy="585" rx="10" ry="10" fill="#4000d0" opacity="0.5"/><ellipse cx="940" cy="600" rx="10" ry="12" fill="#3800d8" opacity="0.5"/><ellipse cx="1080" cy="470" rx="12" ry="12" fill="#4400cc" opacity="0.5"/><ellipse cx="1110" cy="500" rx="12" ry="10" fill="#3800d8" opacity="0.5"/><ellipse cx="880" cy="400" rx="10" ry="10" fill="#3c00d4" opacity="0.5"/><ellipse cx="840" cy="560" rx="12" ry="12" fill="#3400dc" opacity="0.5"/><ellipse cx="918" cy="371" rx="10" ry="14" fill="#8000a8" opacity="0.8"/><ellipse cx="869" cy="453" rx="11" ry="11" fill="#7000b0" opacity="0.8"/><ellipse cx="951" cy="524" rx="13" ry="13" fill="#7800a8" opacity="0.7"/><ellipse cx="967" cy="447" rx="14" ry="12" fill="#a00080" opacity="0.8"/><ellipse cx="1000" cy="432" rx="28" ry="22" fill="#a80078" opacity="0.75"/><ellipse cx="975" cy="505" rx="16" ry="22" fill="#8000a0" opacity="0.6"/><ellipse cx="1093" cy="405" rx="9" ry="9" fill="#a00090" opacity="0.8"/><ellipse cx="1011" cy="409" rx="11" ry="10" fill="#c80058" opacity="0.85"/><ellipse cx="935" cy="420" rx="12" ry="10" fill="#9000a0" opacity="0.6"/><ellipse cx="1060" cy="520" rx="12" ry="10" fill="#8000a0" opacity="0.6"/><ellipse cx="1030" cy="570" rx="10" ry="9" fill="#7000b0" opacity="0.6"/><ellipse cx="970" cy="560" rx="9" ry="9" fill="#7800a8" opacity="0.6"/><ellipse cx="1034" cy="482" rx="31" ry="25" fill="#d80032" opacity="0.9"/><ellipse cx="1014" cy="468" rx="22" ry="20" fill="#e00028" opacity="0.8"/><ellipse cx="1048" cy="494" rx="18" ry="13" fill="#d00038" opacity="0.85"/><ellipse cx="1055" cy="417" rx="15" ry="10" fill="#c40050" opacity="0.95"/><ellipse cx="1074" cy="427" rx="13" ry="9" fill="#b80058" opacity="0.9"/><ellipse cx="991" cy="398" rx="11" ry="11" fill="#d8003c" opacity="1"/><ellipse cx="950" cy="467" rx="15" ry="10" fill="#f40020" opacity="1"/><ellipse cx="925" cy="448" rx="18" ry="20" fill="#ff0010" opacity="1"/><ellipse cx="928" cy="440" rx="12" ry="12" fill="#ff0010" opacity="1"/><ellipse cx="1008" cy="515" rx="12" ry="12" fill="#ec0024" opacity="1"/><ellipse cx="1002" cy="500" rx="11" ry="13" fill="#f00020" opacity="0.9"/><ellipse cx="992" cy="545" rx="9" ry="9" fill="#cc0048" opacity="1"/><ellipse cx="1017" cy="535" rx="8" ry="8" fill="#c40050" opacity="0.95"/><ellipse cx="1038" cy="551" rx="9" ry="9" fill="#b40060" opacity="0.95"/></g><g fill="#0c0e12"><ellipse cx="993" cy="462" rx="11.5" ry="12"/><circle cx="987.9" cy="472.7" r="1.4"/><circle cx="986.3" cy="452.3" r="1.3"/><circle cx="981.8" cy="459.3" r="1.6"/><circle cx="1003.7" cy="466.3" r="1.8"/><circle cx="1004.2" cy="464.8" r="1.7"/><circle cx="1003.4" cy="467.1" r="1.3"/><circle cx="982.8" cy="467.5" r="2.2"/><circle cx="1001.2" cy="470.4" r="1.5"/><circle cx="985.0" cy="453.4" r="2.3"/><circle cx="982.8" cy="456.4" r="1.7"/><circle cx="1004.4" cy="460.2" r="1.3"/><circle cx="1000.2" cy="452.7" r="1.5"/><circle cx="1000.1" cy="471.4" r="1.3"/><circle cx="988.9" cy="473.2" r="2.2"/><circle cx="997.8" cy="472.9" r="1.9"/><circle cx="985.6" cy="452.8" r="1.6"/><circle cx="982.0" cy="458.5" r="1.3"/><circle cx="1003.7" cy="466.4" r="1.4"/><circle cx="988.1" cy="451.1" r="1.7"/><circle cx="988.5" cy="473.0" r="1.9"/><circle cx="982.0" cy="465.5" r="1.6"/><circle cx="996.2" cy="450.5" r="2.0"/><ellipse cx="1014" cy="476" rx="9.5" ry="10.5"/><circle cx="1014.4" cy="486.5" r="1.9"/><circle cx="1004.6" cy="474.3" r="2.3"/><circle cx="1012.8" cy="465.6" r="1.5"/><circle cx="1023.4" cy="474.7" r="1.3"/><circle cx="1005.7" cy="481.2" r="2.1"/><circle cx="1019.5" cy="484.6" r="1.8"/><circle cx="1023.2" cy="478.6" r="2.0"/><circle cx="1014.9" cy="465.5" r="1.9"/><circle cx="1020.7" cy="468.6" r="1.6"/><circle cx="1010.8" cy="466.1" r="1.9"/><circle cx="1005.7" cy="470.9" r="1.7"/><circle cx="1019.1" cy="467.1" r="2.3"/><circle cx="1004.6" cy="477.7" r="2.0"/><circle cx="1022.8" cy="479.9" r="2.0"/><circle cx="1008.3" cy="467.6" r="2.4"/><circle cx="1018.1" cy="466.6" r="1.5"/><circle cx="1006.8" cy="482.9" r="2.0"/><circle cx="1023.4" cy="477.5" r="1.8"/><circle cx="1018.7" cy="485.1" r="1.3"/><circle cx="1022.9" cy="479.8" r="2.1"/><circle cx="1020.5" cy="483.6" r="1.5"/><circle cx="1006.6" cy="482.6" r="2.2"/><ellipse cx="995" cy="484" rx="9.5" ry="13"/><circle cx="1003.3" cy="490.3" r="1.7"/><circle cx="986.0" cy="480.0" r="2.3"/><circle cx="999.0" cy="472.2" r="2.2"/><circle cx="993.3" cy="496.8" r="1.7"/><circle cx="989.0" cy="494.1" r="2.3"/><circle cx="1004.2" cy="480.6" r="1.4"/><circle cx="999.2" cy="495.6" r="1.5"/><circle cx="996.0" cy="496.9" r="1.8"/><circle cx="987.0" cy="477.1" r="1.5"/><circle cx="1004.5" cy="484.3" r="1.7"/><circle cx="988.5" cy="493.5" r="1.9"/><circle cx="1004.1" cy="480.2" r="2.0"/><circle cx="985.5" cy="482.7" r="1.9"/><circle cx="990.8" cy="472.4" r="1.3"/><circle cx="1002.7" cy="476.3" r="2.1"/><circle cx="1001.7" cy="474.8" r="2.2"/><circle cx="987.6" cy="492.1" r="1.7"/><circle cx="1002.6" cy="491.9" r="2.0"/><circle cx="1003.8" cy="489.0" r="1.3"/><circle cx="997.4" cy="496.6" r="1.4"/><circle cx="989.9" cy="495.0" r="1.3"/><circle cx="1004.5" cy="484.0" r="1.4"/><ellipse cx="1001" cy="474" rx="9" ry="10"/><circle cx="1008.2" cy="480.0" r="1.6"/><circle cx="1009.9" cy="475.6" r="2.2"/><circle cx="994.2" cy="467.4" r="1.4"/><circle cx="1000.9" cy="484.0" r="1.6"/><circle cx="995.1" cy="481.5" r="1.3"/><circle cx="1006.2" cy="465.9" r="2.4"/><circle cx="992.2" cy="476.1" r="1.8"/><circle cx="1008.7" cy="479.1" r="1.3"/><circle cx="996.1" cy="482.4" r="1.5"/><circle cx="1005.3" cy="465.2" r="1.4"/><circle cx="1009.9" cy="475.4" r="2.3"/><circle cx="992.1" cy="472.2" r="1.4"/><circle cx="992.3" cy="471.3" r="1.2"/><circle cx="992.1" cy="472.2" r="2.4"/><circle cx="1006.9" cy="466.4" r="2.0"/><circle cx="1000.4" cy="484.0" r="1.6"/><circle cx="1005.5" cy="482.7" r="2.1"/><circle cx="992.2" cy="472.0" r="2.1"/><circle cx="996.7" cy="482.8" r="1.5"/><circle cx="1004.4" cy="464.7" r="2.4"/><circle cx="1006.4" cy="466.0" r="2.2"/><circle cx="1004.7" cy="464.9" r="2.1"/></g><g fill="#5f7a98" stroke="#080a0d" stroke-width=".7"><ellipse cx="993.7" cy="467.2" rx="2.1" ry="1.2" transform="rotate(7 993.7 467.2)"/><ellipse cx="994.2" cy="457.3" rx="1.9" ry="1.7" transform="rotate(88 994.2 457.3)"/><ellipse cx="984.3" cy="465.1" rx="2.9" ry="2.1" transform="rotate(93 984.3 465.1)"/><ellipse cx="993.9" cy="462.5" rx="2.3" ry="1.5" transform="rotate(123 993.9 462.5)"/><ellipse cx="986.7" cy="455.5" rx="2.7" ry="1.6" transform="rotate(167 986.7 455.5)"/><ellipse cx="989.5" cy="467.4" rx="2.7" ry="1.3" transform="rotate(99 989.5 467.4)"/><ellipse cx="994.5" cy="454.5" rx="2.3" ry="1.4" transform="rotate(162 994.5 454.5)"/><ellipse cx="989.1" cy="469.1" rx="2.9" ry="1.6" transform="rotate(102 989.1 469.1)"/><ellipse cx="993.0" cy="461.1" rx="1.9" ry="2.1" transform="rotate(7 993.0 461.1)"/><ellipse cx="998.1" cy="469.5" rx="2.7" ry="1.3" transform="rotate(152 998.1 469.5)"/><ellipse cx="999.4" cy="461.2" rx="2.1" ry="1.7" transform="rotate(33 999.4 461.2)"/><ellipse cx="1000.7" cy="463.1" rx="2.6" ry="1.3" transform="rotate(35 1000.7 463.1)"/><ellipse cx="985.2" cy="465.6" rx="2.7" ry="1.4" transform="rotate(64 985.2 465.6)"/><ellipse cx="994.1" cy="467.0" rx="2.6" ry="1.5" transform="rotate(139 994.1 467.0)"/><ellipse cx="991.9" cy="462.7" rx="2.8" ry="1.5" transform="rotate(117 991.9 462.7)"/><ellipse cx="988.8" cy="454.9" rx="2.3" ry="1.9" transform="rotate(128 988.8 454.9)"/><ellipse cx="994.0" cy="463.1" rx="2.3" ry="2.0" transform="rotate(46 994.0 463.1)"/><ellipse cx="987.1" cy="457.0" rx="1.9" ry="1.3" transform="rotate(158 987.1 457.0)"/><ellipse cx="992.2" cy="456.4" rx="2.1" ry="1.7" transform="rotate(142 992.2 456.4)"/><ellipse cx="985.5" cy="462.9" rx="2.8" ry="1.3" transform="rotate(48 985.5 462.9)"/><ellipse cx="991.7" cy="469.8" rx="2.3" ry="1.7" transform="rotate(16 991.7 469.8)"/><ellipse cx="987.4" cy="464.2" rx="2.3" ry="1.7" transform="rotate(177 987.4 464.2)"/><ellipse cx="992.2" cy="467.1" rx="2.7" ry="1.7" transform="rotate(63 992.2 467.1)"/><ellipse cx="990.3" cy="453.5" rx="2.8" ry="1.4" transform="rotate(143 990.3 453.5)"/><ellipse cx="994.5" cy="460.7" rx="2.2" ry="1.6" transform="rotate(100 994.5 460.7)"/><ellipse cx="992.3" cy="462.3" rx="2.0" ry="1.3" transform="rotate(171 992.3 462.3)"/><ellipse cx="992.6" cy="463.2" rx="2.6" ry="2.0" transform="rotate(164 992.6 463.2)"/><ellipse cx="992.3" cy="460.8" rx="2.8" ry="2.1" transform="rotate(56 992.3 460.8)"/><ellipse cx="993.0" cy="461.0" rx="2.8" ry="1.3" transform="rotate(170 993.0 461.0)"/><ellipse cx="993.8" cy="460.6" rx="2.2" ry="1.7" transform="rotate(86 993.8 460.6)"/><ellipse cx="989.9" cy="463.7" rx="1.8" ry="1.5" transform="rotate(86 989.9 463.7)"/><ellipse cx="988.9" cy="460.5" rx="1.7" ry="1.5" transform="rotate(159 988.9 460.5)"/><ellipse cx="990.4" cy="471.4" rx="1.8" ry="2.0" transform="rotate(58 990.4 471.4)"/><ellipse cx="994.0" cy="461.8" rx="2.0" ry="1.2" transform="rotate(46 994.0 461.8)"/><ellipse cx="992.8" cy="463.3" rx="2.2" ry="2.0" transform="rotate(66 992.8 463.3)"/><ellipse cx="988.6" cy="465.0" rx="2.3" ry="1.6" transform="rotate(83 988.6 465.0)"/><ellipse cx="993.5" cy="462.3" rx="2.5" ry="1.6" transform="rotate(18 993.5 462.3)"/><ellipse cx="993.0" cy="462.2" rx="1.8" ry="1.4" transform="rotate(155 993.0 462.2)"/><ellipse cx="993.4" cy="461.5" rx="2.7" ry="1.6" transform="rotate(86 993.4 461.5)"/><ellipse cx="997.1" cy="461.8" rx="2.8" ry="1.8" transform="rotate(11 997.1 461.8)"/><ellipse cx="990.7" cy="461.6" rx="1.8" ry="1.3" transform="rotate(12 990.7 461.6)"/><ellipse cx="996.8" cy="470.6" rx="2.5" ry="1.7" transform="rotate(52 996.8 470.6)"/><ellipse cx="991.8" cy="466.9" rx="1.9" ry="1.5" transform="rotate(4 991.8 466.9)"/><ellipse cx="993.4" cy="462.0" rx="1.7" ry="1.7" transform="rotate(48 993.4 462.0)"/><ellipse cx="990.6" cy="461.8" rx="2.2" ry="1.8" transform="rotate(166 990.6 461.8)"/><ellipse cx="988.6" cy="464.1" rx="2.7" ry="1.6" transform="rotate(129 988.6 464.1)"/><ellipse cx="992.3" cy="464.1" rx="2.0" ry="1.4" transform="rotate(180 992.3 464.1)"/><ellipse cx="992.8" cy="460.6" rx="2.9" ry="2.1" transform="rotate(33 992.8 460.6)"/><ellipse cx="1019.0" cy="476.5" rx="2.8" ry="1.6" transform="rotate(14 1019.0 476.5)"/><ellipse cx="1019.9" cy="479.8" rx="2.7" ry="1.8" transform="rotate(72 1019.9 479.8)"/><ellipse cx="1009.4" cy="472.4" rx="1.8" ry="1.4" transform="rotate(68 1009.4 472.4)"/><ellipse cx="1012.0" cy="476.8" rx="2.9" ry="2.1" transform="rotate(140 1012.0 476.8)"/><ellipse cx="1013.9" cy="476.3" rx="2.8" ry="1.4" transform="rotate(46 1013.9 476.3)"/><ellipse cx="1017.1" cy="476.0" rx="2.3" ry="1.7" transform="rotate(51 1017.1 476.0)"/><ellipse cx="1014.1" cy="482.9" rx="1.8" ry="1.9" transform="rotate(36 1014.1 482.9)"/><ellipse cx="1013.7" cy="476.2" rx="1.7" ry="1.5" transform="rotate(59 1013.7 476.2)"/><ellipse cx="1020.7" cy="480.3" rx="2.7" ry="1.3" transform="rotate(152 1020.7 480.3)"/><ellipse cx="1012.0" cy="477.9" rx="2.9" ry="1.3" transform="rotate(158 1012.0 477.9)"/><ellipse cx="1013.8" cy="475.7" rx="2.7" ry="2.0" transform="rotate(160 1013.8 475.7)"/><ellipse cx="1008.9" cy="478.7" rx="2.3" ry="2.0" transform="rotate(129 1008.9 478.7)"/><ellipse cx="1008.0" cy="473.0" rx="1.7" ry="1.8" transform="rotate(174 1008.0 473.0)"/><ellipse cx="1019.0" cy="474.4" rx="1.8" ry="1.2" transform="rotate(163 1019.0 474.4)"/><ellipse cx="1013.5" cy="476.7" rx="2.7" ry="1.7" transform="rotate(160 1013.5 476.7)"/><ellipse cx="1018.3" cy="476.6" rx="2.0" ry="1.4" transform="rotate(116 1018.3 476.6)"/><ellipse cx="1015.8" cy="469.6" rx="2.3" ry="1.7" transform="rotate(168 1015.8 469.6)"/><ellipse cx="1008.1" cy="474.9" rx="2.3" ry="1.9" transform="rotate(67 1008.1 474.9)"/><ellipse cx="1014.6" cy="482.7" rx="2.0" ry="1.8" transform="rotate(117 1014.6 482.7)"/><ellipse cx="1010.9" cy="476.1" rx="2.3" ry="1.8" transform="rotate(11 1010.9 476.1)"/><ellipse cx="1010.1" cy="472.2" rx="1.8" ry="1.3" transform="rotate(65 1010.1 472.2)"/><ellipse cx="1010.8" cy="471.0" rx="2.4" ry="1.3" transform="rotate(123 1010.8 471.0)"/><ellipse cx="1016.0" cy="476.9" rx="2.5" ry="1.8" transform="rotate(172 1016.0 476.9)"/><ellipse cx="1008.3" cy="476.4" rx="2.0" ry="1.6" transform="rotate(30 1008.3 476.4)"/><ellipse cx="1018.4" cy="475.8" rx="2.1" ry="1.3" transform="rotate(121 1018.4 475.8)"/><ellipse cx="1017.7" cy="476.4" rx="2.7" ry="2.1" transform="rotate(115 1017.7 476.4)"/><ellipse cx="1017.1" cy="475.9" rx="2.8" ry="2.0" transform="rotate(19 1017.1 475.9)"/><ellipse cx="1013.0" cy="475.4" rx="2.3" ry="2.1" transform="rotate(33 1013.0 475.4)"/><ellipse cx="1009.9" cy="472.6" rx="2.0" ry="1.3" transform="rotate(93 1009.9 472.6)"/><ellipse cx="1014.8" cy="484.0" rx="2.3" ry="1.2" transform="rotate(0 1014.8 484.0)"/><ellipse cx="1019.2" cy="474.1" rx="2.2" ry="1.9" transform="rotate(106 1019.2 474.1)"/><ellipse cx="1012.6" cy="478.3" rx="2.7" ry="1.2" transform="rotate(86 1012.6 478.3)"/><ellipse cx="1014.5" cy="475.1" rx="2.8" ry="1.8" transform="rotate(74 1014.5 475.1)"/><ellipse cx="1014.0" cy="476.6" rx="2.2" ry="2.0" transform="rotate(19 1014.0 476.6)"/><ellipse cx="1011.8" cy="478.9" rx="2.0" ry="1.2" transform="rotate(26 1011.8 478.9)"/><ellipse cx="1019.1" cy="477.9" rx="2.5" ry="1.3" transform="rotate(68 1019.1 477.9)"/><ellipse cx="1011.7" cy="477.1" rx="2.6" ry="1.9" transform="rotate(109 1011.7 477.1)"/><ellipse cx="1018.9" cy="471.2" rx="2.5" ry="2.0" transform="rotate(141 1018.9 471.2)"/><ellipse cx="1008.5" cy="474.0" rx="1.8" ry="1.9" transform="rotate(115 1008.5 474.0)"/><ellipse cx="1013.2" cy="475.2" rx="2.7" ry="1.6" transform="rotate(140 1013.2 475.2)"/><ellipse cx="1016.7" cy="479.0" rx="2.1" ry="1.5" transform="rotate(167 1016.7 479.0)"/><ellipse cx="1013.7" cy="481.8" rx="2.1" ry="1.7" transform="rotate(100 1013.7 481.8)"/><ellipse cx="1017.8" cy="479.9" rx="1.8" ry="1.7" transform="rotate(127 1017.8 479.9)"/><ellipse cx="1010.5" cy="474.7" rx="2.1" ry="1.9" transform="rotate(109 1010.5 474.7)"/><ellipse cx="1015.0" cy="477.3" rx="1.8" ry="1.5" transform="rotate(23 1015.0 477.3)"/><ellipse cx="1012.7" cy="479.0" rx="2.7" ry="1.4" transform="rotate(5 1012.7 479.0)"/><ellipse cx="1014.0" cy="472.3" rx="2.2" ry="1.7" transform="rotate(96 1014.0 472.3)"/><ellipse cx="1013.2" cy="482.7" rx="2.3" ry="1.7" transform="rotate(92 1013.2 482.7)"/><ellipse cx="997.9" cy="488.0" rx="2.5" ry="2.0" transform="rotate(55 997.9 488.0)"/><ellipse cx="1001.1" cy="489.4" rx="2.2" ry="1.8" transform="rotate(110 1001.1 489.4)"/><ellipse cx="1001.6" cy="481.3" rx="2.7" ry="1.2" transform="rotate(8 1001.6 481.3)"/><ellipse cx="989.5" cy="487.8" rx="2.7" ry="2.1" transform="rotate(125 989.5 487.8)"/><ellipse cx="998.2" cy="484.0" rx="2.8" ry="1.9" transform="rotate(119 998.2 484.0)"/><ellipse cx="997.0" cy="483.5" rx="1.8" ry="1.3" transform="rotate(133 997.0 483.5)"/><ellipse cx="995.9" cy="483.8" rx="2.7" ry="1.8" transform="rotate(117 995.9 483.8)"/><ellipse cx="1000.4" cy="488.4" rx="1.7" ry="1.3" transform="rotate(145 1000.4 488.4)"/><ellipse cx="999.6" cy="480.6" rx="2.1" ry="1.3" transform="rotate(64 999.6 480.6)"/><ellipse cx="991.5" cy="483.1" rx="2.6" ry="1.3" transform="rotate(76 991.5 483.1)"/><ellipse cx="990.3" cy="483.0" rx="2.2" ry="1.4" transform="rotate(153 990.3 483.0)"/><ellipse cx="999.3" cy="484.0" rx="2.9" ry="1.5" transform="rotate(80 999.3 484.0)"/><ellipse cx="990.6" cy="476.3" rx="2.3" ry="1.4" transform="rotate(63 990.6 476.3)"/><ellipse cx="998.3" cy="484.8" rx="2.5" ry="1.2" transform="rotate(49 998.3 484.8)"/><ellipse cx="989.6" cy="484.1" rx="2.2" ry="1.4" transform="rotate(170 989.6 484.1)"/><ellipse cx="992.3" cy="485.9" rx="2.3" ry="1.8" transform="rotate(107 992.3 485.9)"/><ellipse cx="992.9" cy="487.3" rx="1.7" ry="1.5" transform="rotate(129 992.9 487.3)"/><ellipse cx="998.6" cy="486.3" rx="1.9" ry="1.9" transform="rotate(49 998.6 486.3)"/><ellipse cx="995.2" cy="486.4" rx="2.6" ry="1.5" transform="rotate(159 995.2 486.4)"/><ellipse cx="993.5" cy="484.1" rx="2.0" ry="1.6" transform="rotate(170 993.5 484.1)"/><ellipse cx="999.5" cy="486.3" rx="2.8" ry="1.2" transform="rotate(6 999.5 486.3)"/><ellipse cx="996.1" cy="483.7" rx="1.8" ry="1.3" transform="rotate(100 996.1 483.7)"/><ellipse cx="989.5" cy="486.4" rx="2.1" ry="1.3" transform="rotate(20 989.5 486.4)"/><ellipse cx="997.4" cy="482.5" rx="1.9" ry="2.0" transform="rotate(119 997.4 482.5)"/><ellipse cx="1000.3" cy="485.5" rx="2.2" ry="1.5" transform="rotate(84 1000.3 485.5)"/><ellipse cx="994.2" cy="484.4" rx="1.8" ry="1.3" transform="rotate(107 994.2 484.4)"/><ellipse cx="996.0" cy="483.6" rx="2.9" ry="1.4" transform="rotate(91 996.0 483.6)"/><ellipse cx="995.3" cy="480.6" rx="2.7" ry="1.3" transform="rotate(180 995.3 480.6)"/><ellipse cx="992.0" cy="484.7" rx="2.8" ry="1.4" transform="rotate(93 992.0 484.7)"/><ellipse cx="994.7" cy="478.8" rx="2.5" ry="1.4" transform="rotate(160 994.7 478.8)"/><ellipse cx="995.0" cy="483.6" rx="1.7" ry="1.3" transform="rotate(15 995.0 483.6)"/><ellipse cx="994.7" cy="492.2" rx="2.8" ry="1.5" transform="rotate(69 994.7 492.2)"/><ellipse cx="991.1" cy="493.1" rx="1.8" ry="1.9" transform="rotate(176 991.1 493.1)"/><ellipse cx="994.1" cy="486.8" rx="1.7" ry="1.9" transform="rotate(162 994.1 486.8)"/><ellipse cx="995.5" cy="483.8" rx="2.7" ry="1.3" transform="rotate(119 995.5 483.8)"/><ellipse cx="998.0" cy="482.8" rx="2.0" ry="1.6" transform="rotate(126 998.0 482.8)"/><ellipse cx="997.7" cy="488.1" rx="1.7" ry="2.0" transform="rotate(77 997.7 488.1)"/><ellipse cx="997.8" cy="476.3" rx="2.4" ry="1.5" transform="rotate(81 997.8 476.3)"/><ellipse cx="988.9" cy="486.1" rx="2.4" ry="1.7" transform="rotate(100 988.9 486.1)"/><ellipse cx="995.0" cy="481.3" rx="1.8" ry="1.2" transform="rotate(141 995.0 481.3)"/><ellipse cx="993.8" cy="483.5" rx="2.2" ry="1.3" transform="rotate(18 993.8 483.5)"/><ellipse cx="994.9" cy="484.9" rx="1.8" ry="1.6" transform="rotate(114 994.9 484.9)"/><ellipse cx="995.5" cy="485.3" rx="2.3" ry="2.0" transform="rotate(60 995.5 485.3)"/><ellipse cx="994.9" cy="474.6" rx="2.5" ry="1.3" transform="rotate(75 994.9 474.6)"/><ellipse cx="993.8" cy="490.0" rx="2.1" ry="1.9" transform="rotate(50 993.8 490.0)"/><ellipse cx="993.6" cy="484.8" rx="2.0" ry="1.5" transform="rotate(148 993.6 484.8)"/><ellipse cx="995.2" cy="484.7" rx="2.0" ry="1.4" transform="rotate(134 995.2 484.7)"/><ellipse cx="995.8" cy="492.9" rx="2.5" ry="2.1" transform="rotate(26 995.8 492.9)"/></g></g>
</svg>
<div class="a" style="left:382px;top:108px;width:1px;height:792px;background:#b4b4b4"></div><div class="a" style="left:375px;top:108px;width:7px;height:800px;background:#f0f0f0"></div>
<div class="a" style="left:380px;top:899px;width:1340px;height:1px;background:#a0a0a0"></div><div class="a" style="left:380px;top:900px;width:1340px;height:1px;background:#f0f0f0"></div>

<div class="frame" style="left:-60px;top:-60px;width:819px;height:905px;border-radius:7px;background:#dfe6f6;box-shadow:3px 5px 12px 2px rgba(0,0,0,.95);"></div>
<div class="frame" style="left:-60px;top:-60px;width:818px;height:904px;border-radius:6px;background:linear-gradient(90deg,#b9d1ea,#c4dcf6 60%,#bcd6f2);"></div>
<div class="frame" style="left:753px;top:108px;width:5px;height:98px;background:linear-gradient(#a8c0e0 0,#4444b4 6%,#5c5cbc 35%,#a4a4dc 75%,#c4c4ec 100%)"></div>
<div class="frame" style="left:753px;top:205px;width:5px;height:639px;background:linear-gradient(90deg,#2a2aa8,#0e0e9a 40%,#1414a0);border-radius:0 0 5px 0"></div>
<div class="frame" style="left:690px;top:839px;width:68px;height:5px;background:#1212a0;border-radius:0 0 5px 0"></div>
<div class="frame" style="left:640px;top:839px;width:50px;height:5px;background:linear-gradient(90deg,rgba(160,170,185,0),#a8b0c0 60%,#5a5ab0)"></div>
<div class="dlg" style="left:-60px;top:-5px;width:813px;height:844px;border-right:1px solid #59608e;border-bottom:1px solid #59608e;"></div>
<div class="pane" style="left:7px;top:35px;width:734px;height:735px;"></div>
<div class="tab" style="left:8px;top:10px;width:64px;height:25px"><svg class="a" style="left:11px;top:5px" width="21" height="16" viewBox="0 0 21 16">
<path d="M1.500 4 L8 1.500 L11 6 L4 9 Z" fill="#f4e040"/><path d="M2.500 7 L9 4.500 L11 8 L4 11 Z" fill="#4a78d0"/>
<path d="M1 10 L8 7 L11 13 L7 15 L1 12.500 Z" fill="#e83030"/>
<path d="M11.500 8.500 L18.500 0.800 L20.300 2.500 L13.500 10.500 Z" fill="#c98a3a"/>
<path d="M7.500 7 L13.500 12 L10 15.300 L5 10 Z" fill="#dba95c" stroke="#b98238" stroke-width=".6"/></svg><span style="left:36px;line-height:24px"><span style="letter-spacing:-0.445px">Stil</span></span></div>
<div class="tab sel" style="left:70px;top:7px;width:99px;height:29px"><svg class="a" style="left:13px;top:4px" width="22" height="16" viewBox="0 0 22 16">
<rect x="0.500" y="1.500" width="20" height="13" fill="#fdfdfd" stroke="#8a8a8a"/><rect x="0" y="1" width="2" height="14" fill="#9a9a9a"/>
<rect x="3" y="3" width="4" height="3" fill="#2a4f9a"/><rect x="11" y="3" width="4" height="3" fill="#2a4f9a"/>
<rect x="7" y="6" width="4" height="3" fill="#3a6fc0"/><rect x="15" y="6" width="4" height="3" fill="#f4e040"/>
<rect x="3" y="9" width="4" height="3" fill="#f4e040"/><rect x="15" y="10" width="4" height="3" fill="#2a4f9a"/>
<path d="M12.500 7.500 L19 0.500 L20.800 2.200 L14.500 9.500 Z" fill="#c98a3a"/>
<path d="M8.500 6 L14.500 11 L11 14.300 L6 9 Z" fill="#dba95c" stroke="#b98238" stroke-width=".6"/></svg><span style="left:38px;line-height:28px"><span style="letter-spacing:-0.010px">Färgkarta</span></span></div>
<div class="tab" style="left:168px;top:10px;width:128px;height:25px"><svg class="a" style="left:12px;top:3px" width="22" height="19" viewBox="0 0 22 19">
<defs><linearGradient id="gg123" x1="0" y1="0" x2="1" y2="1"><stop offset="0" stop-color="#3f5f8c"/><stop offset=".55" stop-color="#9fb2c8"/><stop offset="1" stop-color="#eef2f6"/></linearGradient></defs>
<rect x="1.500" y="1.500" width="19" height="12" fill="url(#gg123)" stroke="#8d949c"/>
<rect x="1" y="14" width="20" height="3.500" fill="#b4b8be"/><path d="M3 15.700h17" stroke="#7d838c" stroke-dasharray="1 1"/><rect x="0.300" y="0.500" width="1.600" height="17.500" fill="#8a8f96"/>
<rect x="2" y="14.500" width="2" height="2.500" fill="#3a5fa8"/></svg><span style="left:37px;line-height:24px"><span style="letter-spacing:-0.331px">Genomskinlighet</span></span></div>
<div class="tab" style="left:295px;top:10px;width:86px;height:25px"><svg class="a" style="left:13px;top:3px" width="19" height="19" viewBox="0 0 19 19">
<path d="M13.500 1.500 L16.500 4.500 L5 17.500 L2.500 15 Z" fill="#e6b24a" stroke="#b98a30" stroke-width=".5"/>
<path d="M4.500 3 L15.500 15.500 L13.500 17.500 L2.500 5.500 Z" fill="#d9a03a" stroke="#b07a20" stroke-width=".5"/>
<path d="M12 1 L16 0.500 L18 3.500 L16.500 6 L15 3.500Z" fill="#d4d4d4" stroke="#999" stroke-width=".5"/>
<path d="M0.800 3.500 L5.500 0.800 L7.500 3.500 L6 5 L4.500 4 L2.500 6Z" fill="#c0c0c0" stroke="#888" stroke-width=".5"/></svg><span style="left:37px;line-height:24px"><span style="letter-spacing:-0.241px">Allmänt</span></span></div>
<div class="tab" style="left:380px;top:10px;width:96px;height:25px"><svg class="a" style="left:13px;top:1px" width="20" height="20" viewBox="0 0 20 20">
<defs><linearGradient id="mg131" x1="0" y1="0" x2="1" y2="0"><stop offset="0" stop-color="#7fa9de"/><stop offset="1" stop-color="#5f8fd0"/></linearGradient></defs>
<circle cx="10" cy="10" r="9.200" fill="url(#mg131)" stroke="#5584c6" stroke-width=".6"/><rect x="8.700" y="7.500" width="2.500" height="9.500" fill="#fff"/>
<circle cx="10" cy="4.700" r="1.600" fill="#fff"/></svg><span style="left:37px;line-height:24px"><span style="letter-spacing:0.012px">Metadata</span></span></div>
<div class="tab" style="left:475px;top:10px;width:100px;height:25px"><svg class="a" style="left:13px;top:4px" width="22" height="15" viewBox="0 0 22 15">
<path d="M1 13.500 L4.500 5.500 L17.500 5.500 L21 13.500 Z" fill="#ececec" stroke="#8c8c8c" stroke-width=".9"/><path d="M7.500 5.500 L8.500 1.500 L13.500 1.500 L14.500 5.500" fill="#e4e4e4" stroke="#8c8c8c" stroke-width=".9"/>
<path d="M9.500 1 h3 v2 h-3z" fill="#aaa"/><path d="M4 9.500 h14" stroke="#c8c8c8"/><path d="M7 9v3M11 9v3M15 9v3" stroke="#9a9a9a"/></svg><span style="left:38px;line-height:24px"><span style="letter-spacing:-0.236px">Pyramider</span></span></div>
<div class="tab" style="left:574px;top:10px;width:97px;height:25px"><svg class="a" style="left:12px;top:3px" width="22" height="15" viewBox="0 0 22 15">
<rect x="1.500" y="1.500" width="19" height="12" fill="#f6f6f6" stroke="#a0a0a0"/><path d="M1 0.500 L1 14 M3.500 1 L3.500 13" stroke="#8a8a8a"/>
<path d="M4 4 L7 7 L10 5.500 L13 9 L16 8 L19.500 10.500" fill="none" stroke="#6a98d0" stroke-width="1.100"/></svg><span style="left:36px;line-height:24px"><span style="letter-spacing:-0.236px">Histogram</span></span></div>
<div class="grp" style="left:20px;top:55px;width:702px;height:633px"><b><span style="letter-spacing:-0.010px">Färgkarta</span></b></div>
<div class="t" style="left:32px;top:90px;"><span style="letter-spacing:-0.096px">Färgintepolering</span></div>
<div class="combo" style="left:158px;top:86px;width:78px;height:20px"><span class="t" style="left:3px;top:3px"><span style="letter-spacing:-0.103px">Diskret</span></span><i></i></div>
<div class="btn " style="left:33px;top:127px;width:75px;height:23px;line-height:21px;"><span style="letter-spacing:-0.147px">Lägg till rad</span></div>
<div class="btn " style="left:114px;top:127px;width:82px;height:23px;line-height:21px;"><span style="letter-spacing:0.009px">Ta bort värden</span></div>
<div class="btn " style="left:201px;top:127px;width:76px;height:23px;line-height:21px;"><span style="letter-spacing:-0.085px">Sortera</span></div>
<div class="combo" style="left:526px;top:128px;width:61px;height:20px"><span class="t" style="left:3px;top:3px"><span style="letter-spacing:-0.234px">Band 1</span></span><i></i></div>
<div class="btn " style="left:593px;top:126px;width:26px;height:26px;line-height:24px;border-color:#858585;"><svg class="a" style="left:4px;top:4px" width="18" height="17"><rect x="1.500" y="1.500" width="14" height="12" fill="#fff" stroke="#3f78d8"/><rect x="1" y="1" width="15" height="3" fill="#3f78d8"/><path d="M3 6.500h11M3 8.500h11M3 10.500h11" stroke="#b4bcc8" stroke-width="1"/><path d="M13 8.500 l1.200 2.500 l2.700 .3 l-2 1.900 l.6 2.700 l-2.500 -1.400 l-2.500 1.400 l.6 -2.700 l-2 -1.900 l2.700 -.3z" fill="#ffd83a" stroke="#e0a800" stroke-width=".5"/></svg></div>
<div class="btn " style="left:651px;top:126px;width:26px;height:26px;line-height:24px;border-color:#858585;"><svg class="a" style="left:4px;top:5px" width="17" height="15"><path d="M6 4 l7 -3 l2 4z" fill="#dfe8f4" stroke="#8a9ab0" stroke-width=".7"/><path d="M1.500 3.500 h4 l1 1.500 h8.500 v8.500 h-13.500z" fill="#3f7ae0" stroke="#2a57b0"/><path d="M2 8 h13 v3 h-13z" fill="#8ab4f4" opacity=".7"/></svg></div>
<div class="btn " style="left:683px;top:126px;width:26px;height:26px;line-height:24px;border-color:#858585;"><svg class="a" style="left:5px;top:5px" width="16" height="15"><rect x="1.500" y="1.500" width="12" height="12" rx="1" fill="#5a5a98" stroke="#46467a"/><rect x="4" y="2" width="7" height="4.500" fill="#d8dcec"/><rect x="3.500" y="8.500" width="8" height="5" fill="#b8bcd8"/></svg></div>
<div class="inp" style="left:34px;top:159px;width:675px;height:516px;border-color:#3d8fe8;border-radius:1px"></div>
<div class="a" style="left:35px;top:160px;width:672px;height:21px;box-sizing:border-box;border-bottom:1px solid #8a8a8a;background:linear-gradient(#ffffff,#f4f4f4 55%,#e2e2e2)"></div>
<div class="a" style="left:134px;top:160px;width:2px;height:21px;background:#777"></div>
<div class="a" style="left:234px;top:160px;width:2px;height:21px;background:#777"></div>
<div class="a" style="left:35px;top:160px;width:1px;height:21px;background:#999"></div>
<div class="a" style="left:706px;top:160px;width:1px;height:21px;background:#777"></div>
<div class="t" style="left:39px;top:165px;"><span style="letter-spacing:-0.375px">Värde</span></div><div class="t" style="left:139px;top:165px;"><span style="letter-spacing:-0.156px">Färg</span></div><div class="t" style="left:239px;top:165px;"><span style="letter-spacing:0.129px">Etikett</span></div>
<div class="a" style="left:35px;top:181px;width:672px;height:13px;background:#3399ff"></div><div class="a" style="left:135px;top:181px;width:100px;height:13px;box-sizing:border-box;border:1px dotted #c9a27a"></div><div class="a" style="left:45px;top:187px;width:10px;height:0;border-top:1px dotted #999"></div><div class="row" style="left:57px;top:181px;color:#fff;"><span style="letter-spacing:-0.080px">0.000000</span></div><div class="row" style="left:237px;top:181px;color:#fff;"><span style="letter-spacing:-0.080px">0.000000</span></div><div class="a" style="left:135px;top:194px;width:100px;height:13px;background:rgb(0,0,255)"></div><div class="a" style="left:45px;top:200px;width:10px;height:0;border-top:1px dotted #999"></div><div class="row" style="left:57px;top:194px;"><span style="letter-spacing:0.022px">3.711721</span></div><div class="row" style="left:237px;top:194px;"><span style="letter-spacing:0.022px">3.711721</span></div><div class="a" style="left:135px;top:207px;width:100px;height:13px;background:rgb(13,0,242)"></div><div class="a" style="left:45px;top:213px;width:10px;height:0;border-top:1px dotted #999"></div><div class="row" style="left:57px;top:207px;"><span style="letter-spacing:-0.080px">7.423443</span></div><div class="row" style="left:237px;top:207px;"><span style="letter-spacing:-0.080px">7.423443</span></div><div class="a" style="left:135px;top:220px;width:100px;height:13px;background:rgb(27,0,228)"></div><div class="a" style="left:45px;top:226px;width:10px;height:0;border-top:1px dotted #999"></div><div class="row" style="left:57px;top:220px;"><span style="letter-spacing:0.006px">11.135164</span></div><div class="row" style="left:237px;top:220px;"><span style="letter-spacing:0.006px">11.135164</span></div><div class="a" style="left:135px;top:233px;width:100px;height:13px;background:rgb(40,0,215)"></div><div class="a" style="left:45px;top:239px;width:10px;height:0;border-top:1px dotted #999"></div><div class="row" style="left:57px;top:233px;"><span style="letter-spacing:-0.085px">14.846885</span></div><div class="row" style="left:237px;top:233px;"><span style="letter-spacing:-0.085px">14.846885</span></div><div class="a" style="left:135px;top:246px;width:100px;height:13px;background:rgb(54,0,201)"></div><div class="a" style="left:45px;top:252px;width:10px;height:0;border-top:1px dotted #999"></div><div class="row" style="left:57px;top:246px;"><span style="letter-spacing:-0.085px">18.558607</span></div><div class="row" style="left:237px;top:246px;"><span style="letter-spacing:-0.085px">18.558607</span></div><div class="a" style="left:135px;top:259px;width:100px;height:13px;background:rgb(67,0,188)"></div><div class="a" style="left:45px;top:265px;width:10px;height:0;border-top:1px dotted #999"></div><div class="row" style="left:57px;top:259px;"><span style="letter-spacing:-0.085px">22.270328</span></div><div class="row" style="left:237px;top:259px;"><span style="letter-spacing:-0.085px">22.270328</span></div><div class="a" style="left:135px;top:272px;width:100px;height:13px;background:rgb(81,0,174)"></div><div class="a" style="left:45px;top:278px;width:10px;height:0;border-top:1px dotted #999"></div><div class="row" style="left:57px;top:272px;"><span style="letter-spacing:-0.085px">25.982049</span></div><div class="row" style="left:237px;top:272px;"><span style="letter-spacing:-0.085px">25.982049</span></div><div class="a" style="left:135px;top:285px;width:100px;height:13px;background:rgb(94,0,161)"></div><div class="a" style="left:45px;top:291px;width:10px;height:0;border-top:1px dotted #999"></div><div class="row" style="left:57px;top:285px;"><span style="letter-spacing:-0.085px">29.693771</span></div><div class="row" style="left:237px;top:285px;"><span style="letter-spacing:-0.085px">29.693771</span></div><div class="a" style="left:135px;top:298px;width:100px;height:13px;background:rgb(107,0,148)"></div><div class="a" style="left:45px;top:304px;width:10px;height:0;border-top:1px dotted #999"></div><div class="row" style="left:57px;top:298px;"><span style="letter-spacing:-0.085px">33.405492</span></div><div class="row" style="left:237px;top:298px;"><span style="letter-spacing:-0.085px">33.405492</span></div><div class="a" style="left:135px;top:311px;width:100px;height:13px;background:rgb(121,0,134)"></div><div class="a" style="left:45px;top:317px;width:10px;height:0;border-top:1px dotted #999"></div><div class="row" style="left:57px;top:311px;"><span style="letter-spacing:0.006px">37.117213</span></div><div class="row" style="left:237px;top:311px;"><span style="letter-spacing:0.006px">37.117213</span></div><div class="a" style="left:135px;top:324px;width:100px;height:13px;background:rgb(134,0,121)"></div><div class="a" style="left:45px;top:330px;width:10px;height:0;border-top:1px dotted #999"></div><div class="row" style="left:57px;top:324px;"><span style="letter-spacing:-0.085px">40.828935</span></div><div class="row" style="left:237px;top:324px;"><span style="letter-spacing:-0.085px">40.828935</span></div><div class="a" style="left:135px;top:337px;width:100px;height:13px;background:rgb(148,0,107)"></div><div class="a" style="left:45px;top:343px;width:10px;height:0;border-top:1px dotted #999"></div><div class="row" style="left:57px;top:337px;"><span style="letter-spacing:-0.085px">44.540656</span></div><div class="row" style="left:237px;top:337px;"><span style="letter-spacing:-0.085px">44.540656</span></div><div class="a" style="left:135px;top:350px;width:100px;height:13px;background:rgb(161,0,94)"></div><div class="a" style="left:45px;top:356px;width:10px;height:0;border-top:1px dotted #999"></div><div class="row" style="left:57px;top:350px;"><span style="letter-spacing:-0.085px">48.252377</span></div><div class="row" style="left:237px;top:350px;"><span style="letter-spacing:-0.085px">48.252377</span></div><div class="a" style="left:135px;top:363px;width:100px;height:13px;background:rgb(174,0,81)"></div><div class="a" style="left:45px;top:369px;width:10px;height:0;border-top:1px dotted #999"></div><div class="row" style="left:57px;top:363px;"><span style="letter-spacing:-0.085px">51.964098</span></div><div class="row" style="left:237px;top:363px;"><span style="letter-spacing:-0.085px">51.964098</span></div><div class="a" style="left:135px;top:376px;width:100px;height:13px;background:rgb(188,0,67)"></div><div class="a" style="left:45px;top:382px;width:10px;height:0;border-top:1px dotted #999"></div><div class="row" style="left:57px;top:376px;"><span style="letter-spacing:-0.085px">55.675820</span></div><div class="row" style="left:237px;top:376px;"><span style="letter-spacing:-0.085px">55.675820</span></div><div class="a" style="left:135px;top:389px;width:100px;height:13px;background:rgb(201,0,54)"></div><div class="a" style="left:45px;top:395px;width:10px;height:0;border-top:1px dotted #999"></div><div class="row" style="left:57px;top:389px;"><span style="letter-spacing:-0.085px">59.387541</span></div><div class="row" style="left:237px;top:389px;"><span style="letter-spacing:-0.085px">59.387541</span></div><div class="a" style="left:135px;top:402px;width:100px;height:13px;background:rgb(215,0,40)"></div><div class="a" style="left:45px;top:408px;width:10px;height:0;border-top:1px dotted #999"></div><div class="row" style="left:57px;top:402px;"><span style="letter-spacing:-0.085px">63.099262</span></div><div class="row" style="left:237px;top:402px;"><span style="letter-spacing:-0.085px">63.099262</span></div><div class="a" style="left:135px;top:415px;width:100px;height:13px;background:rgb(228,0,27)"></div><div class="a" style="left:45px;top:421px;width:10px;height:0;border-top:1px dotted #999"></div><div class="row" style="left:57px;top:415px;"><span style="letter-spacing:-0.085px">66.810984</span></div><div class="row" style="left:237px;top:415px;"><span style="letter-spacing:-0.085px">66.810984</span></div><div class="a" style="left:135px;top:428px;width:100px;height:13px;background:rgb(242,0,13)"></div><div class="a" style="left:45px;top:434px;width:10px;height:0;border-top:1px dotted #999"></div><div class="row" style="left:57px;top:428px;"><span style="letter-spacing:-0.085px">70.522705</span></div><div class="row" style="left:237px;top:428px;"><span style="letter-spacing:-0.085px">70.522705</span></div><div class="a" style="left:135px;top:441px;width:100px;height:13px;background:rgb(255,0,0)"></div><div class="a" style="left:45px;top:447px;width:10px;height:0;border-top:1px dotted #999"></div><div class="row" style="left:57px;top:441px;"><span style="letter-spacing:-0.085px">70.522706</span></div><div class="row" style="left:237px;top:441px;"><span style="letter-spacing:-0.125px">9999999999999</span></div><div class="a" style="left:45px;top:182px;width:0;height:266px;border-left:1px dotted #999"></div>
<div class="grp" style="left:20px;top:701px;width:709px;height:55px"><b><span style="letter-spacing:-0.023px">Skapa ny färgkarta</span></b></div>
<div class="t" style="left:32px;top:726px;"><span style="letter-spacing:-0.026px">Antal värden</span></div>
<div class="inp" style="left:192px;top:722px;width:47px;height:20px"><span class="t" style="left:4px;top:3px">20</span>
<svg class="a" style="right:1px;top:1px" width="15" height="17"><rect x="0" y="0" width="15" height="17" fill="#f0f0f0"/><path d="M4 6.5 L7.5 3 L11 6.5Z M4 10.5 L7.5 14 L11 10.5Z" fill="#000"/></svg></div>
<div class="t" style="left:243px;top:726px;"><span style="letter-spacing:-0.245px">Klassificeringsmetod</span></div>
<div class="combo" style="left:403px;top:721px;width:153px;height:20px"><span class="t" style="left:3px;top:3px"><span style="letter-spacing:-0.167px">Jämna intervall</span></span><i></i></div>
<div class="btn " style="left:562px;top:720px;width:153px;height:24px;line-height:22px;"><span style="letter-spacing:-0.271px">Klassificera</span></div>

<div class="btn " style="left:7px;top:776px;width:179px;height:23px;line-height:21px;"><span style="letter-spacing:-0.041px">Återskapa standardstil</span></div>
<div class="btn " style="left:192px;top:776px;width:179px;height:23px;line-height:21px;"><span style="letter-spacing:-0.201px">Spara som standard</span></div>
<div class="btn " style="left:377px;top:776px;width:179px;height:23px;line-height:21px;"><span style="letter-spacing:-0.004px">Läs in stil...</span></div>
<div class="btn " style="left:562px;top:776px;width:179px;height:23px;line-height:21px;"><span style="letter-spacing:-0.005px">Spara stil...</span></div>
<div class="btn def" style="left:411px;top:804px;width:75px;height:24px;line-height:22px;"><span style="letter-spacing:-0.953px">OK</span></div>
<div class="btn " style="left:496px;top:804px;width:75px;height:24px;line-height:22px;"><span style="letter-spacing:-0.375px">Cancel</span></div>
<div class="btn " style="left:581px;top:804px;width:75px;height:24px;line-height:22px;"><span style="letter-spacing:-0.306px">Apply</span></div>
<div class="btn " style="left:666px;top:804px;width:75px;height:24px;line-height:22px;"><span style="letter-spacing:-0.406px">Help</span></div>
<svg class="a" style="left:738px;top:824px" width="13" height="13"><path d="M12 2 L2 12 M12 6 L6 12 M12 10 L10 12" stroke="#a0a0a0" stroke-width="1"/><path d="M12 3 L3 12 M12 7 L7 12 M12 11 L11 12" stroke="#fff" stroke-width="1"/></svg>

</div>
<div class="a" style="left:0;top:0;width:751px;height:12px;background:linear-gradient(#b2cfee,#c4daf2 95%)"></div>
<div class="a" style="left:0;top:12px;width:745px;height:1px;background:#5a6a80"></div>
<div class="a" style="left:666px;top:0;width:85px;height:2px;background:#0000ff"></div>
</div></div>
</body></html>
